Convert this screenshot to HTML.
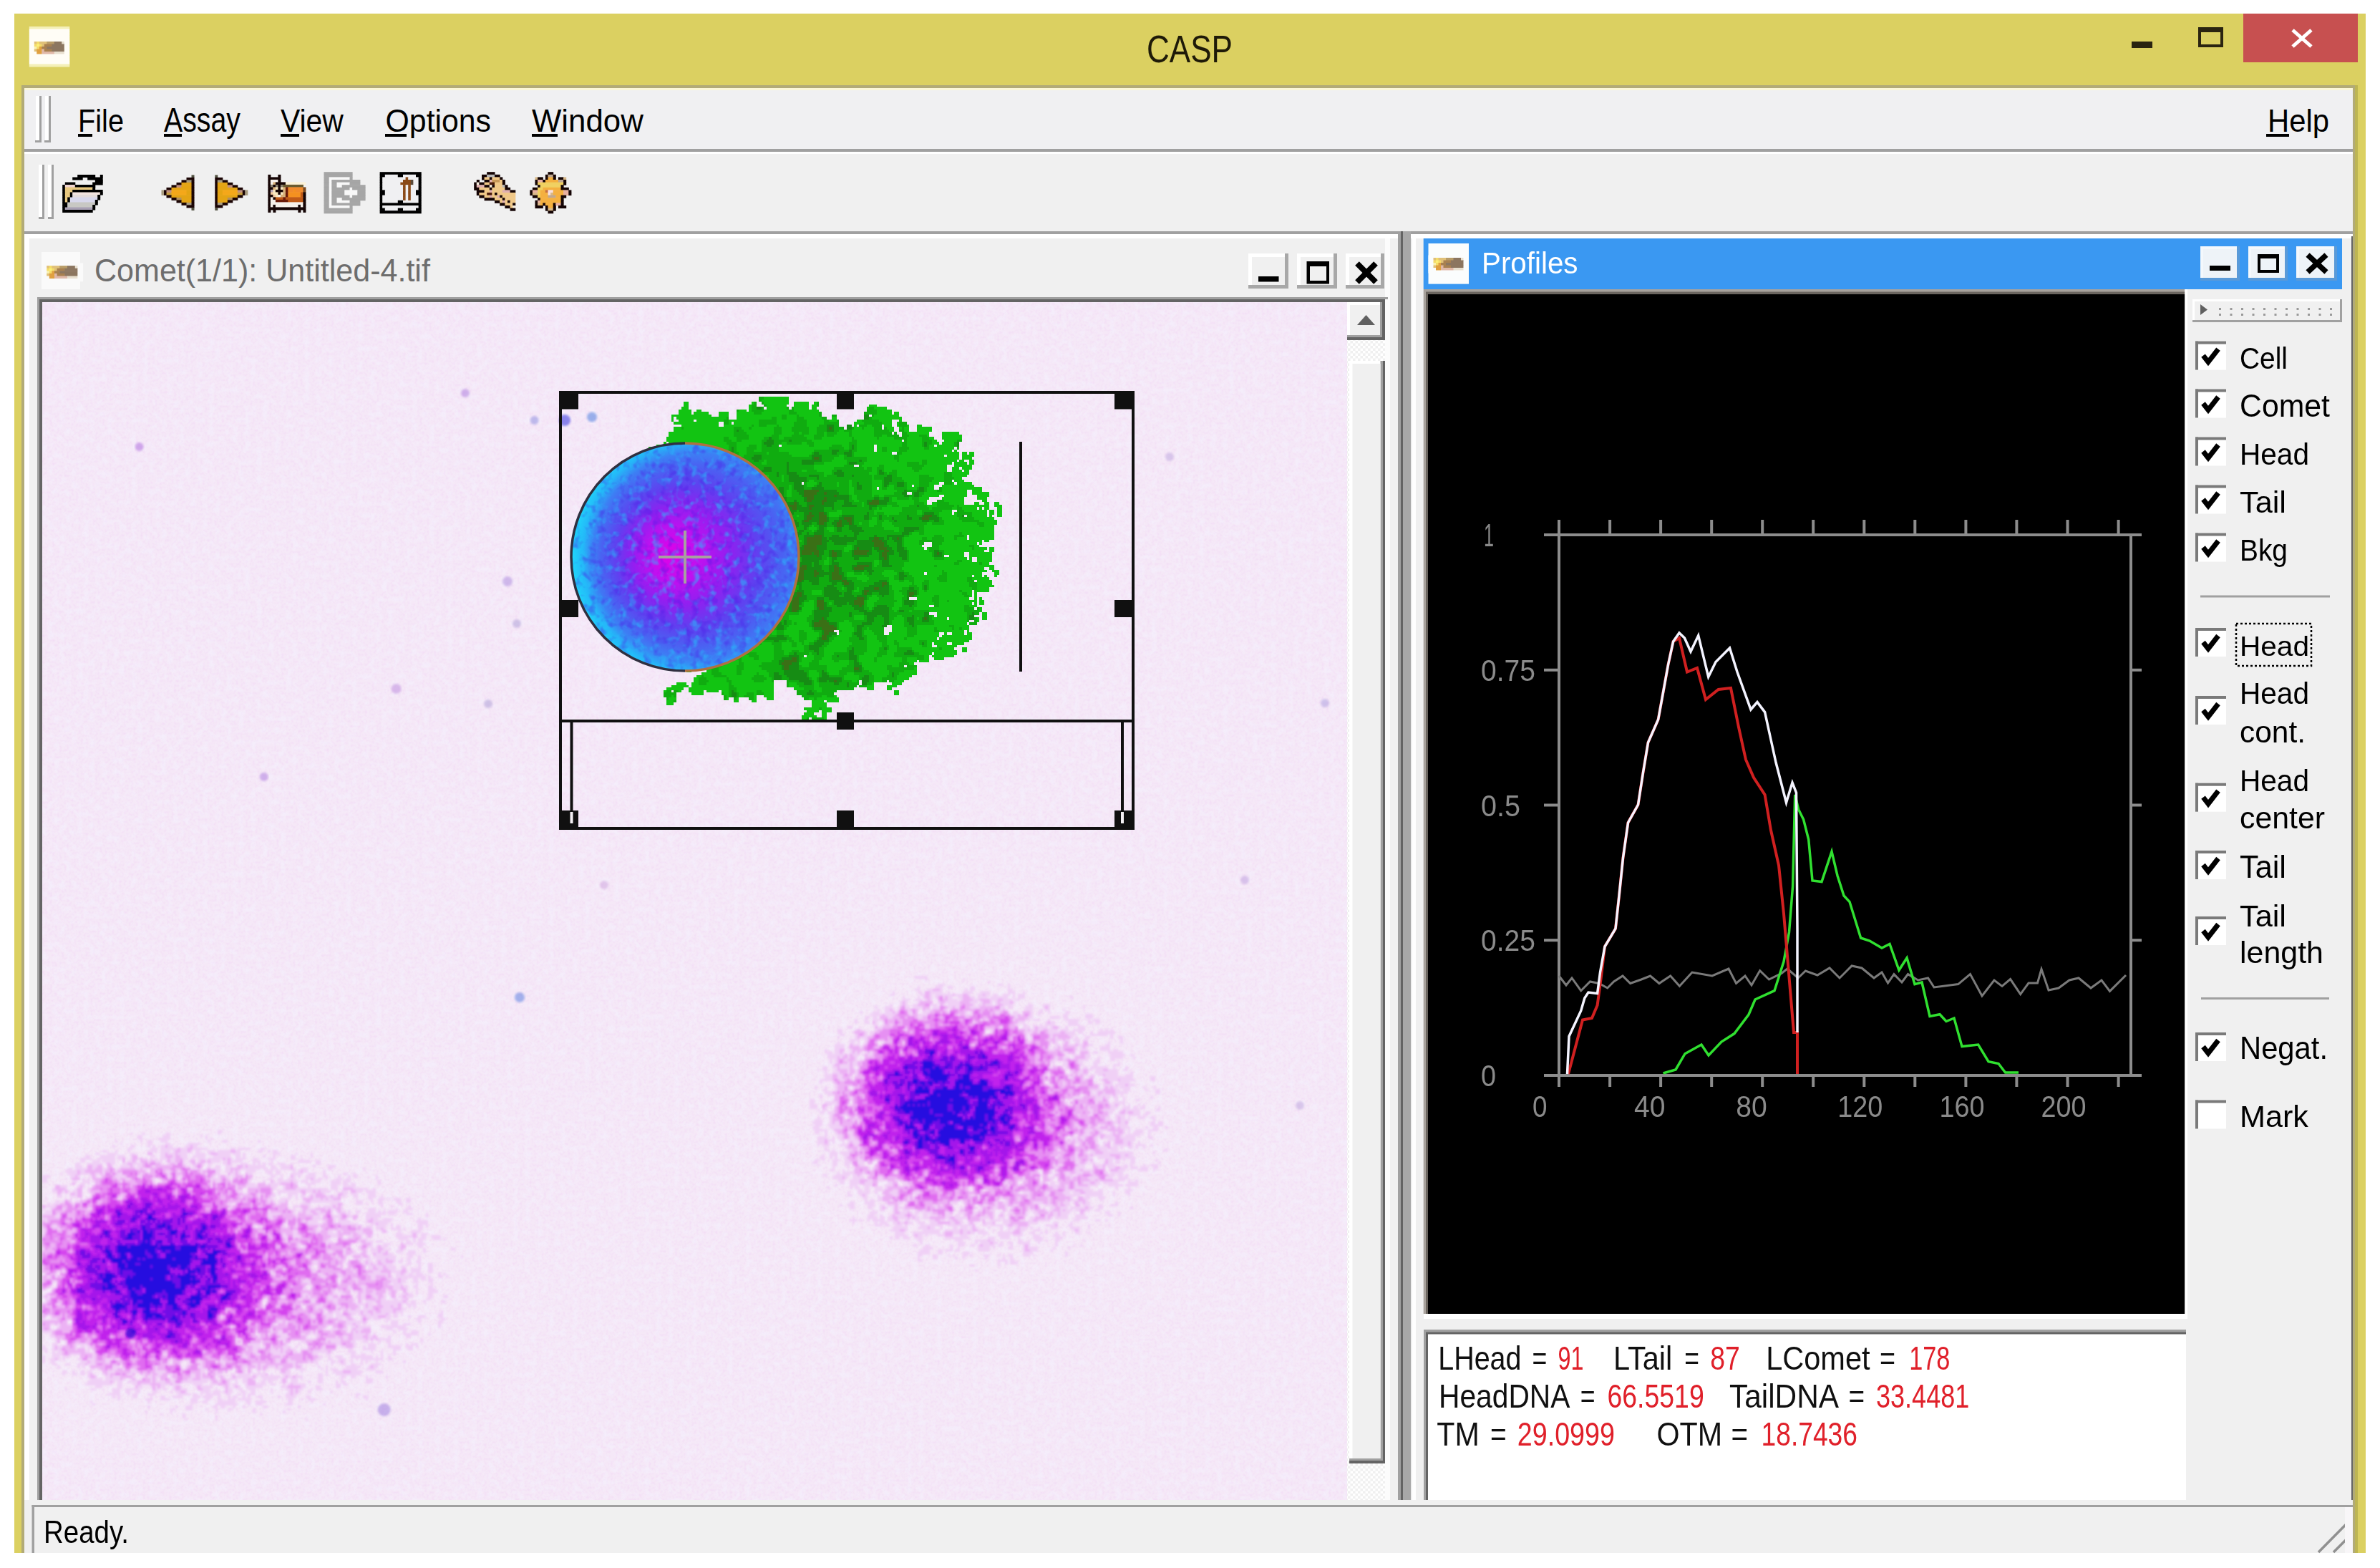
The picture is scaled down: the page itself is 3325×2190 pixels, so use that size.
<!DOCTYPE html>
<html><head><meta charset="utf-8"><title>CASP</title>
<style>
html,body{margin:0;padding:0;background:#fff;}
body{width:3325px;height:2190px;overflow:hidden;}
svg text{font-family:"Liberation Sans",sans-serif;}
</style></head>
<body>
<svg width="3325" height="2190" viewBox="0 0 3325 2190" style="display:block">
<rect x="0.0" y="0.0" width="3325.0" height="2190.0" fill="#ffffff" />
<rect x="20.0" y="19.0" width="3285.0" height="2150.0" fill="#dbd061" />
<rect x="30.0" y="119.0" width="3261.0" height="2050.0" fill="#b2ab77" />
<rect x="3290.0" y="119.0" width="4.0" height="2050.0" fill="#bdb553" />
<rect x="34.0" y="123.0" width="3253.0" height="2046.0" fill="#fbf7d6" />
<rect x="34.0" y="126.0" width="3253.0" height="2043.0" fill="#f0f0f0" />
<defs><linearGradient id="cometg" x1="0" x2="1" y1="0" y2="0"><stop offset="0" stop-color="#f7e27a"/><stop offset="0.3" stop-color="#e8b650"/><stop offset="0.6" stop-color="#a98a5c"/><stop offset="1" stop-color="#8a7a6a"/></linearGradient></defs>
<text x="1602.0" y="86.5" font-size="53.72" fill="#1e1a08" textLength="120.0" lengthAdjust="spacingAndGlyphs" >CASP</text>
<rect x="2978.0" y="58.0" width="29.0" height="9.0" fill="#2a2410" />
<rect x="3071.0" y="38.0" width="35.0" height="28.0" fill="#2a2410" />
<rect x="3075.0" y="45.0" width="27.0" height="17.0" fill="#dbd061" />
<rect x="3134.0" y="19.0" width="160.0" height="68.0" fill="#c75050" />
<line x1="3203.0" y1="42.0" x2="3229.0" y2="65.0" stroke="#ffffff" stroke-width="5" />
<line x1="3229.0" y1="42.0" x2="3203.0" y2="65.0" stroke="#ffffff" stroke-width="5" />
<rect x="34.0" y="126.0" width="3253.0" height="82.0" fill="#f0f0f2" />
<rect x="34.0" y="208.0" width="3253.0" height="4.0" fill="#a0a0a0" />
<rect x="34.0" y="212.0" width="3253.0" height="3.0" fill="#ffffff" />
<rect x="55.0" y="134.0" width="3.0" height="65.0" fill="#a0a0a0" />
<rect x="68.0" y="134.0" width="3.0" height="65.0" fill="#a0a0a0" />
<rect x="50.0" y="134.0" width="5.0" height="65.0" fill="#ffffff" />
<rect x="63.0" y="134.0" width="5.0" height="65.0" fill="#ffffff" />
<rect x="49.0" y="196.0" width="9.0" height="3.0" fill="#a0a0a0" />
<rect x="62.0" y="196.0" width="9.0" height="3.0" fill="#a0a0a0" />
<text x="109.0" y="183.6" font-size="44.97" fill="#000000" textLength="64.0" lengthAdjust="spacingAndGlyphs" >File</text>
<text x="229.0" y="183.6" font-size="47.38" fill="#000000" textLength="107.0" lengthAdjust="spacingAndGlyphs" >Assay</text>
<text x="392.0" y="183.6" font-size="44.97" fill="#000000" textLength="87.9" lengthAdjust="spacingAndGlyphs" >View</text>
<text x="538.6" y="183.6" font-size="44.97" fill="#000000" textLength="147.4" lengthAdjust="spacingAndGlyphs" >Options</text>
<text x="743.0" y="183.6" font-size="44.97" fill="#000000" textLength="155.9" lengthAdjust="spacingAndGlyphs" >Window</text>
<rect x="109.0" y="187.0" width="20.0" height="4.0" fill="#000000" />
<rect x="229.0" y="187.0" width="25.0" height="4.0" fill="#000000" />
<rect x="392.0" y="187.0" width="26.0" height="4.0" fill="#000000" />
<rect x="538.0" y="187.0" width="30.0" height="4.0" fill="#000000" />
<rect x="743.0" y="187.0" width="36.0" height="4.0" fill="#000000" />
<text x="3168.0" y="183.6" font-size="44.97" fill="#000000" textLength="86.0" lengthAdjust="spacingAndGlyphs" >Help</text>
<rect x="3166.0" y="187.0" width="32.0" height="4.0" fill="#000000" />
<rect x="34.0" y="215.0" width="3253.0" height="108.0" fill="#f0f0f0" />
<rect x="34.0" y="323.0" width="3253.0" height="4.0" fill="#a0a0a0" />
<rect x="34.0" y="327.0" width="3253.0" height="3.0" fill="#ffffff" />
<rect x="59.0" y="230.0" width="3.0" height="76.0" fill="#a0a0a0" />
<rect x="72.0" y="230.0" width="3.0" height="76.0" fill="#a0a0a0" />
<rect x="54.0" y="230.0" width="5.0" height="76.0" fill="#ffffff" />
<rect x="67.0" y="230.0" width="5.0" height="76.0" fill="#ffffff" />
<rect x="54.0" y="303.0" width="8.0" height="3.0" fill="#a0a0a0" />
<rect x="67.0" y="303.0" width="8.0" height="3.0" fill="#a0a0a0" />
<rect x="108.2" y="244.0" width="25.0" height="4.0" fill="#000000" />
<rect x="139.8" y="244.0" width="4.0" height="4.0" fill="#000000" />
<rect x="101.2" y="247.5" width="14.5" height="4.0" fill="#000000" />
<rect x="122.2" y="247.5" width="21.5" height="4.0" fill="#000000" />
<rect x="132.8" y="251.0" width="11.0" height="4.0" fill="#000000" />
<rect x="90.8" y="254.5" width="14.5" height="4.0" fill="#000000" />
<rect x="129.2" y="254.5" width="14.5" height="4.0" fill="#000000" />
<rect x="87.2" y="258.0" width="4.0" height="4.0" fill="#000000" />
<rect x="90.8" y="258.0" width="14.5" height="4.0" fill="#f0d4d0" />
<rect x="104.8" y="258.0" width="28.5" height="4.0" fill="#000000" />
<rect x="87.2" y="261.5" width="4.0" height="4.0" fill="#000000" />
<rect x="90.8" y="261.5" width="39.0" height="4.0" fill="#e8c880" />
<rect x="129.2" y="261.5" width="4.0" height="4.0" fill="#000000" />
<rect x="87.2" y="265.0" width="4.0" height="4.0" fill="#000000" />
<rect x="90.8" y="265.0" width="11.0" height="4.0" fill="#e8c880" />
<rect x="101.2" y="265.0" width="42.5" height="4.0" fill="#000000" />
<rect x="87.2" y="268.5" width="4.0" height="4.0" fill="#000000" />
<rect x="90.8" y="268.5" width="7.5" height="4.0" fill="#e8c880" />
<rect x="97.8" y="268.5" width="4.0" height="4.0" fill="#000000" />
<rect x="101.2" y="268.5" width="39.0" height="4.0" fill="#f2e4e0" />
<rect x="139.8" y="268.5" width="4.0" height="4.0" fill="#000000" />
<rect x="87.2" y="272.0" width="4.0" height="4.0" fill="#000000" />
<rect x="90.8" y="272.0" width="7.5" height="4.0" fill="#e8c880" />
<rect x="97.8" y="272.0" width="4.0" height="4.0" fill="#000000" />
<rect x="101.2" y="272.0" width="35.5" height="4.0" fill="#e4dcdc" />
<rect x="136.2" y="272.0" width="4.0" height="4.0" fill="#000000" />
<rect x="87.2" y="275.5" width="4.0" height="4.0" fill="#000000" />
<rect x="90.8" y="275.5" width="4.0" height="4.0" fill="#e8c880" />
<rect x="94.2" y="275.5" width="4.0" height="4.0" fill="#000000" />
<rect x="97.8" y="275.5" width="39.0" height="4.0" fill="#d8d8ec" />
<rect x="136.2" y="275.5" width="4.0" height="4.0" fill="#000000" />
<rect x="87.2" y="279.0" width="4.0" height="4.0" fill="#000000" />
<rect x="90.8" y="279.0" width="4.0" height="4.0" fill="#e8c880" />
<rect x="94.2" y="279.0" width="4.0" height="4.0" fill="#000000" />
<rect x="97.8" y="279.0" width="35.5" height="4.0" fill="#d8d8ec" />
<rect x="132.8" y="279.0" width="4.0" height="4.0" fill="#000000" />
<rect x="87.2" y="282.5" width="7.5" height="4.0" fill="#000000" />
<rect x="94.2" y="282.5" width="39.0" height="4.0" fill="#c8c8c4" />
<rect x="132.8" y="282.5" width="4.0" height="4.0" fill="#000000" />
<rect x="87.2" y="286.0" width="7.5" height="4.0" fill="#000000" />
<rect x="94.2" y="286.0" width="35.5" height="4.0" fill="#c8c8c4" />
<rect x="129.2" y="286.0" width="4.0" height="4.0" fill="#000000" />
<rect x="87.2" y="289.5" width="4.0" height="4.0" fill="#000000" />
<rect x="90.8" y="289.5" width="39.0" height="4.0" fill="#a8a0b4" />
<rect x="129.2" y="289.5" width="4.0" height="4.0" fill="#000000" />
<rect x="87.2" y="293.0" width="42.5" height="4.0" fill="#000000" />
<rect x="267.5" y="244.4" width="4.0" height="4.0" fill="#505040" />
<rect x="260.5" y="247.9" width="11.0" height="4.0" fill="#1a0404" />
<rect x="253.5" y="251.4" width="7.5" height="4.0" fill="#1a0404" />
<rect x="260.5" y="251.4" width="7.5" height="4.0" fill="#a89c80" />
<rect x="267.5" y="251.4" width="4.0" height="4.0" fill="#1a0404" />
<rect x="246.5" y="254.9" width="7.5" height="4.0" fill="#1a0404" />
<rect x="253.5" y="254.9" width="14.5" height="4.0" fill="#e4a414" />
<rect x="267.5" y="254.9" width="4.0" height="4.0" fill="#1a0404" />
<rect x="239.5" y="258.4" width="7.5" height="4.0" fill="#1a0404" />
<rect x="246.5" y="258.4" width="7.5" height="4.0" fill="#c09080" />
<rect x="253.5" y="258.4" width="14.5" height="4.0" fill="#e4a414" />
<rect x="267.5" y="258.4" width="4.0" height="4.0" fill="#1a0404" />
<rect x="232.5" y="261.9" width="7.5" height="4.0" fill="#1a0404" />
<rect x="239.5" y="261.9" width="28.5" height="4.0" fill="#e4a414" />
<rect x="267.5" y="261.9" width="4.0" height="4.0" fill="#1a0404" />
<rect x="225.5" y="265.4" width="4.0" height="4.0" fill="#a89c80" />
<rect x="229.0" y="265.4" width="4.0" height="4.0" fill="#1a0404" />
<rect x="232.5" y="265.4" width="7.5" height="4.0" fill="#c09080" />
<rect x="239.5" y="265.4" width="21.5" height="4.0" fill="#f4a81a" />
<rect x="260.5" y="265.4" width="7.5" height="4.0" fill="#e4a414" />
<rect x="267.5" y="265.4" width="4.0" height="4.0" fill="#1a0404" />
<rect x="225.5" y="268.9" width="4.0" height="4.0" fill="#a89c80" />
<rect x="229.0" y="268.9" width="4.0" height="4.0" fill="#1a0404" />
<rect x="232.5" y="268.9" width="7.5" height="4.0" fill="#c8a040" />
<rect x="239.5" y="268.9" width="21.5" height="4.0" fill="#f4a81a" />
<rect x="260.5" y="268.9" width="7.5" height="4.0" fill="#e4a414" />
<rect x="267.5" y="268.9" width="4.0" height="4.0" fill="#1a0404" />
<rect x="232.5" y="272.4" width="7.5" height="4.0" fill="#1a0404" />
<rect x="239.5" y="272.4" width="28.5" height="4.0" fill="#e4a414" />
<rect x="267.5" y="272.4" width="4.0" height="4.0" fill="#1a0404" />
<rect x="239.5" y="275.9" width="7.5" height="4.0" fill="#1a0404" />
<rect x="246.5" y="275.9" width="7.5" height="4.0" fill="#b09060" />
<rect x="253.5" y="275.9" width="14.5" height="4.0" fill="#e4a414" />
<rect x="267.5" y="275.9" width="4.0" height="4.0" fill="#1a0404" />
<rect x="246.5" y="279.4" width="7.5" height="4.0" fill="#1a0404" />
<rect x="253.5" y="279.4" width="14.5" height="4.0" fill="#e4a414" />
<rect x="267.5" y="279.4" width="4.0" height="4.0" fill="#1a0404" />
<rect x="253.5" y="282.9" width="7.5" height="4.0" fill="#1a0404" />
<rect x="260.5" y="282.9" width="7.5" height="4.0" fill="#a89c80" />
<rect x="267.5" y="282.9" width="4.0" height="4.0" fill="#1a0404" />
<rect x="260.5" y="286.4" width="11.0" height="4.0" fill="#1a0404" />
<rect x="267.5" y="289.9" width="4.0" height="4.0" fill="#505040" />
<rect x="300.3" y="244.4" width="4.0" height="4.0" fill="#505040" />
<rect x="300.3" y="247.9" width="11.0" height="4.0" fill="#1a0404" />
<rect x="300.3" y="251.4" width="4.0" height="4.0" fill="#1a0404" />
<rect x="303.8" y="251.4" width="7.5" height="4.0" fill="#a89c80" />
<rect x="310.8" y="251.4" width="7.5" height="4.0" fill="#1a0404" />
<rect x="300.3" y="254.9" width="4.0" height="4.0" fill="#1a0404" />
<rect x="303.8" y="254.9" width="14.5" height="4.0" fill="#e4a414" />
<rect x="317.8" y="254.9" width="7.5" height="4.0" fill="#1a0404" />
<rect x="300.3" y="258.4" width="4.0" height="4.0" fill="#1a0404" />
<rect x="303.8" y="258.4" width="14.5" height="4.0" fill="#e4a414" />
<rect x="317.8" y="258.4" width="7.5" height="4.0" fill="#c09080" />
<rect x="324.8" y="258.4" width="7.5" height="4.0" fill="#1a0404" />
<rect x="300.3" y="261.9" width="4.0" height="4.0" fill="#1a0404" />
<rect x="303.8" y="261.9" width="28.5" height="4.0" fill="#e4a414" />
<rect x="331.8" y="261.9" width="7.5" height="4.0" fill="#1a0404" />
<rect x="300.3" y="265.4" width="4.0" height="4.0" fill="#1a0404" />
<rect x="303.8" y="265.4" width="7.5" height="4.0" fill="#e4a414" />
<rect x="310.8" y="265.4" width="21.5" height="4.0" fill="#f4a81a" />
<rect x="331.8" y="265.4" width="7.5" height="4.0" fill="#c09080" />
<rect x="338.8" y="265.4" width="4.0" height="4.0" fill="#1a0404" />
<rect x="342.3" y="265.4" width="4.0" height="4.0" fill="#a89c80" />
<rect x="300.3" y="268.9" width="4.0" height="4.0" fill="#1a0404" />
<rect x="303.8" y="268.9" width="7.5" height="4.0" fill="#e4a414" />
<rect x="310.8" y="268.9" width="21.5" height="4.0" fill="#f4a81a" />
<rect x="331.8" y="268.9" width="7.5" height="4.0" fill="#c8a040" />
<rect x="338.8" y="268.9" width="4.0" height="4.0" fill="#1a0404" />
<rect x="342.3" y="268.9" width="4.0" height="4.0" fill="#a89c80" />
<rect x="300.3" y="272.4" width="4.0" height="4.0" fill="#1a0404" />
<rect x="303.8" y="272.4" width="28.5" height="4.0" fill="#e4a414" />
<rect x="331.8" y="272.4" width="7.5" height="4.0" fill="#1a0404" />
<rect x="300.3" y="275.9" width="4.0" height="4.0" fill="#1a0404" />
<rect x="303.8" y="275.9" width="14.5" height="4.0" fill="#e4a414" />
<rect x="317.8" y="275.9" width="7.5" height="4.0" fill="#b09060" />
<rect x="324.8" y="275.9" width="7.5" height="4.0" fill="#1a0404" />
<rect x="300.3" y="279.4" width="4.0" height="4.0" fill="#1a0404" />
<rect x="303.8" y="279.4" width="14.5" height="4.0" fill="#e4a414" />
<rect x="317.8" y="279.4" width="7.5" height="4.0" fill="#1a0404" />
<rect x="300.3" y="282.9" width="4.0" height="4.0" fill="#1a0404" />
<rect x="303.8" y="282.9" width="7.5" height="4.0" fill="#a89c80" />
<rect x="310.8" y="282.9" width="7.5" height="4.0" fill="#1a0404" />
<rect x="300.3" y="286.4" width="11.0" height="4.0" fill="#1a0404" />
<rect x="300.3" y="289.9" width="4.0" height="4.0" fill="#505040" />
<rect x="374.4" y="243.9" width="4.0" height="4.0" fill="#140404" />
<rect x="388.4" y="243.9" width="4.0" height="4.0" fill="#140404" />
<rect x="374.4" y="247.4" width="18.0" height="4.0" fill="#140404" />
<rect x="374.4" y="250.9" width="4.0" height="4.0" fill="#140404" />
<rect x="377.9" y="250.9" width="11.0" height="4.0" fill="#f6f0ea" />
<rect x="388.4" y="250.9" width="4.0" height="4.0" fill="#140404" />
<rect x="374.4" y="254.4" width="4.0" height="4.0" fill="#140404" />
<rect x="377.9" y="254.4" width="4.0" height="4.0" fill="#f6f0ea" />
<rect x="381.4" y="254.4" width="4.0" height="4.0" fill="#d8b078" />
<rect x="384.9" y="254.4" width="14.5" height="4.0" fill="#140404" />
<rect x="398.9" y="254.4" width="28.5" height="4.0" fill="#fcf2d8" />
<rect x="374.4" y="257.9" width="4.0" height="4.0" fill="#140404" />
<rect x="377.9" y="257.9" width="4.0" height="4.0" fill="#8a8270" />
<rect x="381.4" y="257.9" width="4.0" height="4.0" fill="#140404" />
<rect x="384.9" y="257.9" width="4.0" height="4.0" fill="#8a8270" />
<rect x="388.4" y="257.9" width="4.0" height="4.0" fill="#140404" />
<rect x="391.9" y="257.9" width="4.0" height="4.0" fill="#8a8270" />
<rect x="395.4" y="257.9" width="28.5" height="4.0" fill="#6a5a30" />
<rect x="374.4" y="261.4" width="7.5" height="4.0" fill="#140404" />
<rect x="381.4" y="261.4" width="4.0" height="4.0" fill="#d8b078" />
<rect x="384.9" y="261.4" width="4.0" height="4.0" fill="#f8e8c0" />
<rect x="388.4" y="261.4" width="4.0" height="4.0" fill="#140404" />
<rect x="391.9" y="261.4" width="4.0" height="4.0" fill="#f8e8c0" />
<rect x="395.4" y="261.4" width="4.0" height="4.0" fill="#d8b078" />
<rect x="398.9" y="261.4" width="4.0" height="4.0" fill="#6a1a08" />
<rect x="402.4" y="261.4" width="21.5" height="4.0" fill="#f08a2c" />
<rect x="423.4" y="261.4" width="4.0" height="4.0" fill="#7a4a20" />
<rect x="374.4" y="264.9" width="4.0" height="4.0" fill="#140404" />
<rect x="377.9" y="264.9" width="4.0" height="4.0" fill="#b8a8b8" />
<rect x="381.4" y="264.9" width="4.0" height="4.0" fill="#f8e8c0" />
<rect x="384.9" y="264.9" width="11.0" height="4.0" fill="#140404" />
<rect x="395.4" y="264.9" width="4.0" height="4.0" fill="#d8b078" />
<rect x="398.9" y="264.9" width="4.0" height="4.0" fill="#6a1a08" />
<rect x="402.4" y="264.9" width="7.5" height="4.0" fill="#f08a2c" />
<rect x="409.4" y="264.9" width="4.0" height="4.0" fill="#f49020" />
<rect x="412.9" y="264.9" width="11.0" height="4.0" fill="#f08a2c" />
<rect x="423.4" y="264.9" width="4.0" height="4.0" fill="#7a4a20" />
<rect x="374.4" y="268.4" width="4.0" height="4.0" fill="#140404" />
<rect x="377.9" y="268.4" width="4.0" height="4.0" fill="#f0c8a0" />
<rect x="381.4" y="268.4" width="7.5" height="4.0" fill="#f8e8c0" />
<rect x="388.4" y="268.4" width="4.0" height="4.0" fill="#140404" />
<rect x="391.9" y="268.4" width="4.0" height="4.0" fill="#f8e8c0" />
<rect x="395.4" y="268.4" width="4.0" height="4.0" fill="#d8b078" />
<rect x="398.9" y="268.4" width="4.0" height="4.0" fill="#6a1a08" />
<rect x="402.4" y="268.4" width="18.0" height="4.0" fill="#f49020" />
<rect x="419.9" y="268.4" width="4.0" height="4.0" fill="#c05a18" />
<rect x="423.4" y="268.4" width="4.0" height="4.0" fill="#140404" />
<rect x="374.4" y="271.9" width="7.5" height="4.0" fill="#140404" />
<rect x="381.4" y="271.9" width="4.0" height="4.0" fill="#f0c8a0" />
<rect x="384.9" y="271.9" width="4.0" height="4.0" fill="#f8e8c0" />
<rect x="388.4" y="271.9" width="4.0" height="4.0" fill="#f6f0ea" />
<rect x="391.9" y="271.9" width="7.5" height="4.0" fill="#d8b078" />
<rect x="398.9" y="271.9" width="4.0" height="4.0" fill="#6a1a08" />
<rect x="402.4" y="271.9" width="18.0" height="4.0" fill="#f49020" />
<rect x="419.9" y="271.9" width="4.0" height="4.0" fill="#c05a18" />
<rect x="423.4" y="271.9" width="4.0" height="4.0" fill="#140404" />
<rect x="374.4" y="275.4" width="4.0" height="4.0" fill="#140404" />
<rect x="377.9" y="275.4" width="4.0" height="4.0" fill="#f6f0ea" />
<rect x="381.4" y="275.4" width="4.0" height="4.0" fill="#140404" />
<rect x="384.9" y="275.4" width="11.0" height="4.0" fill="#c05a18" />
<rect x="395.4" y="275.4" width="4.0" height="4.0" fill="#6a1a08" />
<rect x="398.9" y="275.4" width="25.0" height="4.0" fill="#c05a18" />
<rect x="423.4" y="275.4" width="4.0" height="4.0" fill="#140404" />
<rect x="374.4" y="278.9" width="4.0" height="4.0" fill="#140404" />
<rect x="377.9" y="278.9" width="7.5" height="4.0" fill="#f6f0ea" />
<rect x="384.9" y="278.9" width="18.0" height="4.0" fill="#6a1a08" />
<rect x="402.4" y="278.9" width="21.5" height="4.0" fill="#c05a18" />
<rect x="423.4" y="278.9" width="4.0" height="4.0" fill="#140404" />
<rect x="374.4" y="282.4" width="4.0" height="4.0" fill="#140404" />
<rect x="377.9" y="282.4" width="46.0" height="4.0" fill="#f6f0ea" />
<rect x="423.4" y="282.4" width="4.0" height="4.0" fill="#140404" />
<rect x="374.4" y="285.9" width="4.0" height="4.0" fill="#140404" />
<rect x="377.9" y="285.9" width="4.0" height="4.0" fill="#f6f0ea" />
<rect x="381.4" y="285.9" width="4.0" height="4.0" fill="#140404" />
<rect x="384.9" y="285.9" width="32.0" height="4.0" fill="#f6f0ea" />
<rect x="416.4" y="285.9" width="4.0" height="4.0" fill="#140404" />
<rect x="419.9" y="285.9" width="4.0" height="4.0" fill="#f6f0ea" />
<rect x="423.4" y="285.9" width="4.0" height="4.0" fill="#140404" />
<rect x="374.4" y="289.4" width="53.0" height="4.0" fill="#140404" />
<rect x="374.4" y="292.9" width="4.0" height="4.0" fill="#140404" />
<rect x="381.4" y="292.9" width="4.0" height="4.0" fill="#140404" />
<rect x="416.4" y="292.9" width="4.0" height="4.0" fill="#140404" />
<rect x="423.4" y="292.9" width="4.0" height="4.0" fill="#140404" />
<rect x="452.5" y="240.2" width="40.1" height="4.1" fill="#a6a6a6" />
<rect x="452.5" y="243.8" width="40.1" height="4.1" fill="#a6a6a6" />
<rect x="452.5" y="247.4" width="7.7" height="4.1" fill="#a6a6a6" />
<rect x="459.7" y="247.4" width="29.3" height="4.1" fill="#f8f8f8" />
<rect x="488.5" y="247.4" width="4.1" height="4.1" fill="#a6a6a6" />
<rect x="452.5" y="251.0" width="7.7" height="4.1" fill="#a6a6a6" />
<rect x="459.7" y="251.0" width="4.1" height="4.1" fill="#f8f8f8" />
<rect x="463.3" y="251.0" width="40.1" height="4.1" fill="#a6a6a6" />
<rect x="452.5" y="254.6" width="7.7" height="4.1" fill="#a6a6a6" />
<rect x="459.7" y="254.6" width="4.1" height="4.1" fill="#f8f8f8" />
<rect x="463.3" y="254.6" width="7.7" height="4.1" fill="#a6a6a6" />
<rect x="470.5" y="254.6" width="18.5" height="4.1" fill="#f8f8f8" />
<rect x="488.5" y="254.6" width="14.9" height="4.1" fill="#a6a6a6" />
<rect x="452.5" y="258.2" width="7.7" height="4.1" fill="#a6a6a6" />
<rect x="459.7" y="258.2" width="4.1" height="4.1" fill="#f8f8f8" />
<rect x="463.3" y="258.2" width="7.7" height="4.1" fill="#a6a6a6" />
<rect x="470.5" y="258.2" width="7.7" height="4.1" fill="#f8f8f8" />
<rect x="477.7" y="258.2" width="32.9" height="4.1" fill="#a6a6a6" />
<rect x="452.5" y="261.8" width="7.7" height="4.1" fill="#a6a6a6" />
<rect x="459.7" y="261.8" width="4.1" height="4.1" fill="#f8f8f8" />
<rect x="463.3" y="261.8" width="25.7" height="4.1" fill="#a6a6a6" />
<rect x="488.5" y="261.8" width="4.1" height="4.1" fill="#f8f8f8" />
<rect x="492.1" y="261.8" width="18.5" height="4.1" fill="#a6a6a6" />
<rect x="452.5" y="265.4" width="7.7" height="4.1" fill="#a6a6a6" />
<rect x="459.7" y="265.4" width="4.1" height="4.1" fill="#f8f8f8" />
<rect x="463.3" y="265.4" width="18.5" height="4.1" fill="#a6a6a6" />
<rect x="481.3" y="265.4" width="18.5" height="4.1" fill="#f8f8f8" />
<rect x="499.3" y="265.4" width="11.3" height="4.1" fill="#a6a6a6" />
<rect x="452.5" y="269.0" width="7.7" height="4.1" fill="#a6a6a6" />
<rect x="459.7" y="269.0" width="4.1" height="4.1" fill="#f8f8f8" />
<rect x="463.3" y="269.0" width="18.5" height="4.1" fill="#a6a6a6" />
<rect x="481.3" y="269.0" width="18.5" height="4.1" fill="#f8f8f8" />
<rect x="499.3" y="269.0" width="11.3" height="4.1" fill="#a6a6a6" />
<rect x="452.5" y="272.6" width="7.7" height="4.1" fill="#a6a6a6" />
<rect x="459.7" y="272.6" width="4.1" height="4.1" fill="#f8f8f8" />
<rect x="463.3" y="272.6" width="25.7" height="4.1" fill="#a6a6a6" />
<rect x="488.5" y="272.6" width="4.1" height="4.1" fill="#f8f8f8" />
<rect x="492.1" y="272.6" width="18.5" height="4.1" fill="#a6a6a6" />
<rect x="452.5" y="276.2" width="7.7" height="4.1" fill="#a6a6a6" />
<rect x="459.7" y="276.2" width="4.1" height="4.1" fill="#f8f8f8" />
<rect x="463.3" y="276.2" width="7.7" height="4.1" fill="#a6a6a6" />
<rect x="470.5" y="276.2" width="7.7" height="4.1" fill="#f8f8f8" />
<rect x="477.7" y="276.2" width="32.9" height="4.1" fill="#a6a6a6" />
<rect x="452.5" y="279.8" width="7.7" height="4.1" fill="#a6a6a6" />
<rect x="459.7" y="279.8" width="4.1" height="4.1" fill="#f8f8f8" />
<rect x="463.3" y="279.8" width="7.7" height="4.1" fill="#a6a6a6" />
<rect x="470.5" y="279.8" width="18.5" height="4.1" fill="#f8f8f8" />
<rect x="488.5" y="279.8" width="14.9" height="4.1" fill="#a6a6a6" />
<rect x="452.5" y="283.4" width="7.7" height="4.1" fill="#a6a6a6" />
<rect x="459.7" y="283.4" width="4.1" height="4.1" fill="#f8f8f8" />
<rect x="463.3" y="283.4" width="40.1" height="4.1" fill="#a6a6a6" />
<rect x="452.5" y="287.0" width="7.7" height="4.1" fill="#a6a6a6" />
<rect x="459.7" y="287.0" width="29.3" height="4.1" fill="#f8f8f8" />
<rect x="488.5" y="287.0" width="4.1" height="4.1" fill="#a6a6a6" />
<rect x="452.5" y="290.6" width="40.1" height="4.1" fill="#a6a6a6" />
<rect x="452.5" y="294.2" width="40.1" height="4.1" fill="#a6a6a6" />
<rect x="530.6" y="240.2" width="58.1" height="4.1" fill="#000000" />
<rect x="530.6" y="243.8" width="7.7" height="4.1" fill="#000000" />
<rect x="537.8" y="243.8" width="18.5" height="4.1" fill="#f0f0f2" />
<rect x="555.8" y="243.8" width="7.7" height="4.1" fill="#000000" />
<rect x="563.0" y="243.8" width="18.5" height="4.1" fill="#f0f0f2" />
<rect x="581.0" y="243.8" width="7.7" height="4.1" fill="#000000" />
<rect x="530.6" y="247.4" width="4.1" height="4.1" fill="#000000" />
<rect x="534.2" y="247.4" width="32.9" height="4.1" fill="#f0f0f2" />
<rect x="566.6" y="247.4" width="4.1" height="4.1" fill="#8a4a18" />
<rect x="570.2" y="247.4" width="14.9" height="4.1" fill="#f0f0f2" />
<rect x="584.6" y="247.4" width="4.1" height="4.1" fill="#000000" />
<rect x="530.6" y="251.0" width="4.1" height="4.1" fill="#000000" />
<rect x="534.2" y="251.0" width="29.3" height="4.1" fill="#f0f0f2" />
<rect x="563.0" y="251.0" width="11.3" height="4.1" fill="#8a4a18" />
<rect x="573.8" y="251.0" width="4.1" height="4.1" fill="#5a4a3a" />
<rect x="577.4" y="251.0" width="7.7" height="4.1" fill="#f0f0f2" />
<rect x="584.6" y="251.0" width="4.1" height="4.1" fill="#000000" />
<rect x="530.6" y="254.6" width="4.1" height="4.1" fill="#000000" />
<rect x="534.2" y="254.6" width="25.7" height="4.1" fill="#f0f0f2" />
<rect x="559.4" y="254.6" width="14.9" height="4.1" fill="#8a4a18" />
<rect x="573.8" y="254.6" width="4.1" height="4.1" fill="#5a4a3a" />
<rect x="577.4" y="254.6" width="7.7" height="4.1" fill="#f0f0f2" />
<rect x="584.6" y="254.6" width="4.1" height="4.1" fill="#000000" />
<rect x="530.6" y="258.2" width="4.1" height="4.1" fill="#000000" />
<rect x="534.2" y="258.2" width="29.3" height="4.1" fill="#f0f0f2" />
<rect x="563.0" y="258.2" width="4.1" height="4.1" fill="#8a4a18" />
<rect x="566.6" y="258.2" width="4.1" height="4.1" fill="#f0f0f2" />
<rect x="570.2" y="258.2" width="4.1" height="4.1" fill="#8a4a18" />
<rect x="573.8" y="258.2" width="11.3" height="4.1" fill="#f0f0f2" />
<rect x="584.6" y="258.2" width="4.1" height="4.1" fill="#000000" />
<rect x="530.6" y="261.8" width="4.1" height="4.1" fill="#000000" />
<rect x="534.2" y="261.8" width="29.3" height="4.1" fill="#f0f0f2" />
<rect x="563.0" y="261.8" width="4.1" height="4.1" fill="#8a4a18" />
<rect x="566.6" y="261.8" width="4.1" height="4.1" fill="#f0f0f2" />
<rect x="570.2" y="261.8" width="4.1" height="4.1" fill="#8a4a18" />
<rect x="573.8" y="261.8" width="11.3" height="4.1" fill="#f0f0f2" />
<rect x="584.6" y="261.8" width="4.1" height="4.1" fill="#000000" />
<rect x="530.6" y="265.4" width="7.7" height="4.1" fill="#000000" />
<rect x="537.8" y="265.4" width="25.7" height="4.1" fill="#f0f0f2" />
<rect x="563.0" y="265.4" width="4.1" height="4.1" fill="#8a4a18" />
<rect x="566.6" y="265.4" width="4.1" height="4.1" fill="#f0f0f2" />
<rect x="570.2" y="265.4" width="4.1" height="4.1" fill="#8a4a18" />
<rect x="573.8" y="265.4" width="7.7" height="4.1" fill="#f0f0f2" />
<rect x="581.0" y="265.4" width="7.7" height="4.1" fill="#000000" />
<rect x="530.6" y="269.0" width="7.7" height="4.1" fill="#000000" />
<rect x="537.8" y="269.0" width="25.7" height="4.1" fill="#f0f0f2" />
<rect x="563.0" y="269.0" width="4.1" height="4.1" fill="#8a4a18" />
<rect x="566.6" y="269.0" width="4.1" height="4.1" fill="#f0f0f2" />
<rect x="570.2" y="269.0" width="4.1" height="4.1" fill="#8a4a18" />
<rect x="573.8" y="269.0" width="7.7" height="4.1" fill="#f0f0f2" />
<rect x="581.0" y="269.0" width="7.7" height="4.1" fill="#000000" />
<rect x="530.6" y="272.6" width="4.1" height="4.1" fill="#000000" />
<rect x="534.2" y="272.6" width="29.3" height="4.1" fill="#f0f0f2" />
<rect x="563.0" y="272.6" width="4.1" height="4.1" fill="#8a4a18" />
<rect x="566.6" y="272.6" width="4.1" height="4.1" fill="#f0f0f2" />
<rect x="570.2" y="272.6" width="4.1" height="4.1" fill="#8a4a18" />
<rect x="573.8" y="272.6" width="11.3" height="4.1" fill="#f0f0f2" />
<rect x="584.6" y="272.6" width="4.1" height="4.1" fill="#000000" />
<rect x="530.6" y="276.2" width="4.1" height="4.1" fill="#000000" />
<rect x="534.2" y="276.2" width="29.3" height="4.1" fill="#f0f0f2" />
<rect x="563.0" y="276.2" width="4.1" height="4.1" fill="#8a4a18" />
<rect x="566.6" y="276.2" width="4.1" height="4.1" fill="#f0f0f2" />
<rect x="570.2" y="276.2" width="4.1" height="4.1" fill="#8a4a18" />
<rect x="573.8" y="276.2" width="11.3" height="4.1" fill="#f0f0f2" />
<rect x="584.6" y="276.2" width="4.1" height="4.1" fill="#000000" />
<rect x="530.6" y="279.8" width="4.1" height="4.1" fill="#000000" />
<rect x="534.2" y="279.8" width="22.1" height="4.1" fill="#f0f0f2" />
<rect x="555.8" y="279.8" width="7.7" height="4.1" fill="#000000" />
<rect x="563.0" y="279.8" width="22.1" height="4.1" fill="#f0f0f2" />
<rect x="584.6" y="279.8" width="4.1" height="4.1" fill="#000000" />
<rect x="530.6" y="283.4" width="58.1" height="4.1" fill="#000000" />
<rect x="530.6" y="287.0" width="4.1" height="4.1" fill="#000000" />
<rect x="534.2" y="287.0" width="50.9" height="4.1" fill="#f0f0f2" />
<rect x="584.6" y="287.0" width="4.1" height="4.1" fill="#000000" />
<rect x="530.6" y="290.6" width="7.7" height="4.1" fill="#000000" />
<rect x="537.8" y="290.6" width="18.5" height="4.1" fill="#f0f0f2" />
<rect x="555.8" y="290.6" width="7.7" height="4.1" fill="#000000" />
<rect x="563.0" y="290.6" width="18.5" height="4.1" fill="#f0f0f2" />
<rect x="581.0" y="290.6" width="7.7" height="4.1" fill="#000000" />
<rect x="530.6" y="294.2" width="58.1" height="4.1" fill="#000000" />
<rect x="680.2" y="240.2" width="11.3" height="4.1" fill="#140404" />
<rect x="673.0" y="243.8" width="7.7" height="4.1" fill="#140404" />
<rect x="680.2" y="243.8" width="11.3" height="4.1" fill="#b8b8b8" />
<rect x="691.0" y="243.8" width="7.7" height="4.1" fill="#140404" />
<rect x="673.0" y="247.4" width="4.1" height="4.1" fill="#140404" />
<rect x="676.6" y="247.4" width="7.7" height="4.1" fill="#f0c888" />
<rect x="683.8" y="247.4" width="4.1" height="4.1" fill="#140404" />
<rect x="687.4" y="247.4" width="11.3" height="4.1" fill="#f0c888" />
<rect x="698.2" y="247.4" width="4.1" height="4.1" fill="#140404" />
<rect x="665.8" y="251.0" width="4.1" height="4.1" fill="#140404" />
<rect x="676.6" y="251.0" width="7.7" height="4.1" fill="#140404" />
<rect x="683.8" y="251.0" width="4.1" height="4.1" fill="#e0b0b0" />
<rect x="687.4" y="251.0" width="11.3" height="4.1" fill="#c89858" />
<rect x="698.2" y="251.0" width="4.1" height="4.1" fill="#f0c888" />
<rect x="701.8" y="251.0" width="4.1" height="4.1" fill="#140404" />
<rect x="662.2" y="254.6" width="4.1" height="4.1" fill="#140404" />
<rect x="665.8" y="254.6" width="4.1" height="4.1" fill="#f8f0e0" />
<rect x="669.4" y="254.6" width="7.7" height="4.1" fill="#140404" />
<rect x="676.6" y="254.6" width="7.7" height="4.1" fill="#f0c888" />
<rect x="683.8" y="254.6" width="7.7" height="4.1" fill="#4a1a08" />
<rect x="691.0" y="254.6" width="11.3" height="4.1" fill="#f0c888" />
<rect x="701.8" y="254.6" width="4.1" height="4.1" fill="#140404" />
<rect x="662.2" y="258.2" width="4.1" height="4.1" fill="#140404" />
<rect x="665.8" y="258.2" width="11.3" height="4.1" fill="#e0b0b0" />
<rect x="676.6" y="258.2" width="7.7" height="4.1" fill="#140404" />
<rect x="683.8" y="258.2" width="4.1" height="4.1" fill="#f8f0e0" />
<rect x="687.4" y="258.2" width="4.1" height="4.1" fill="#140404" />
<rect x="691.0" y="258.2" width="11.3" height="4.1" fill="#f0c888" />
<rect x="701.8" y="258.2" width="4.1" height="4.1" fill="#b8b8b8" />
<rect x="705.4" y="258.2" width="4.1" height="4.1" fill="#140404" />
<rect x="662.2" y="261.8" width="7.7" height="4.1" fill="#140404" />
<rect x="669.4" y="261.8" width="14.9" height="4.1" fill="#f0c888" />
<rect x="683.8" y="261.8" width="4.1" height="4.1" fill="#140404" />
<rect x="687.4" y="261.8" width="18.5" height="4.1" fill="#f0c888" />
<rect x="705.4" y="261.8" width="7.7" height="4.1" fill="#140404" />
<rect x="665.8" y="265.4" width="11.3" height="4.1" fill="#140404" />
<rect x="676.6" y="265.4" width="7.7" height="4.1" fill="#f0c888" />
<rect x="683.8" y="265.4" width="4.1" height="4.1" fill="#e0b0b0" />
<rect x="687.4" y="265.4" width="14.9" height="4.1" fill="#f0c888" />
<rect x="701.8" y="265.4" width="11.3" height="4.1" fill="#e0b0b0" />
<rect x="712.6" y="265.4" width="7.7" height="4.1" fill="#140404" />
<rect x="665.8" y="269.0" width="4.1" height="4.1" fill="#140404" />
<rect x="669.4" y="269.0" width="11.3" height="4.1" fill="#f0c888" />
<rect x="680.2" y="269.0" width="7.7" height="4.1" fill="#4a1a08" />
<rect x="687.4" y="269.0" width="4.1" height="4.1" fill="#f0c888" />
<rect x="691.0" y="269.0" width="4.1" height="4.1" fill="#140404" />
<rect x="694.6" y="269.0" width="25.7" height="4.1" fill="#f0c888" />
<rect x="669.4" y="272.6" width="7.7" height="4.1" fill="#140404" />
<rect x="676.6" y="272.6" width="7.7" height="4.1" fill="#f0c888" />
<rect x="683.8" y="272.6" width="4.1" height="4.1" fill="#e0b0b0" />
<rect x="687.4" y="272.6" width="7.7" height="4.1" fill="#f0c888" />
<rect x="694.6" y="272.6" width="4.1" height="4.1" fill="#e0b0b0" />
<rect x="698.2" y="272.6" width="4.1" height="4.1" fill="#140404" />
<rect x="701.8" y="272.6" width="18.5" height="4.1" fill="#f0c888" />
<rect x="676.6" y="276.2" width="14.9" height="4.1" fill="#140404" />
<rect x="691.0" y="276.2" width="11.3" height="4.1" fill="#f0c888" />
<rect x="701.8" y="276.2" width="4.1" height="4.1" fill="#140404" />
<rect x="705.4" y="276.2" width="14.9" height="4.1" fill="#f0c888" />
<rect x="691.0" y="279.8" width="7.7" height="4.1" fill="#140404" />
<rect x="698.2" y="279.8" width="4.1" height="4.1" fill="#f0c888" />
<rect x="701.8" y="279.8" width="4.1" height="4.1" fill="#e0b0b0" />
<rect x="705.4" y="279.8" width="4.1" height="4.1" fill="#f0c888" />
<rect x="709.0" y="279.8" width="4.1" height="4.1" fill="#140404" />
<rect x="712.6" y="279.8" width="7.7" height="4.1" fill="#f0c888" />
<rect x="698.2" y="283.4" width="7.7" height="4.1" fill="#140404" />
<rect x="705.4" y="283.4" width="11.3" height="4.1" fill="#f0c888" />
<rect x="716.2" y="283.4" width="4.1" height="4.1" fill="#140404" />
<rect x="705.4" y="287.0" width="7.7" height="4.1" fill="#140404" />
<rect x="712.6" y="287.0" width="4.1" height="4.1" fill="#f0c888" />
<rect x="716.2" y="287.0" width="4.1" height="4.1" fill="#f8f0e0" />
<rect x="712.6" y="290.6" width="7.7" height="4.1" fill="#140404" />
<rect x="765.5" y="240.2" width="7.7" height="4.1" fill="#140404" />
<rect x="761.9" y="243.8" width="4.1" height="4.1" fill="#140404" />
<rect x="765.5" y="243.8" width="7.7" height="4.1" fill="#c0a890" />
<rect x="772.7" y="243.8" width="4.1" height="4.1" fill="#140404" />
<rect x="747.5" y="247.4" width="4.1" height="4.1" fill="#d8b888" />
<rect x="751.1" y="247.4" width="7.7" height="4.1" fill="#140404" />
<rect x="761.9" y="247.4" width="4.1" height="4.1" fill="#140404" />
<rect x="765.5" y="247.4" width="7.7" height="4.1" fill="#f4b040" />
<rect x="772.7" y="247.4" width="4.1" height="4.1" fill="#140404" />
<rect x="779.9" y="247.4" width="7.7" height="4.1" fill="#140404" />
<rect x="787.1" y="247.4" width="4.1" height="4.1" fill="#d8b888" />
<rect x="747.5" y="251.0" width="4.1" height="4.1" fill="#140404" />
<rect x="751.1" y="251.0" width="7.7" height="4.1" fill="#e8b0a0" />
<rect x="758.3" y="251.0" width="4.1" height="4.1" fill="#140404" />
<rect x="761.9" y="251.0" width="18.5" height="4.1" fill="#f4b040" />
<rect x="779.9" y="251.0" width="7.7" height="4.1" fill="#c0a890" />
<rect x="787.1" y="251.0" width="4.1" height="4.1" fill="#140404" />
<rect x="747.5" y="254.6" width="4.1" height="4.1" fill="#140404" />
<rect x="751.1" y="254.6" width="36.5" height="4.1" fill="#f0d060" />
<rect x="787.1" y="254.6" width="4.1" height="4.1" fill="#140404" />
<rect x="751.1" y="258.2" width="4.1" height="4.1" fill="#140404" />
<rect x="754.7" y="258.2" width="29.3" height="4.1" fill="#f0d060" />
<rect x="783.5" y="258.2" width="4.1" height="4.1" fill="#140404" />
<rect x="743.9" y="261.8" width="7.7" height="4.1" fill="#140404" />
<rect x="751.1" y="261.8" width="7.7" height="4.1" fill="#f0d060" />
<rect x="758.3" y="261.8" width="25.7" height="4.1" fill="#f4b040" />
<rect x="783.5" y="261.8" width="11.3" height="4.1" fill="#140404" />
<rect x="740.3" y="265.4" width="4.1" height="4.1" fill="#140404" />
<rect x="743.9" y="265.4" width="7.7" height="4.1" fill="#e8b0a0" />
<rect x="751.1" y="265.4" width="4.1" height="4.1" fill="#f0d060" />
<rect x="754.7" y="265.4" width="7.7" height="4.1" fill="#f4b040" />
<rect x="761.9" y="265.4" width="4.1" height="4.1" fill="#c87040" />
<rect x="765.5" y="265.4" width="7.7" height="4.1" fill="#f8e0e0" />
<rect x="772.7" y="265.4" width="14.9" height="4.1" fill="#f4b040" />
<rect x="787.1" y="265.4" width="7.7" height="4.1" fill="#e8b0a0" />
<rect x="794.3" y="265.4" width="4.1" height="4.1" fill="#140404" />
<rect x="740.3" y="269.0" width="4.1" height="4.1" fill="#140404" />
<rect x="743.9" y="269.0" width="7.7" height="4.1" fill="#d8b888" />
<rect x="751.1" y="269.0" width="4.1" height="4.1" fill="#f0d060" />
<rect x="754.7" y="269.0" width="11.3" height="4.1" fill="#f4b040" />
<rect x="765.5" y="269.0" width="4.1" height="4.1" fill="#f8e0e0" />
<rect x="769.1" y="269.0" width="4.1" height="4.1" fill="#d8b888" />
<rect x="772.7" y="269.0" width="14.9" height="4.1" fill="#f4b040" />
<rect x="787.1" y="269.0" width="7.7" height="4.1" fill="#e8b0a0" />
<rect x="794.3" y="269.0" width="4.1" height="4.1" fill="#140404" />
<rect x="743.9" y="272.6" width="7.7" height="4.1" fill="#140404" />
<rect x="751.1" y="272.6" width="4.1" height="4.1" fill="#f0d060" />
<rect x="754.7" y="272.6" width="11.3" height="4.1" fill="#f4b040" />
<rect x="765.5" y="272.6" width="11.3" height="4.1" fill="#c0a890" />
<rect x="776.3" y="272.6" width="7.7" height="4.1" fill="#f4b040" />
<rect x="783.5" y="272.6" width="7.7" height="4.1" fill="#140404" />
<rect x="751.1" y="276.2" width="4.1" height="4.1" fill="#140404" />
<rect x="754.7" y="276.2" width="29.3" height="4.1" fill="#f4b040" />
<rect x="783.5" y="276.2" width="4.1" height="4.1" fill="#140404" />
<rect x="747.5" y="279.8" width="4.1" height="4.1" fill="#140404" />
<rect x="751.1" y="279.8" width="4.1" height="4.1" fill="#e8b0a0" />
<rect x="754.7" y="279.8" width="29.3" height="4.1" fill="#f4b040" />
<rect x="783.5" y="279.8" width="4.1" height="4.1" fill="#140404" />
<rect x="747.5" y="283.4" width="4.1" height="4.1" fill="#140404" />
<rect x="751.1" y="283.4" width="4.1" height="4.1" fill="#d8b888" />
<rect x="754.7" y="283.4" width="4.1" height="4.1" fill="#f4b040" />
<rect x="758.3" y="283.4" width="4.1" height="4.1" fill="#140404" />
<rect x="761.9" y="283.4" width="11.3" height="4.1" fill="#f4b040" />
<rect x="772.7" y="283.4" width="4.1" height="4.1" fill="#140404" />
<rect x="776.3" y="283.4" width="7.7" height="4.1" fill="#e8b0a0" />
<rect x="783.5" y="283.4" width="4.1" height="4.1" fill="#140404" />
<rect x="747.5" y="287.0" width="11.3" height="4.1" fill="#140404" />
<rect x="761.9" y="287.0" width="4.1" height="4.1" fill="#140404" />
<rect x="765.5" y="287.0" width="7.7" height="4.1" fill="#f4b040" />
<rect x="772.7" y="287.0" width="4.1" height="4.1" fill="#140404" />
<rect x="779.9" y="287.0" width="11.3" height="4.1" fill="#140404" />
<rect x="761.9" y="290.6" width="4.1" height="4.1" fill="#140404" />
<rect x="765.5" y="290.6" width="7.7" height="4.1" fill="#d8b888" />
<rect x="772.7" y="290.6" width="4.1" height="4.1" fill="#140404" />
<rect x="765.5" y="294.2" width="7.7" height="4.1" fill="#140404" />
<rect x="34.0" y="330.0" width="3253.0" height="1765.0" fill="#ababab" />
<rect x="1953.0" y="323.0" width="18.0" height="1772.0" fill="#a8a8a8" />
<rect x="34.0" y="330.0" width="1926.0" height="1765.0" fill="#646464" />
<rect x="34.0" y="330.0" width="1923.0" height="1765.0" fill="#a0a0a0" />
<rect x="1957.0" y="323.0" width="3.0" height="1772.0" fill="#646464" />
<rect x="1953.0" y="323.0" width="4.0" height="1772.0" fill="#a0a0a0" />
<rect x="34.0" y="330.0" width="1919.0" height="1765.0" fill="#f0f0f0" />
<rect x="34.0" y="330.0" width="7.0" height="1765.0" fill="#ffffff" />
<rect x="34.0" y="330.0" width="1919.0" height="3.0" fill="#ffffff" />
<rect x="1935.0" y="333.0" width="7.0" height="1762.0" fill="#fcfcfc" />
<rect x="58.0" y="352.0" width="54.0" height="52.0" fill="#fafafa" />
<text x="132.0" y="393.0" font-size="44.14" fill="#6d6d6d" textLength="468.9" lengthAdjust="spacingAndGlyphs" >Comet(1/1): Untitled-4.tif</text>
<rect x="1744.0" y="354.0" width="56.0" height="49.0" fill="#a8a8a8" />
<rect x="1744.0" y="354.0" width="51.0" height="44.0" fill="#ffffff" />
<rect x="1749.0" y="359.0" width="46.0" height="39.0" fill="#f0f0f0" />
<rect x="1812.0" y="354.0" width="56.0" height="49.0" fill="#a8a8a8" />
<rect x="1812.0" y="354.0" width="51.0" height="44.0" fill="#ffffff" />
<rect x="1817.0" y="359.0" width="46.0" height="39.0" fill="#f0f0f0" />
<rect x="1880.0" y="354.0" width="54.0" height="49.0" fill="#a8a8a8" />
<rect x="1880.0" y="354.0" width="49.0" height="44.0" fill="#ffffff" />
<rect x="1885.0" y="359.0" width="44.0" height="39.0" fill="#f0f0f0" />
<rect x="1758.0" y="386.0" width="28.5" height="7.5" fill="#000000" />
<rect x="1825.5" y="365.0" width="31.5" height="31.5" fill="#000000" />
<rect x="1830.0" y="372.0" width="23.0" height="20.0" fill="#f0f0f0" />
<line x1="1896.0" y1="368.0" x2="1922.0" y2="394.0" stroke="#000000" stroke-width="8" />
<line x1="1922.0" y1="368.0" x2="1896.0" y2="394.0" stroke="#000000" stroke-width="8" />
<rect x="52.0" y="415.0" width="1830.0" height="1680.0" fill="#a0a0a0" />
<rect x="55.0" y="418.0" width="1827.0" height="1677.0" fill="#646464" />
<rect x="1882.0" y="415.0" width="57.0" height="3.0" fill="#a0a0a0" />
<rect x="1882.0" y="418.0" width="53.0" height="4.0" fill="#646464" />
<svg x="59" y="422" width="1823" height="1673" viewBox="59 422 1823 1673" overflow="hidden">
<defs><filter id="noise" x="0" y="0" width="100%" height="100%"><feTurbulence type="fractalNoise" baseFrequency="0.3" numOctaves="1" seed="7"/><feColorMatrix type="matrix" values="0 0 0 0 0.86  0 0 0 0 0.6  0 0 0 0 0.9  0 0 0 -2.5 1.45"/></filter><filter id="soft" x="-10%" y="-10%" width="120%" height="120%"><feGaussianBlur stdDeviation="1.6"/></filter><radialGradient id="halo"><stop offset="0" stop-color="#b040e0" stop-opacity="0.75"/><stop offset="0.5" stop-color="#d070ec" stop-opacity="0.4"/><stop offset="1" stop-color="#e8a0f0" stop-opacity="0"/></radialGradient><radialGradient id="core"><stop offset="0" stop-color="#8a10e8" stop-opacity="1"/><stop offset="0.6" stop-color="#a020e0" stop-opacity="0.9"/><stop offset="1" stop-color="#c040e0" stop-opacity="0"/></radialGradient><radialGradient id="deep"><stop offset="0" stop-color="#1a00e8" stop-opacity="1"/><stop offset="0.6" stop-color="#3008e0" stop-opacity="0.8"/><stop offset="1" stop-color="#5010e0" stop-opacity="0"/></radialGradient><radialGradient id="head" cx="0.58" cy="0.5" r="0.57" fx="0.42" fy="0.49"><stop offset="0" stop-color="#e000e8"/><stop offset="0.2" stop-color="#c010f0"/><stop offset="0.38" stop-color="#9020f0"/><stop offset="0.55" stop-color="#6040f0"/><stop offset="0.7" stop-color="#4a62f2"/><stop offset="0.8" stop-color="#3c80f4"/><stop offset="0.9" stop-color="#24b8f8"/><stop offset="1" stop-color="#20d2fa"/></radialGradient><radialGradient id="tailshade" cx="0.3" cy="0.5" r="0.6"><stop offset="0" stop-color="#3a5a10" stop-opacity="0.85"/><stop offset="0.5" stop-color="#1a7a10" stop-opacity="0.5"/><stop offset="1" stop-color="#10a010" stop-opacity="0"/></radialGradient></defs>
<rect x="59.0" y="422.0" width="1823.0" height="1673.0" fill="#f5e8f7" />
<rect x="59" y="422" width="1823" height="1673" filter="url(#noise)" opacity="0.3"/>
<defs><filter id="noise2" x="0" y="0" width="100%" height="100%" color-interpolation-filters="sRGB"><feTurbulence type="fractalNoise" baseFrequency="0.12" numOctaves="1" seed="23"/><feColorMatrix type="matrix" values="0 0 0 0 0.96  0 0 0 0 0.96  0 0 0 0 1  0 0 0 -3 1.7"/></filter></defs>
<rect x="59" y="422" width="1823" height="1673" filter="url(#noise2)" opacity="0.45"/>
<g filter="url(#soft)">
<g transform="translate(1040.00,1300.00) scale(3.5)" fill="none" stroke-width="1" shape-rendering="crispEdges">
<path stroke="#f0d0f6" d="M68 18.5h5M72 19.5h1m14 0h1M97 20.5h1M77 21.5h3m21 0h2m2 0h1M69 22.5h1m6 0h3m2 0h2m7 0h2m13 0h1M68 23.5h2m3 0h2m3 0h1m9 0h1m1 0h2m13 0h2M59 24.5h1m9 0h2m3 0h5m2 0h1m5 0h4m3 0h4m7 0h3m3 0h1M58 25.5h2m10 0h2m2 0h1m1 0h7m1 0h3m2 0h1m3 0h2m1 0h2m1 0h2m2 0h3m1 0h1m1 0h3M63 26.5h1m5 0h1m1 0h1m2 0h1m1 0h1m2 0h1m1 0h2m2 0h2m3 0h2m1 0h4m1 0h7m2 0h1m1 0h3m18 0h1M63 27.5h3m2 0h3m1 0h1m1 0h1m6 0h4m1 0h1m4 0h3m4 0h3m2 0h4m1 0h2M62 28.5h1m1 0h1m4 0h1m7 0h1m2 0h6m4 0h3m1 0h1m3 0h1m1 0h1m1 0h4m1 0h1M58 29.5h1m3 0h1m1 0h1m2 0h2m5 0h3m2 0h1m1 0h5m5 0h1m1 0h2m1 0h3m1 0h1m2 0h4m6 0h2m4 0h3M52 30.5h1m3 0h3m5 0h2m1 0h4m4 0h3m3 0h2m1 0h2m4 0h4m8 0h2m1 0h2m5 0h3m4 0h1m1 0h1m13 0h1M53 31.5h1m2 0h2m1 0h1m1 0h1m3 0h1m3 0h1m2 0h3m5 0h1m21 0h1m1 0h1m7 0h3m3 0h1m1 0h2m5 0h1M46 32.5h1m4 0h3m2 0h3m1 0h1m4 0h2m4 0h3m7 0h1m6 0h1m1 0h1m9 0h2m3 0h1m1 0h2m5 0h1m2 0h2m2 0h1m6 0h2M50 33.5h5m1 0h4m6 0h1m2 0h4m12 0h1m2 0h3m15 0h3m1 0h1m3 0h1m2 0h1m9 0h2m7 0h3M48 34.5h2m1 0h2m4 0h2m10 0h2m37 0h1m4 0h2m7 0h4m1 0h2m7 0h3M44 35.5h1m3 0h1m2 0h4m39 0h1m1 0h1m10 0h1m4 0h2m1 0h3m3 0h1m6 0h6m3 0h1m1 0h3M44 36.5h1m3 0h2m2 0h1m2 0h1m35 0h1m17 0h3m8 0h1m1 0h2m5 0h4m4 0h2m1 0h2M51 37.5h2m2 0h1m2 0h1m49 0h1m2 0h2m2 0h1m2 0h1m1 0h4m5 0h5M41 38.5h2m10 0h2m47 0h1m8 0h3m1 0h1m1 0h4m1 0h1m2 0h1m2 0h1m4 0h3M37 39.5h2m5 0h1m1 0h1m5 0h1m11 0h1m31 0h1m1 0h1m13 0h1m1 0h2m1 0h2m2 0h4m1 0h3m2 0h5m6 0h1m1 0h1m1 0h1M37 40.5h2m4 0h1m4 0h1m1 0h2m46 0h1m13 0h3m2 0h1m3 0h5m2 0h4m1 0h2m3 0h1m2 0h7M38 41.5h2m4 0h1m3 0h1m1 0h1m61 0h1m9 0h1m6 0h3m3 0h1m2 0h7m1 0h1M37 42.5h1m6 0h1m1 0h3m63 0h1m1 0h1m7 0h1m1 0h1m5 0h1m1 0h1m3 0h2m8 0h1m2 0h2M42 43.5h4m2 0h1m65 0h1m6 0h1m2 0h3m1 0h2m1 0h3m1 0h2m13 0h1M37 44.5h1m4 0h2m1 0h1m2 0h1m6 0h1m7 0h1m49 0h1m8 0h1m1 0h1m2 0h1m1 0h1m2 0h2m11 0h1m4 0h1M36 45.5h4m3 0h3m1 0h1m5 0h2m36 0h1m32 0h2m3 0h3m1 0h2m2 0h2m5 0h2M36 46.5h4m1 0h1m4 0h1m74 0h1m1 0h2m1 0h1m5 0h1m1 0h1m1 0h1m5 0h4M32 47.5h1m3 0h2m4 0h1m78 0h3m2 0h1m5 0h1m1 0h3m5 0h4m1 0h2M32 48.5h3m1 0h2m1 0h1m2 0h1m1 0h1m1 0h1m1 0h1m1 0h1m76 0h2m8 0h1m1 0h2m4 0h6M33 49.5h7m1 0h1m1 0h3m1 0h1m1 0h2m80 0h3m2 0h2m8 0h6m2 0h1M33 50.5h4m1 0h1m2 0h1m2 0h1m79 0h1m2 0h3m1 0h1m4 0h2m3 0h1m4 0h5m4 0h1M34 51.5h1m1 0h1m3 0h1m3 0h1m1 0h2m75 0h2m2 0h1m5 0h4m3 0h2m4 0h2M34 52.5h1m1 0h1m4 0h1m1 0h2m77 0h2m3 0h2m4 0h2m4 0h3m7 0h1M35 53.5h1m2 0h4m1 0h2m78 0h1m3 0h2m5 0h1m4 0h2m6 0h3M31 54.5h2m2 0h2m1 0h4m1 0h1m1 0h1m76 0h1m5 0h1m6 0h2m1 0h7m2 0h1m4 0h1M29 55.5h1m1 0h2m3 0h1m4 0h1m2 0h1m89 0h1m2 0h2m1 0h3m2 0h4m2 0h2M32 56.5h1m2 0h3m3 0h1m2 0h1m76 0h1m8 0h1m2 0h2m5 0h9m5 0h1M32 57.5h3m2 0h2m5 0h1m75 0h1m8 0h1m1 0h1m1 0h1m1 0h2m1 0h2m1 0h2m1 0h5m3 0h3M32 58.5h3m2 0h2m3 0h1m78 0h1m7 0h2m4 0h1m1 0h1m1 0h1m3 0h12m7 0h2M30 59.5h5m3 0h2m3 0h1m91 0h1m6 0h1m2 0h4m1 0h6m6 0h2M30 60.5h1m4 0h1m85 0h1m5 0h1m11 0h1m3 0h1m2 0h1m2 0h5M36 61.5h1m84 0h2m4 0h1m4 0h2m7 0h1m1 0h4m1 0h4m1 0h3M28 62.5h1m3 0h1m3 0h1m4 0h1m1 0h1m97 0h1m1 0h1m1 0h1m1 0h2m1 0h4m5 0h1m3 0h1M31 63.5h2m3 0h1m5 0h1m95 0h5m5 0h2m1 0h3m6 0h1m3 0h2M32 64.5h3m103 0h1m1 0h1m2 0h1m4 0h5m11 0h2M30 65.5h1m2 0h3m99 0h1m2 0h3m1 0h5m1 0h1m1 0h1M30 66.5h1m11 0h1m88 0h4m5 0h3m1 0h2m1 0h2m2 0h1m10 0h1M26 67.5h2m7 0h1m6 0h1m86 0h1m10 0h3m5 0h1m2 0h1m4 0h2M26 68.5h2m4 0h5m91 0h1m11 0h1m4 0h1m1 0h5M26 69.5h3m4 0h2m1 0h1m4 0h2m86 0h2m4 0h1m10 0h2m1 0h1m1 0h1m1 0h1m3 0h1m1 0h1M26 70.5h3m3 0h1m104 0h1m8 0h3m2 0h3m1 0h2m1 0h2m5 0h1M29 71.5h1m1 0h2m2 0h1m101 0h2m4 0h5m2 0h1m1 0h6m6 0h2M30 72.5h2m1 0h3m102 0h1m6 0h2m2 0h1m2 0h1m2 0h3m2 0h2M34 73.5h1m4 0h2m92 0h1m3 0h2m6 0h1m2 0h4m1 0h5m1 0h2M29 74.5h1m4 0h1m6 0h1m2 0h1m99 0h2m2 0h1m1 0h2m1 0h1m3 0h3m2 0h2M28 75.5h3m3 0h1m8 0h1m1 0h1m98 0h3m1 0h1m1 0h4m9 0h1M27 76.5h4m3 0h1m1 0h2m7 0h1m101 0h2m1 0h2m10 0h2m1 0h2M28 77.5h3m2 0h5m94 0h1m4 0h1m4 0h2m3 0h1m1 0h4m9 0h5M27 78.5h3m4 0h5m94 0h1m3 0h1m2 0h2m3 0h1m2 0h1m1 0h4m6 0h1m2 0h2m3 0h1M28 79.5h5m2 0h1m100 0h3m2 0h4m6 0h1m1 0h1m2 0h3m2 0h4M28 80.5h2m2 0h1m3 0h1m4 0h2m93 0h2m4 0h1m3 0h1m1 0h1m2 0h1m1 0h1m1 0h4m2 0h1M32 81.5h1m4 0h2m3 0h1m88 0h1m3 0h3m3 0h1m2 0h3m3 0h1m1 0h6m3 0h1M29 82.5h4m2 0h1m1 0h2m3 0h2m84 0h1m1 0h3m1 0h2m4 0h1m2 0h5m2 0h6m5 0h2M29 83.5h3m1 0h3m2 0h2m1 0h4m83 0h1m1 0h1m1 0h1m2 0h1m4 0h1m4 0h3m3 0h5M29 84.5h3m1 0h1m1 0h1m3 0h1m1 0h1m1 0h3m83 0h1m2 0h2m6 0h1m2 0h2m2 0h1m3 0h2m1 0h1m2 0h1M29 85.5h1m1 0h3m4 0h3m3 0h1m88 0h1m7 0h1m1 0h1m3 0h6m1 0h1m1 0h4m2 0h1M32 86.5h1m7 0h1m4 0h1m95 0h4m1 0h3m1 0h1m2 0h2m1 0h1m2 0h1M32 87.5h2m1 0h1m5 0h2m2 0h1m91 0h2m3 0h3m1 0h3m18 0h2M34 88.5h3m1 0h4m90 0h1m3 0h1m1 0h2m3 0h12m8 0h1M31 89.5h1m2 0h3m2 0h3m83 0h1m6 0h1m4 0h1m1 0h7m4 0h2m1 0h2M30 90.5h2m2 0h1m1 0h1m3 0h1m4 0h1m78 0h1m7 0h1m4 0h2m2 0h7m2 0h6M28 91.5h2m1 0h1m3 0h3m2 0h2m3 0h2m5 0h1m79 0h2m3 0h1m7 0h2m1 0h2m1 0h1m2 0h2m8 0h1M27 92.5h2m6 0h2m3 0h3m2 0h3m84 0h2m2 0h1m1 0h2m3 0h1m1 0h2m1 0h2m4 0h2m9 0h1M29 93.5h1m5 0h2m3 0h2m4 0h2m75 0h1m1 0h2m6 0h3m4 0h3m1 0h4m3 0h2m1 0h1m4 0h1m2 0h3M35 94.5h1m5 0h1m7 0h1m1 0h1m72 0h1m7 0h4m5 0h2m2 0h3m2 0h3m1 0h3m1 0h3m2 0h2M34 95.5h2m3 0h1m3 0h1m6 0h1m67 0h1m3 0h1m9 0h2m1 0h4m10 0h3m5 0h4m2 0h1M37 96.5h1m1 0h5m3 0h1m12 0h1m56 0h1m4 0h1m1 0h1m3 0h2m2 0h3m3 0h1m5 0h1m1 0h5M31 97.5h2m3 0h6m1 0h2m1 0h1m2 0h1m68 0h1m4 0h1m4 0h3m1 0h1m6 0h1m5 0h3m1 0h2m1 0h1M35 98.5h4m1 0h1m2 0h5m5 0h2m56 0h1m9 0h3m6 0h1m6 0h4m3 0h3m2 0h4M37 99.5h3m2 0h4m3 0h2m2 0h4m3 0h2m31 0h1m15 0h3m10 0h1m15 0h2m1 0h1m5 0h5m1 0h1m2 0h1M38 100.5h2m2 0h4m2 0h3m6 0h2m4 0h2m39 0h1m13 0h1m1 0h1m1 0h2m1 0h1m6 0h1m2 0h3m2 0h2m1 0h6m4 0h4M36 101.5h1m5 0h3m2 0h4m5 0h3m2 0h1m1 0h3m39 0h1m3 0h1m11 0h5m2 0h1m3 0h1m4 0h4m4 0h6m1 0h5M33 102.5h1m8 0h1m1 0h2m2 0h2m2 0h3m1 0h1m32 0h1m33 0h2m3 0h1m3 0h6m10 0h1m4 0h1M45 103.5h2m1 0h2m2 0h4m3 0h2m28 0h1m6 0h1m31 0h4m3 0h4m2 0h2m9 0h3M41 104.5h1m3 0h5m2 0h1m5 0h3m6 0h3m39 0h1m1 0h3m6 0h2m5 0h3m1 0h3m2 0h7m4 0h1m4 0h2M41 105.5h2m3 0h1m1 0h1m4 0h1m1 0h1m3 0h2m7 0h1m21 0h2m1 0h1m19 0h1m6 0h1m7 0h6m2 0h7m4 0h1m5 0h1M47 106.5h2m4 0h2m10 0h1m1 0h1m25 0h1m8 0h1m6 0h1m3 0h1m7 0h1m8 0h1m4 0h3m3 0h3M48 107.5h1m1 0h2m1 0h2m3 0h1m6 0h1m20 0h1m14 0h1m2 0h1m4 0h1m11 0h1m6 0h1m1 0h3m3 0h1m5 0h1M42 108.5h2m4 0h4m4 0h1m4 0h2m1 0h1m17 0h3m2 0h1m12 0h1m2 0h2m10 0h4m2 0h1m3 0h1m1 0h3m1 0h1m1 0h2m1 0h2m10 0h1M38 109.5h1m2 0h3m5 0h3m2 0h2m1 0h3m1 0h1m13 0h2m1 0h1m14 0h1m1 0h2m3 0h1m3 0h1m2 0h2m8 0h1m2 0h3m2 0h1m2 0h2m5 0h3m3 0h2m3 0h3M42 110.5h2m5 0h2m3 0h1m1 0h1m2 0h1m1 0h3m12 0h1m6 0h1m2 0h2m4 0h1m1 0h1m4 0h2m3 0h1m1 0h1m6 0h1m5 0h1m2 0h2m2 0h3m1 0h6m1 0h2m2 0h2m11 0h1M51 111.5h1m2 0h2m3 0h1m1 0h1m1 0h3m2 0h1m2 0h1m19 0h1m1 0h2m3 0h2m4 0h1m9 0h2m4 0h1m1 0h1m3 0h1m1 0h3m1 0h2m2 0h2m2 0h2M50 112.5h3m6 0h1m2 0h3m1 0h1m1 0h2m1 0h4m5 0h2m3 0h3m3 0h2m6 0h1m2 0h2m1 0h2m5 0h1m2 0h2m4 0h1m1 0h2m1 0h4m5 0h1m8 0h2m3 0h1M49 113.5h3m2 0h1m3 0h1m1 0h4m3 0h2m2 0h2m1 0h3m3 0h3m1 0h2m1 0h1m3 0h1m4 0h1m2 0h1m1 0h1m1 0h1m1 0h1m1 0h1m4 0h1m3 0h2m2 0h1m2 0h2m1 0h3m3 0h4m9 0h2m2 0h1M43 114.5h1m5 0h4m1 0h2m1 0h2m2 0h4m1 0h1m1 0h2m1 0h3m6 0h2m2 0h5m5 0h4m1 0h1m1 0h3m1 0h1m8 0h2m4 0h1m1 0h1m1 0h5m3 0h5M42 115.5h3m1 0h1m2 0h1m1 0h5m1 0h3m1 0h1m2 0h2m2 0h2m4 0h2m2 0h2m1 0h2m2 0h2m7 0h1m3 0h4m1 0h3m4 0h2m1 0h2m2 0h5m9 0h3m6 0h2m2 0h1M43 116.5h1m8 0h1m1 0h3m2 0h2m1 0h2m1 0h2m2 0h3m2 0h3m5 0h2m2 0h1m2 0h1m1 0h1m4 0h3m4 0h3m7 0h4m6 0h2m5 0h1M52 117.5h3m1 0h2m2 0h3m1 0h1m5 0h9m2 0h10m4 0h2m1 0h5m1 0h1m2 0h2m4 0h1m6 0h4m5 0h2m6 0h1m7 0h1M59 118.5h6m4 0h4m1 0h2m2 0h1m4 0h2m1 0h3m1 0h1m1 0h1m4 0h1m4 0h1m2 0h2m1 0h1m1 0h3m1 0h1m2 0h1m4 0h3m5 0h4m3 0h1M58 119.5h4m2 0h1m6 0h7m2 0h6m1 0h4m2 0h3m3 0h1m2 0h1m2 0h1m1 0h1m2 0h2m3 0h3m2 0h1m10 0h1m1 0h1M60 120.5h4m3 0h11m1 0h1m3 0h3m1 0h2m1 0h2m1 0h4m4 0h6m3 0h1m3 0h2m2 0h1m1 0h1m3 0h1m2 0h1m4 0h2m3 0h1M60 121.5h5m2 0h1m1 0h2m1 0h1m4 0h3m6 0h3m6 0h1m5 0h5m1 0h4m4 0h3m5 0h3m1 0h1M58 122.5h1m1 0h2m1 0h3m2 0h3m9 0h10m7 0h3m2 0h4m3 0h1m5 0h4m5 0h3M69 123.5h2m13 0h3m5 0h5m1 0h2m9 0h2m2 0h1m2 0h3m1 0h1m3 0h2m9 0h1M70 124.5h1m14 0h3m4 0h1m1 0h4m1 0h2m1 0h1m2 0h2m2 0h5m3 0h1m6 0h1M67 125.5h2m3 0h2m8 0h1m2 0h3m2 0h2m1 0h1m1 0h5m1 0h2m3 0h1m4 0h1m1 0h1m10 0h1m6 0h1m2 0h1M71 126.5h4m7 0h1m2 0h1m7 0h5m1 0h1m5 0h2m4 0h1m1 0h4m6 0h1m5 0h1M70 127.5h4m3 0h2m1 0h3m1 0h2m7 0h5m13 0h1m2 0h3m5 0h1M69 128.5h5m3 0h2m8 0h3m21 0h4m13 0h1M69 129.5h2m4 0h2m4 0h1m1 0h1m3 0h2m1 0h1m4 0h3m3 0h1m1 0h1m1 0h2m4 0h3m1 0h1m12 0h1M69 130.5h1m5 0h2m7 0h1m2 0h1m8 0h1m6 0h1m2 0h1M69 131.5h2m30 0h4m1 0h2M101 132.5h1m2 0h1m1 0h3M90 133.5h2m9 0h1M92 135.5h1"/>
<path stroke="#ecb2f4" d="M75 23.5h3M72 24.5h2M72 25.5h2m9 0h1m3 0h2m6 0h1M72 26.5h2m3 0h1m2 0h1m6 0h3M73 27.5h1m3 0h1m1 0h2m6 0h4m3 0h4m3 0h2M63 28.5h1m6 0h5m3 0h2m6 0h4m5 0h3m3 0h1m4 0h1M63 29.5h1m5 0h3m6 0h1m7 0h1m1 0h3m4 0h1m5 0h2M62 30.5h1m8 0h3m6 0h1m2 0h1m4 0h2m4 0h6m20 0h1M58 31.5h1m5 0h1m1 0h1m1 0h1m2 0h1m3 0h3m1 0h1m2 0h1m2 0h1m1 0h5m2 0h2m1 0h1m1 0h3m1 0h1M59 32.5h1m1 0h1m6 0h1m5 0h2m2 0h1m1 0h1m4 0h3m6 0h1m3 0h2m2 0h1m8 0h3M55 33.5h1m4 0h1m4 0h1m1 0h2m15 0h1m1 0h2m10 0h1m1 0h2m7 0h1m1 0h1m1 0h1M54 34.5h3m2 0h3m2 0h1m3 0h1m2 0h2m5 0h1m9 0h2m5 0h2m10 0h1m1 0h4M55 35.5h1m1 0h3m1 0h2m6 0h4m13 0h1m4 0h1m3 0h1m1 0h1m10 0h4M51 36.5h1m5 0h3m2 0h1m29 0h1m14 0h2m12 0h1M56 37.5h2m1 0h1m1 0h2m9 0h2m4 0h1m11 0h1m15 0h2M52 38.5h1m2 0h4m5 0h1m7 0h2m22 0h4m1 0h1m4 0h2m8 0h1m6 0h2M45 39.5h1m7 0h2m8 0h1m35 0h1m9 0h3m1 0h1m2 0h1m2 0h2M44 40.5h4m4 0h2m12 0h1m44 0h1m3 0h2m3 0h1m5 0h2M45 41.5h1m1 0h1m3 0h1m43 0h2m10 0h1m6 0h1m6 0h1m1 0h6M45 42.5h1m3 0h2m6 0h1m48 0h1m14 0h1m1 0h1m1 0h5M49 43.5h1m3 0h3m1 0h2m47 0h1m5 0h1m7 0h1m1 0h2m3 0h1M52 44.5h1m3 0h3m53 0h1m1 0h1m1 0h2m3 0h1m1 0h1m4 0h1m6 0h2M42 45.5h1m5 0h1m14 0h1m26 0h1m26 0h1m3 0h1m5 0h2m3 0h1m2 0h2M42 46.5h4m1 0h1m4 0h2m49 0h1m15 0h1m5 0h1m1 0h5m3 0h1M38 47.5h2m3 0h5m72 0h1m3 0h2m1 0h1m3 0h1M38 48.5h1m4 0h1m1 0h1m3 0h1m1 0h1m10 0h1m58 0h4m1 0h1m2 0h3m2 0h3M40 49.5h1m1 0h1m5 0h1m2 0h1m64 0h2m5 0h2m2 0h1m6 0h2M37 50.5h1m1 0h2m1 0h2m4 0h4m64 0h2m5 0h1m1 0h2m5 0h4M37 51.5h1m1 0h1m1 0h3m72 0h1m2 0h1m2 0h1m2 0h2m1 0h1m1 0h3M37 52.5h1m1 0h2m1 0h1m2 0h2m69 0h2m2 0h1m11 0h1M36 53.5h2m4 0h1m2 0h2m86 0h1M37 54.5h1m4 0h1m78 0h1m1 0h2m1 0h1m2 0h1m3 0h1M37 55.5h4m1 0h2m1 0h1m81 0h1m2 0h2m1 0h1m1 0h2m6 0h2M38 56.5h3m1 0h2m1 0h1m74 0h1m10 0h2m2 0h2M35 57.5h2m2 0h1m1 0h2m2 0h2m72 0h1m2 0h1m5 0h1m1 0h1m1 0h1m1 0h1m8 0h1M35 58.5h2m2 0h3m2 0h4m71 0h1m4 0h1m6 0h1m2 0h1m3 0h1M35 59.5h1m1 0h1m2 0h1m1 0h1m76 0h3m2 0h1m1 0h2m2 0h2m2 0h1m1 0h1m6 0h2m4 0h1M36 60.5h1m1 0h2m79 0h1m5 0h2m1 0h1m1 0h1m3 0h3m7 0h2M37 61.5h6m2 0h1m74 0h1m4 0h2m1 0h1m1 0h2m2 0h3m2 0h2m11 0h1M37 62.5h3m4 0h2m76 0h1m3 0h2m4 0h1m4 0h4m3 0h1m1 0h1M37 63.5h3m1 0h1m1 0h1m77 0h1m1 0h3m3 0h2m6 0h1m5 0h5M35 64.5h2m1 0h1m1 0h2m79 0h2m6 0h2m3 0h1m6 0h2m1 0h4M36 65.5h3m2 0h1m4 0h2m80 0h1m1 0h1m1 0h2m2 0h1m4 0h1m5 0h1M36 66.5h2m3 0h1m1 0h1m3 0h1m80 0h3m4 0h5m3 0h1M36 67.5h2m5 0h1m82 0h2m3 0h1m1 0h4m2 0h1m4 0h1M37 68.5h1m3 0h1m1 0h1m83 0h1m2 0h2m1 0h4m4 0h4M31 69.5h2m4 0h1m5 0h2m83 0h1m3 0h2m2 0h5m2 0h1m1 0h1m2 0h1M31 70.5h1m4 0h1m6 0h1m80 0h1m7 0h2m1 0h2m1 0h3m2 0h3M36 71.5h1m6 0h1m80 0h1m7 0h5m2 0h2m1 0h1m8 0h1M36 72.5h1m3 0h1m3 0h1m78 0h1m1 0h1m5 0h4m1 0h2m1 0h2m2 0h2m5 0h2m1 0h2M35 73.5h1m2 0h1m2 0h1m2 0h1m79 0h2m6 0h1m1 0h3m4 0h4M35 74.5h2m2 0h1m2 0h2m1 0h1m87 0h5m4 0h2m5 0h1M35 75.5h3m1 0h2m1 0h1m1 0h1m1 0h1m74 0h1m14 0h2m2 0h1m2 0h1m5 0h1M35 76.5h1m3 0h5m87 0h2m3 0h2m2 0h5m1 0h1m2 0h1m2 0h1M38 77.5h5m88 0h1m1 0h1m4 0h1m1 0h1m3 0h3M39 78.5h1m1 0h1m79 0h1m6 0h1m2 0h2m1 0h1m1 0h1m1 0h2m2 0h3m1 0h2m1 0h1M36 79.5h3m2 0h3m78 0h1m5 0h2m3 0h1m1 0h1m3 0h2m4 0h6M37 80.5h2m4 0h1m88 0h2m1 0h1m2 0h2m1 0h1m5 0h1m1 0h2M39 81.5h1m1 0h1m1 0h1m81 0h1m3 0h1m3 0h2m3 0h1m1 0h1m1 0h2m3 0h3M39 82.5h1m1 0h1m2 0h1m88 0h1m2 0h1m2 0h1m2 0h1m5 0h2M32 83.5h1m12 0h1m63 0h1m19 0h1m1 0h1m1 0h2m4 0h1m8 0h3M32 84.5h1m9 0h1m8 0h1m76 0h1m1 0h2m2 0h1m1 0h1m8 0h1m2 0h3m2 0h1M41 85.5h1m1 0h1m1 0h1m82 0h1m2 0h1m2 0h1m1 0h2m2 0h1m3 0h2m7 0h1M41 86.5h4m1 0h1m77 0h2m2 0h1m3 0h4m1 0h1m2 0h1m4 0h1M43 87.5h2m1 0h2m11 0h1m64 0h1m1 0h1m5 0h2m1 0h2m2 0h3M42 88.5h2m1 0h1m1 0h1m75 0h5m5 0h1m1 0h1m4 0h3M45 89.5h3m74 0h3m1 0h1m4 0h1m3 0h2m1 0h1m7 0h4m2 0h1M41 90.5h2m1 0h1m1 0h2m77 0h2m3 0h2m1 0h4m11 0h2M42 91.5h3m2 0h1m1 0h1m1 0h1m1 0h1m71 0h3m2 0h2m2 0h1m1 0h1m1 0h1m5 0h1M49 92.5h2m72 0h1m1 0h2m7 0h2m8 0h1M43 93.5h1m1 0h1m6 0h1m71 0h1m7 0h1m6 0h1m3 0h1M44 94.5h5m3 0h1m70 0h1m1 0h1m13 0h2m2 0h1m4 0h2M44 95.5h2m1 0h3m1 0h1m8 0h1m39 0h1m15 0h1m7 0h1m6 0h1m2 0h1m4 0h1m3 0h1m2 0h3M44 96.5h3m1 0h1m1 0h2m7 0h1m12 0h1m41 0h3m4 0h1m3 0h1m1 0h1m2 0h2m3 0h3m1 0h1m3 0h1M45 97.5h1m4 0h2m1 0h2m17 0h1m34 0h2m5 0h1m4 0h2m3 0h2m7 0h2m3 0h1m1 0h1m3 0h1M39 98.5h1m9 0h2m4 0h1m1 0h4m47 0h3m5 0h2m1 0h2m4 0h1m2 0h2m1 0h2m1 0h3m4 0h1M46 99.5h3m2 0h2m4 0h3m2 0h1m6 0h2m23 0h1m9 0h2m2 0h1m3 0h1m4 0h1m1 0h3m3 0h2m1 0h5m1 0h4m2 0h1m1 0h5M46 100.5h2m3 0h2m6 0h2m4 0h2m26 0h2m8 0h1m1 0h2m1 0h1m2 0h2m4 0h1m1 0h1m6 0h4m1 0h1m2 0h1m3 0h2M52 101.5h1m6 0h1m6 0h1m36 0h2m3 0h1m1 0h2m5 0h2m7 0h2m1 0h1m1 0h1m1 0h4M57 102.5h7m1 0h1m7 0h2m1 0h1m9 0h1m1 0h1m2 0h1m4 0h3m3 0h1m1 0h2m1 0h2m3 0h1m3 0h2m3 0h2m2 0h3m1 0h1m1 0h1M56 103.5h3m2 0h1m1 0h2m3 0h2m6 0h2m6 0h2m2 0h1m2 0h1m2 0h1m2 0h3m7 0h1m2 0h4m2 0h1m1 0h1m1 0h5m2 0h1m4 0h3M55 104.5h3m3 0h1m8 0h1m6 0h2m5 0h2m3 0h3m2 0h2m2 0h2m7 0h2m5 0h1m4 0h1m4 0h3m7 0h2M47 105.5h1m8 0h3m2 0h1m3 0h2m10 0h1m3 0h1m2 0h2m3 0h1m2 0h1m15 0h5m1 0h1m4 0h1m1 0h1m2 0h4M55 106.5h4m1 0h1m3 0h1m1 0h1m10 0h1m6 0h1m4 0h2m5 0h1m3 0h2m1 0h3m2 0h1m1 0h1m1 0h1m1 0h1m1 0h5m1 0h1m2 0h5m3 0h2M55 107.5h3m1 0h1m1 0h1m1 0h2m1 0h3m10 0h2m2 0h3m1 0h2m1 0h1m2 0h1m2 0h1m3 0h1m4 0h1m2 0h1m1 0h1m3 0h7m1 0h1m1 0h4m1 0h1m3 0h3M57 108.5h4m7 0h1m3 0h3m2 0h4m7 0h1m1 0h1m4 0h2m2 0h1m1 0h2m2 0h1m1 0h3m4 0h1m4 0h2m1 0h1m1 0h1m1 0h1m5 0h1m2 0h1M60 109.5h1m3 0h1m7 0h3m2 0h1m1 0h1m2 0h1m5 0h1m2 0h1m2 0h1m2 0h3m1 0h3m1 0h2m2 0h1m2 0h4m7 0h2m1 0h2m4 0h2M55 110.5h1m4 0h1m3 0h4m4 0h1m1 0h2m1 0h3m11 0h1m3 0h2m1 0h1m2 0h3m3 0h1m1 0h2m1 0h1m1 0h2m1 0h1m6 0h2m10 0h1M60 111.5h1m8 0h2m1 0h1m1 0h1m5 0h1m2 0h1m2 0h2m8 0h2m5 0h1m2 0h1m3 0h1m1 0h1m3 0h4m3 0h3m1 0h1m6 0h2M60 112.5h2m3 0h1m9 0h2m5 0h1m5 0h1m4 0h2m1 0h3m8 0h1m2 0h1m6 0h4m1 0h1m2 0h1m8 0h1M59 113.5h1m4 0h1m1 0h1m10 0h2m9 0h1m1 0h1m1 0h1m1 0h2m1 0h2m3 0h1m3 0h1m1 0h4m9 0h2m2 0h1M59 114.5h2m4 0h1m1 0h1m6 0h6m2 0h2m6 0h4m4 0h1m9 0h1m2 0h1m4 0h4m1 0h1M60 115.5h1m15 0h2m5 0h2m4 0h5m1 0h1m10 0h1m2 0h1m5 0h2M61 116.5h1m2 0h1m12 0h5m2 0h2m4 0h1m4 0h1m3 0h1m6 0h7M91 117.5h1m13 0h2m2 0h4m11 0h1M73 118.5h1m17 0h1m17 0h1M62 119.5h2m22 0h1m4 0h2m15 0h2m22 0h1M80 120.5h3m3 0h1m2 0h1m17 0h3M68 121.5h1m11 0h3M97 123.5h1M98 124.5h1M94 125.5h1m17 0h1M112 126.5h1M112 127.5h2"/>
<path stroke="#e690f2" d="M78 26.5h1M78 27.5h1M72 29.5h2m13 0h1M63 30.5h1m14 0h2m6 0h1m13 0h2M62 31.5h2m3 0h1m10 0h1m4 0h2m1 0h1m5 0h2m2 0h1m1 0h1M64 32.5h1m2 0h1m8 0h2m1 0h1m4 0h1m6 0h1m1 0h1m1 0h3m5 0h2M61 33.5h4m8 0h3m2 0h1m12 0h2m1 0h4m1 0h1m4 0h2m6 0h1M62 34.5h2m1 0h3m6 0h2m1 0h1m1 0h1m5 0h3m2 0h3m1 0h1m2 0h2m7 0h1M56 35.5h1m3 0h1m2 0h4m6 0h2m3 0h2m2 0h1m2 0h1m1 0h1m4 0h2m5 0h2m5 0h1M56 36.5h1m4 0h1m1 0h3m5 0h5m1 0h2m7 0h2m2 0h1m2 0h2m2 0h1m2 0h2m4 0h1M60 37.5h1m2 0h3m2 0h1m5 0h2m1 0h1m1 0h3m5 0h1m1 0h1m1 0h1m6 0h5m2 0h1M59 38.5h2m4 0h1m8 0h2m12 0h1m11 0h1m4 0h1m2 0h1M55 39.5h3m7 0h3m19 0h2m12 0h1m4 0h2M54 40.5h4m6 0h2m1 0h1m3 0h1m17 0h1m5 0h1m3 0h1m6 0h1m2 0h2m7 0h2M46 41.5h1m7 0h4m39 0h1m8 0h1m1 0h1m2 0h1m3 0h6M51 42.5h1m2 0h3m1 0h1m33 0h1m12 0h1m12 0h3M52 43.5h1m3 0h1m5 0h2m10 0h1m30 0h1m9 0h5M49 44.5h1m12 0h1m28 0h2m11 0h1m10 0h1m2 0h3M52 45.5h1m5 0h1m2 0h2m50 0h1m2 0h1m1 0h3M48 46.5h1m2 0h1m50 0h1m1 0h1m8 0h1m4 0h1m1 0h1M48 47.5h1m1 0h2m10 0h1m49 0h1m6 0h1m8 0h3M52 48.5h1m14 0h1m44 0h1m3 0h2m2 0h1m4 0h1M52 49.5h3m7 0h2m4 0h1m44 0h1m5 0h4m2 0h2M52 50.5h3m58 0h3m3 0h2m1 0h1M38 51.5h1m9 0h1m5 0h1m59 0h2m1 0h1m2 0h2m7 0h1M38 52.5h1m8 0h2m65 0h2m2 0h2m1 0h1m7 0h1M47 53.5h2m67 0h2m2 0h2m7 0h1m2 0h1M46 54.5h3m64 0h1m3 0h1m7 0h1m6 0h1M46 55.5h1m74 0h4m1 0h1m5 0h1M122 56.5h1m4 0h1M40 57.5h1m9 0h1m72 0h1m1 0h3M54 58.5h1m63 0h1m1 0h1m1 0h1m2 0h1m1 0h2m3 0h2M36 59.5h1m4 0h1m2 0h1m1 0h2m74 0h1m2 0h1m2 0h2m7 0h2M37 60.5h1m2 0h5m1 0h2m65 0h1m8 0h1m1 0h1m4 0h1m1 0h3m3 0h2M43 61.5h2m1 0h1m65 0h2m4 0h2m3 0h1m5 0h1m7 0h2M40 62.5h1m5 0h1m74 0h1m1 0h1m1 0h1m2 0h4m1 0h4M40 63.5h1m81 0h1m3 0h1m4 0h1m2 0h3M37 64.5h1m1 0h1m2 0h1m2 0h2m76 0h1m1 0h2m1 0h1m2 0h3m1 0h3M39 65.5h2m1 0h1m1 0h2m71 0h1m9 0h1m1 0h1m1 0h1m5 0h1M40 66.5h1m3 0h1m1 0h1m79 0h2M41 67.5h1m2 0h1m73 0h1m13 0h1m4 0h1m5 0h1M44 68.5h1m2 0h2m69 0h1m7 0h1m10 0h3M40 69.5h1m77 0h1m5 0h1m1 0h2m3 0h1m2 0h1m6 0h2m1 0h1M37 70.5h1m1 0h1m1 0h2m1 0h1m80 0h3m1 0h3m2 0h1m6 0h2M37 71.5h1m2 0h2m81 0h1m1 0h1m1 0h1m3 0h1m9 0h1M37 72.5h1m1 0h1m1 0h1m1 0h1m78 0h1m1 0h1m1 0h2m7 0h1m5 0h2M36 73.5h2m4 0h2m1 0h1m2 0h3m80 0h1m7 0h1M37 74.5h2m7 0h1m76 0h2m7 0h1m5 0h4M38 75.5h1m2 0h1m78 0h1m3 0h1m5 0h2m3 0h1m2 0h2m1 0h2M38 76.5h1m5 0h1m1 0h1m73 0h5m5 0h1m7 0h2m5 0h1M44 77.5h2m1 0h1m72 0h2m2 0h1m5 0h1m5 0h1m2 0h1M40 78.5h1m1 0h1m4 0h1m7 0h1m60 0h1m3 0h1m1 0h1m6 0h2m4 0h1M39 79.5h1m77 0h1m2 0h2m1 0h1m2 0h1m3 0h3m1 0h1M39 80.5h2m11 0h1m68 0h2m2 0h4m2 0h1m2 0h1m5 0h1M40 81.5h1m3 0h1m81 0h1m1 0h1m1 0h1m8 0h1M40 82.5h1m4 0h1m62 0h2m16 0h2m9 0h2M50 83.5h1m57 0h1m18 0h1m8 0h3M46 84.5h1m3 0h1m1 0h1m70 0h2m10 0h1m1 0h3M42 85.5h1m7 0h2m4 0h1m66 0h3m1 0h1m1 0h2m4 0h1m2 0h2M47 86.5h2m7 0h2m55 0h1m9 0h1m2 0h2m3 0h1m4 0h1m1 0h2M48 87.5h1m9 0h1m1 0h1m51 0h2m3 0h2m1 0h1m2 0h1m3 0h2m5 0h1M44 88.5h1m1 0h1m6 0h1m5 0h2m52 0h6m1 0h3m5 0h1m2 0h1m2 0h1M42 89.5h1m1 0h1m3 0h1m67 0h6m5 0h1m2 0h1m2 0h2M43 90.5h1m7 0h3m58 0h1m4 0h2m2 0h3m3 0h3M48 91.5h1m1 0h1m3 0h1m51 0h2m5 0h1m8 0h3m3 0h1m6 0h1M43 92.5h2m8 0h1m52 0h1m6 0h2m7 0h1m1 0h1m2 0h1m3 0h1M44 93.5h1m8 0h1m52 0h1m15 0h1m4 0h1M53 94.5h1m3 0h1m42 0h1m9 0h2m5 0h1m4 0h1m3 0h1m2 0h1m1 0h1M46 95.5h1m5 0h2m5 0h1m1 0h1m10 0h1m28 0h1m3 0h1m7 0h1m7 0h1m3 0h6m9 0h3M49 96.5h1m3 0h1m7 0h1m9 0h1m28 0h1m5 0h1m5 0h2m5 0h2m5 0h1m13 0h2M55 97.5h1m2 0h4m6 0h1m2 0h1m26 0h1m1 0h1m10 0h3m1 0h3m8 0h2m7 0h3m3 0h3M51 98.5h2m3 0h1m4 0h2m7 0h2m21 0h2m6 0h1m5 0h1m4 0h4m10 0h2m5 0h1m8 0h2M63 99.5h1m7 0h1m14 0h3m3 0h1m8 0h1m4 0h2m5 0h2m1 0h1m10 0h1m5 0h1M86 100.5h1m1 0h1m3 0h1m14 0h1m5 0h2m15 0h1m2 0h1M51 101.5h1m8 0h1m6 0h1m5 0h1m12 0h1m1 0h1m1 0h1m4 0h1m10 0h2m4 0h3m1 0h1m3 0h1m9 0h1M64 102.5h1m1 0h2m7 0h1m1 0h2m6 0h1m1 0h1m7 0h1m3 0h3m1 0h1m5 0h3m1 0h3m2 0h1m1 0h1m9 0h1M62 103.5h1m4 0h1m2 0h1m1 0h4m2 0h1m7 0h2m12 0h1m1 0h5m1 0h2m4 0h2m1 0h1m1 0h1m5 0h2M62 104.5h3m1 0h1m7 0h3m4 0h2m3 0h1m1 0h1m3 0h1m3 0h2m5 0h1m2 0h1m8 0h4m3 0h2M64 105.5h1m4 0h2m7 0h1m1 0h1m1 0h1m3 0h3m5 0h1m2 0h3m1 0h2m4 0h1m7 0h2m1 0h1m3 0h2M59 106.5h1m1 0h1m1 0h1m4 0h1m1 0h1m7 0h4m1 0h1m3 0h2m2 0h2m1 0h1m2 0h1m8 0h2m3 0h1m3 0h1m7 0h2M60 107.5h1m1 0h1m6 0h6m2 0h2m2 0h2m6 0h1m2 0h1m2 0h1m10 0h2m3 0h1m1 0h1m9 0h1M65 108.5h1m3 0h1m1 0h1m3 0h2m4 0h1m7 0h1m1 0h2m4 0h2m7 0h1m3 0h4m9 0h1M68 109.5h2m10 0h2m8 0h1m19 0h2m4 0h1M68 110.5h4m1 0h1m6 0h1m7 0h1m8 0h1m10 0h1m2 0h1m4 0h1M73 111.5h1m1 0h5m1 0h1m6 0h3m4 0h1m11 0h1m3 0h1M77 112.5h3m9 0h2m4 0h1m12 0h2m1 0h1M65 113.5h1m13 0h1m9 0h1m3 0h1m24 0h2M89 114.5h1m16 0h2m1 0h2M107 115.5h2"/>
<path stroke="#e06cf0" d="M87 30.5h1M62 32.5h2m18 0h2m8 0h1M77 33.5h1m1 0h3m1 0h1m9 0h1m8 0h2M73 34.5h1m2 0h1m5 0h3m8 0h1m5 0h5m1 0h1M67 35.5h2m6 0h1m1 0h1m3 0h1m1 0h2m5 0h1m7 0h1m2 0h1M60 36.5h1m5 0h5m5 0h1m2 0h1m1 0h1m7 0h1m5 0h2m1 0h2m5 0h1M67 37.5h1m3 0h1m4 0h1m5 0h2m1 0h2m1 0h1m4 0h1m2 0h2m5 0h2M61 38.5h3m2 0h2m2 0h2m4 0h4m5 0h3m1 0h2m2 0h1m1 0h1m7 0h2M58 39.5h5m9 0h2m12 0h1m2 0h1m3 0h1m1 0h1m6 0h1m2 0h1m2 0h1M58 40.5h3m1 0h2m6 0h1m1 0h2m14 0h1m5 0h1m6 0h2m2 0h1m1 0h2M52 41.5h2m6 0h1m4 0h3m3 0h2m14 0h3m4 0h1m3 0h2m1 0h1m3 0h1m3 0h2M52 42.5h2m5 0h1m2 0h3m9 0h1m13 0h1m2 0h1m2 0h2m11 0h2m1 0h2m3 0h3M50 43.5h2m12 0h1m10 0h2m15 0h1m14 0h2M50 44.5h2m9 0h1m2 0h1m10 0h1m14 0h1m12 0h1m1 0h2m1 0h1M49 45.5h3m3 0h1m1 0h1m1 0h1m4 0h1m5 0h1m21 0h1m4 0h2m2 0h4m6 0h2m1 0h1M49 46.5h2m3 0h1m3 0h2m2 0h2m17 0h2m7 0h2m3 0h1m5 0h1m4 0h1m5 0h1m4 0h1M49 47.5h1m2 0h1m12 0h3m33 0h1m1 0h4m4 0h1m4 0h3M56 48.5h1m6 0h1m1 0h2m1 0h1m30 0h2m3 0h1m8 0h1m4 0h2M55 49.5h2m10 0h1m44 0h1m1 0h2m2 0h1M55 50.5h1m62 0h1m2 0h1M49 51.5h1m3 0h1m56 0h1m2 0h1m4 0h1M54 52.5h1m57 0h2m16 0h2M49 53.5h1m62 0h4m2 0h2m11 0h1M112 54.5h1m1 0h1m3 0h1m11 0h2M47 55.5h1m64 0h1m12 0h1M46 56.5h1m64 0h2m4 0h1m5 0h4M47 57.5h1m3 0h1m2 0h1m56 0h2m5 0h1m5 0h1M50 58.5h1m2 0h1m56 0h1m3 0h1m8 0h1m2 0h1M45 59.5h1m4 0h2m1 0h2m63 0h1m4 0h1m8 0h2M45 60.5h1m2 0h1m2 0h1m60 0h1m1 0h1m3 0h1m4 0h1M47 61.5h1m63 0h1m12 0h1M47 62.5h1m63 0h1m4 0h2m2 0h1m3 0h1M44 63.5h5m67 0h2m2 0h1m6 0h2m3 0h2M43 64.5h1m3 0h2m67 0h2m2 0h1m3 0h1m2 0h1M43 65.5h1m4 0h1m65 0h1m3 0h5m2 0h2M38 66.5h2m5 0h1m2 0h1m68 0h4M38 67.5h3m4 0h4m68 0h1m20 0h1M38 68.5h1m1 0h1m4 0h2m70 0h1m2 0h1m2 0h2m7 0h1M38 69.5h2m5 0h7m67 0h1m1 0h1m1 0h1m1 0h1M38 70.5h1m1 0h1m7 0h1m2 0h4m64 0h2m2 0h1m4 0h1M38 71.5h2m2 0h1m1 0h1m3 0h1m2 0h1m1 0h1m66 0h3m3 0h1m1 0h1M38 72.5h1m3 0h1m5 0h4m61 0h1m4 0h4m6 0h1M46 73.5h2m3 0h1m68 0h1m2 0h1m2 0h3m11 0h1M49 74.5h1m1 0h1m68 0h3m2 0h1m4 0h2M51 75.5h1m59 0h1m7 0h1m2 0h2m1 0h1m3 0h1m2 0h3M47 76.5h1m7 0h1m54 0h2m5 0h1m7 0h1m3 0h1m3 0h1m1 0h1M43 77.5h1m2 0h1m8 0h1m54 0h1m1 0h1m9 0h2m1 0h1m2 0h2m4 0h2M43 78.5h2m9 0h1m62 0h1m5 0h1m3 0h1M40 79.5h1m3 0h1m2 0h1m3 0h2m2 0h1m60 0h1m1 0h1m8 0h1M44 80.5h1m8 0h1m66 0h1m2 0h2m4 0h1M108 81.5h2m13 0h2m2 0h1M50 82.5h1m72 0h1m1 0h1M46 83.5h1m76 0h4M114 84.5h1m2 0h2m3 0h1m2 0h1m1 0h1M46 85.5h1m5 0h1m2 0h1m1 0h2m2 0h1m51 0h2m2 0h2m3 0h1m3 0h1M49 86.5h1m5 0h1m3 0h1m2 0h1m32 0h1m16 0h1m1 0h1m2 0h2m1 0h3m6 0h2M49 87.5h1m7 0h1m56 0h2m6 0h1m6 0h1m1 0h1M48 88.5h1m5 0h1m3 0h1m53 0h1m6 0h1m9 0h2M43 89.5h1m5 0h1m2 0h3m3 0h2m68 0h2M48 90.5h3m3 0h1m17 0h1m20 0h1m13 0h1m3 0h1m1 0h1m5 0h2M55 91.5h2m48 0h1m6 0h1m3 0h5m8 0h1M56 92.5h2m12 0h1m34 0h1m1 0h1m7 0h2m11 0h3M57 93.5h1m3 0h1m4 0h1m33 0h2m3 0h1m7 0h2m1 0h2m10 0h4M54 94.5h3m32 0h1m11 0h1m3 0h1m6 0h2m4 0h1m2 0h1m5 0h2m1 0h1M54 95.5h3m14 0h1m1 0h1m25 0h1m6 0h1m3 0h1m1 0h1m1 0h2m3 0h2M52 96.5h1m1 0h3m1 0h1m8 0h1m5 0h1m25 0h1m1 0h1m3 0h1m1 0h1m3 0h1m30 0h1M52 97.5h1m4 0h1m4 0h2m3 0h1m24 0h2m5 0h1m5 0h2m2 0h2M63 98.5h1m2 0h1m1 0h2m6 0h2m1 0h1m12 0h1m5 0h3m4 0h2M64 99.5h1m1 0h3m15 0h2m14 0h1m14 0h1M67 100.5h5m13 0h1m1 0h1m28 0h1M71 101.5h2m1 0h1m12 0h1m1 0h1m1 0h2m1 0h1m1 0h1m1 0h1m3 0h1m12 0h1m3 0h1M68 102.5h1m3 0h1m19 0h1m13 0h1m12 0h1M65 103.5h2m4 0h1m7 0h1m3 0h1m8 0h1m8 0h1M65 104.5h1m5 0h1m7 0h2m2 0h1m3 0h1m5 0h1m6 0h3m1 0h1M62 105.5h2m10 0h3m2 0h1m3 0h1m11 0h2m3 0h1m2 0h4m10 0h1M62 106.5h1m6 0h1m1 0h6m5 0h1m2 0h2m8 0h1m2 0h2M75 107.5h2m14 0h1m2 0h1m2 0h3m12 0h1M66 108.5h2m2 0h1m22 0h2M65 109.5h3m2 0h2m17 0h1M81 110.5h2m6 0h2M82 111.5h1m25 0h2"/>
<path stroke="#d444ee" d="M76 33.5h1m5 0h1M80 34.5h2m22 0h1M76 35.5h1m3 0h1m7 0h2m12 0h4M80 36.5h1m1 0h4m2 0h1m13 0h3M66 37.5h1m2 0h2m13 0h1m7 0h1m1 0h2M68 38.5h2m10 0h3m8 0h2m1 0h1M68 39.5h4m2 0h1m3 0h3m4 0h1m6 0h1m1 0h1m5 0h1m2 0h2M61 40.5h1m6 0h2m4 0h1m6 0h2m2 0h1m1 0h1m5 0h1m6 0h1m2 0h1M58 41.5h2m1 0h1m1 0h2m3 0h3m2 0h2m10 0h2m3 0h1m1 0h2m6 0h1m1 0h1M60 42.5h1m7 0h2m2 0h2m1 0h3m9 0h1m2 0h1m2 0h1m2 0h2m1 0h3M59 43.5h1m12 0h2m3 0h1m4 0h2m6 0h2m1 0h2m5 0h1m9 0h2M59 44.5h1m10 0h1m3 0h1m8 0h1m3 0h1m6 0h1m2 0h2m3 0h1m4 0h1m1 0h1m1 0h1M56 45.5h1m3 0h1m13 0h1m3 0h1m2 0h4m11 0h1m2 0h1m5 0h1m2 0h3m4 0h1M61 46.5h1m3 0h2m3 0h1m13 0h1m9 0h1m1 0h1m8 0h1m2 0h4m2 0h1m1 0h1M53 47.5h4m2 0h1m1 0h1m6 0h1m12 0h2m12 0h2m2 0h2m1 0h1m4 0h1m2 0h1m2 0h1m1 0h1M53 48.5h1m1 0h1m1 0h1m1 0h1m1 0h1m2 0h1m12 0h1m3 0h2m18 0h3m1 0h1m3 0h3m2 0h2M57 49.5h2m1 0h2m2 0h2m11 0h1m3 0h1m3 0h1m22 0h2m1 0h1M56 50.5h1m3 0h1m3 0h1m20 0h3m22 0h1m1 0h1M50 51.5h3m55 0h2m1 0h2M49 52.5h1m1 0h1m1 0h1m4 0h2m50 0h2M50 53.5h2m9 0h1m68 0h1M49 54.5h1m6 0h1m54 0h1m4 0h1m2 0h2M48 55.5h1m62 0h1m1 0h1m3 0h2m1 0h1M50 56.5h2m2 0h1m46 0h1m11 0h1m2 0h1m1 0h2M48 57.5h2m49 0h2m9 0h1m2 0h5M48 58.5h2m1 0h2m2 0h1m53 0h1m1 0h1m3 0h2M48 59.5h2m2 0h1m60 0h4M50 60.5h1m1 0h1M48 61.5h1m2 0h1m62 0h1m1 0h2M48 62.5h2m62 0h1m5 0h2M49 63.5h1m64 0h1m3 0h2M44 64.5h1m8 0h1m1 0h1m57 0h3m2 0h1M49 65.5h1m63 0h1m1 0h2m6 0h1M49 66.5h2m57 0h1m2 0h1m4 0h1m8 0h1M49 67.5h2m68 0h2m4 0h1M39 68.5h1m9 0h3m67 0h1m1 0h2m2 0h1M52 69.5h1m1 0h2m61 0h1m2 0h1m1 0h1M46 70.5h2m1 0h2m62 0h1m4 0h1m2 0h2M45 71.5h1m3 0h2m1 0h1m1 0h1m58 0h1m4 0h2m9 0h2M45 72.5h3m4 0h1m3 0h2m56 0h1m15 0h1M107 73.5h4m2 0h1m4 0h2m1 0h2m7 0h1M47 74.5h2m1 0h1m5 0h2m51 0h2m2 0h1m4 0h2m8 0h2M50 75.5h1m1 0h2m2 0h2m52 0h1m2 0h1m4 0h1M53 76.5h2m54 0h1m2 0h1m2 0h2m1 0h2m8 0h1m5 0h1M48 77.5h1m5 0h1m54 0h1m1 0h1m1 0h1m2 0h3m7 0h2M45 78.5h2m1 0h1m61 0h1m7 0h2m4 0h1m1 0h1M54 79.5h1m1 0h1m2 0h2m58 0h1m4 0h2M51 80.5h1m2 0h1m52 0h4m8 0h1m10 0h1M45 81.5h1m7 0h1m53 0h1m2 0h1m3 0h2m4 0h3M46 82.5h1m2 0h1m9 0h1m47 0h1m2 0h1m3 0h1m7 0h1m1 0h1M49 83.5h1m1 0h2m6 0h1m50 0h1m6 0h1m4 0h1M49 84.5h1m6 0h2m50 0h1m4 0h1m7 0h1M47 85.5h3m9 0h2m1 0h1m32 0h1m16 0h1m8 0h1M50 86.5h2m6 0h1m1 0h2m5 0h1m28 0h1m22 0h1M54 87.5h3m10 0h1m39 0h1m8 0h1m2 0h1m1 0h1m8 0h1M49 88.5h1m2 0h1m4 0h1m3 0h1m45 0h1m2 0h2M51 89.5h1m8 0h2m44 0h2m3 0h5M57 90.5h1m2 0h1m5 0h2m3 0h1m1 0h1m18 0h1m15 0h3m3 0h3M57 91.5h1m7 0h6m21 0h2m10 0h1m3 0h1m5 0h2m5 0h1M54 92.5h2m2 0h4m3 0h2m18 0h2m25 0h1m4 0h5M54 93.5h1m1 0h1m3 0h1m6 0h1m2 0h1m4 0h1m1 0h1m20 0h2m2 0h1m4 0h1m2 0h1m1 0h1m2 0h1m2 0h2m1 0h1M60 94.5h3m3 0h1m6 0h1m3 0h1m2 0h1m18 0h1m6 0h1m9 0h1m2 0h2M57 95.5h2m3 0h1m7 0h1m3 0h1m14 0h1m8 0h1m12 0h1M57 96.5h1m4 0h1m3 0h1m1 0h3m18 0h1m6 0h3m9 0h3M56 97.5h1m9 0h1m2 0h2m2 0h3m3 0h4m8 0h1m2 0h1m2 0h1m3 0h1M64 98.5h2m1 0h1m4 0h1m1 0h2m2 0h1m1 0h1m2 0h1m1 0h4m8 0h1m4 0h1m1 0h1M65 99.5h1m10 0h6m1 0h1m5 0h1m8 0h1m4 0h1M72 100.5h3m2 0h1m11 0h3m6 0h1m3 0h1m12 0h1M68 101.5h1m1 0h1m4 0h4m6 0h1m7 0h1m3 0h1m1 0h1M69 102.5h1m1 0h1m7 0h1m4 0h1m8 0h2M80 103.5h3m10 0h1M72 104.5h2m31 0h1M71 105.5h3"/>
<path stroke="#c020ec" d="M83 38.5h2M75 39.5h3m3 0h2m1 0h1m5 0h2M77 40.5h4m2 0h2m1 0h1m3 0h1m1 0h1m11 0h1M62 41.5h1m14 0h1m3 0h2m1 0h1m6 0h1m11 0h2M61 42.5h1m3 0h1m1 0h1m2 0h2m6 0h1m2 0h3m2 0h1m2 0h1m8 0h1m3 0h1m1 0h1m4 0h1M60 43.5h2m5 0h3m1 0h1m9 0h1m2 0h6m5 0h1m1 0h3m1 0h4m4 0h1M60 44.5h1m6 0h1m1 0h1m2 0h2m2 0h1m5 0h1m1 0h2m2 0h2m3 0h1m1 0h2m2 0h1m1 0h1m8 0h1M68 45.5h2m1 0h3m1 0h1m1 0h1m1 0h2m6 0h1m1 0h1m3 0h3m4 0h1m5 0h2M55 46.5h3m2 0h1m3 0h1m2 0h2m2 0h1m1 0h2m2 0h4m2 0h1m1 0h1m6 0h2m3 0h4m6 0h1m7 0h1M57 47.5h2m1 0h1m2 0h2m6 0h1m5 0h3m3 0h3m4 0h2m5 0h2m9 0h2m4 0h1M54 48.5h1m3 0h1m1 0h1m17 0h1m4 0h1m1 0h1m10 0h3m7 0h3M59 49.5h1m6 0h1m2 0h1m1 0h1m4 0h1m7 0h1m1 0h2m9 0h9m1 0h1m2 0h1M57 50.5h3m1 0h3m3 0h5m4 0h2m19 0h8m2 0h3m1 0h1M55 51.5h7m1 0h1m3 0h1m1 0h2m15 0h2m3 0h2m4 0h1m4 0h3m2 0h1M50 52.5h1m1 0h1m2 0h3m2 0h3m28 0h1m11 0h2m1 0h4M52 53.5h9m1 0h1m43 0h2m2 0h2M50 54.5h2m2 0h2m1 0h6m43 0h2m2 0h1m4 0h1M49 55.5h2m2 0h6m3 0h1m34 0h3m1 0h4m1 0h2m6 0h3m2 0h1M47 56.5h3m2 0h2m1 0h1m43 0h2m1 0h2m6 0h1m3 0h2M52 57.5h2m1 0h1m10 0h1m2 0h2m20 0h2m2 0h4m2 0h2m6 0h1M70 58.5h2m23 0h8m5 0h1m3 0h2m3 0h1M92 59.5h1m5 0h4m4 0h1m3 0h1m1 0h1m4 0h1M49 60.5h1m3 0h2m44 0h3m2 0h6m1 0h1m3 0h3M49 61.5h2m1 0h3m3 0h1m40 0h3m6 0h2m5 0h1M50 62.5h6m1 0h3m3 0h1m3 0h1m42 0h1m2 0h3M50 63.5h1m1 0h4m1 0h3m3 0h1m46 0h2m1 0h1m1 0h1M49 64.5h1m4 0h1m1 0h3m4 0h1m55 0h1M53 65.5h1m1 0h1m52 0h2m1 0h2m11 0h1M51 66.5h3m1 0h1m3 0h1m4 0h1m42 0h1m4 0h4m5 0h2M51 67.5h5m3 0h1m47 0h2m2 0h1m4 0h1m4 0h4M52 68.5h4m2 0h2m48 0h1m2 0h1m3 0h2M53 69.5h1m2 0h4m46 0h1m1 0h1m4 0h2M45 70.5h1m9 0h3m56 0h1M46 71.5h2m7 0h4m55 0h1m2 0h1M53 72.5h1m4 0h2m47 0h4m1 0h1m4 0h1m11 0h1M52 73.5h1m2 0h3m31 0h1m21 0h2m1 0h2m1 0h1m11 0h1M52 74.5h1m2 0h1m2 0h1m5 0h1m42 0h2m2 0h2m1 0h2m1 0h1m8 0h2M47 75.5h3m4 0h2m2 0h1m48 0h1m1 0h1m2 0h1m1 0h4m8 0h1m1 0h1M48 76.5h5m3 0h4m46 0h3m4 0h2m11 0h2M52 77.5h2m2 0h1m1 0h2m8 0h2m31 0h2m11 0h2m3 0h1M50 78.5h4m2 0h1m1 0h3m1 0h1m6 0h1m32 0h1m6 0h1m1 0h2m2 0h1m9 0h1M45 79.5h2m1 0h3m2 0h1m3 0h2m2 0h2m44 0h1m1 0h5m1 0h1M45 80.5h4m1 0h1m4 0h2m1 0h5m48 0h2m3 0h3M46 81.5h2m1 0h1m2 0h1m1 0h1m2 0h4m1 0h3m46 0h3m2 0h4M51 82.5h5m1 0h2m3 0h1m41 0h2m5 0h1m1 0h1m1 0h7M47 83.5h2m4 0h6m2 0h2m4 0h1m30 0h1m8 0h1m5 0h2m1 0h1m1 0h4M47 84.5h2m4 0h3m2 0h5m27 0h1m8 0h1m9 0h1m2 0h1m2 0h2m2 0h2m5 0h1M53 85.5h2m10 0h2m18 0h2m9 0h1m4 0h1m9 0h1m3 0h1m3 0h2M52 86.5h3m8 0h4m11 0h2m14 0h1m4 0h1m2 0h1m4 0h1m1 0h3m3 0h2M50 87.5h4m7 0h2m7 0h2m6 0h2m4 0h1m8 0h1m1 0h1m1 0h2m7 0h1m1 0h1m2 0h1M50 88.5h2m3 0h2m5 0h1m4 0h1m2 0h3m5 0h2m13 0h1m3 0h1m1 0h1m1 0h1m3 0h2m1 0h2M50 89.5h1m4 0h3m4 0h2m3 0h1m1 0h6m10 0h1m7 0h2m4 0h1m1 0h2m2 0h1m2 0h3M55 90.5h2m1 0h2m1 0h1m1 0h1m4 0h3m3 0h2m9 0h3m1 0h1m1 0h1m2 0h2m2 0h4m2 0h3M58 91.5h7m6 0h4m10 0h3m3 0h1m2 0h2m4 0h2m7 0h1m1 0h1M62 92.5h2m3 0h3m1 0h5m1 0h1m9 0h1m2 0h4m1 0h1m4 0h3m1 0h1M55 93.5h1m2 0h2m2 0h4m2 0h2m1 0h4m1 0h1m1 0h3m4 0h1m2 0h2m7 0h1m5 0h2m6 0h1m8 0h1M58 94.5h2m3 0h1m3 0h1m2 0h3m1 0h3m2 0h1m8 0h1m1 0h2m4 0h3m3 0h1m1 0h1m4 0h1m4 0h2M63 95.5h1m2 0h2m1 0h1m5 0h3m4 0h1m1 0h2m2 0h1m1 0h2m4 0h2m4 0h1m1 0h1m4 0h1M63 96.5h2m9 0h3m1 0h5m1 0h2m4 0h3m1 0h2m6 0h1m1 0h1M64 97.5h2m10 0h3m4 0h4m2 0h2m4 0h2m5 0h1m1 0h1M73 98.5h1m7 0h2m1 0h1m4 0h3m3 0h2M72 99.5h4m6 0h1m7 0h2m3 0h1m1 0h1m1 0h1m2 0h1M75 100.5h2m1 0h1m1 0h5m10 0h3m1 0h3M69 101.5h1m9 0h3m1 0h2m15 0h2M70 102.5h1m9 0h4"/>
<path stroke="#a416ea" d="M83 39.5h1M75 40.5h2m14 0h1M75 41.5h2m1 0h3m2 0h1M66 42.5h1m12 0h2m3 0h2m17 0h1M65 43.5h2m3 0h1m7 0h3m15 0h1M65 44.5h2m1 0h1m2 0h1m5 0h5m4 0h1m13 0h1M65 45.5h3m8 0h1m8 0h2m1 0h1M69 46.5h1m2 0h1m2 0h2m9 0h1m2 0h1M69 47.5h2m5 0h1m3 0h1m5 0h4m2 0h3M69 48.5h3m4 0h1m2 0h2m3 0h1m1 0h6m1 0h1m1 0h1M70 49.5h1m1 0h2m1 0h1m2 0h3m1 0h2m4 0h1m1 0h3m3 0h1m9 0h1M65 50.5h2m5 0h1m2 0h1m2 0h1m2 0h1m2 0h1m3 0h1m3 0h1m12 0h2M62 51.5h1m1 0h3m1 0h1m6 0h3m3 0h1m2 0h2m2 0h1m1 0h1m2 0h4m1 0h2m1 0h1m3 0h2M63 52.5h4m2 0h1m6 0h4m3 0h3m1 0h1m2 0h1m1 0h4m1 0h1m4 0h1m2 0h1M63 53.5h1m4 0h3m7 0h2m3 0h2m6 0h3m1 0h1m6 0h4m2 0h2M52 54.5h2m15 0h1m13 0h1m3 0h1m9 0h4m1 0h4m2 0h2M51 55.5h2m6 0h3m1 0h1m1 0h2m1 0h2m10 0h4m2 0h2m12 0h1m4 0h1m2 0h3M56 56.5h4m2 0h2m2 0h1m1 0h3m9 0h1m1 0h2m1 0h3m3 0h8m5 0h1m1 0h2m1 0h1M56 57.5h1m6 0h3m18 0h1m5 0h1m2 0h2m8 0h1m3 0h2M56 58.5h1m1 0h6m1 0h2m2 0h1m12 0h3m5 0h5m8 0h1m1 0h3M55 59.5h1m1 0h5m2 0h3m3 0h3m8 0h3m7 0h1m1 0h1m3 0h1m4 0h2m1 0h1m1 0h3m1 0h1M55 60.5h1m1 0h2m2 0h1m2 0h1m17 0h2m7 0h2m4 0h2m3 0h2m6 0h1M55 61.5h3m1 0h1m3 0h2m2 0h1m7 0h3m2 0h4m13 0h2m3 0h2m3 0h1m2 0h1M56 62.5h1m5 0h1m1 0h1m1 0h1m7 0h2m5 0h2m16 0h4m4 0h3M51 63.5h1m4 0h1m3 0h3m1 0h1m1 0h2m6 0h1m32 0h3m2 0h1M50 64.5h3m6 0h4m1 0h2m8 0h1m26 0h1m6 0h5M50 65.5h3m1 0h1m1 0h1m1 0h3m3 0h2m4 0h3m14 0h2m12 0h3m6 0h1M54 66.5h1m3 0h1m1 0h2m3 0h1m2 0h4m29 0h2m2 0h2m2 0h2m12 0h2M58 67.5h1m1 0h2m2 0h1m25 0h3m5 0h2m2 0h5m2 0h2m1 0h4M56 68.5h1m3 0h2m28 0h1m7 0h1m4 0h5m1 0h2m1 0h3M61 69.5h1m35 0h1m6 0h2m1 0h1m1 0h1m2 0h1m2 0h2M58 70.5h2m31 0h1m8 0h1m1 0h3m2 0h4m1 0h1m2 0h3M59 71.5h1m30 0h2m8 0h4m3 0h6m2 0h2M54 72.5h2m4 0h1m29 0h1m10 0h2m2 0h1m5 0h1m3 0h2M53 73.5h2m3 0h8m19 0h2m3 0h1m9 0h2m4 0h1m9 0h1M53 74.5h2m7 0h2m1 0h1m21 0h1m1 0h1m10 0h1m15 0h1M59 75.5h1m3 0h3m40 0h1m1 0h1m18 0h1M60 76.5h1m4 0h1m16 0h1m18 0h1M49 77.5h3m5 0h1m2 0h1m2 0h1m6 0h1m4 0h1m21 0h1m10 0h1M49 78.5h1m7 0h1m3 0h1m1 0h1m6 0h1m3 0h2m9 0h2m10 0h1m3 0h1m1 0h2m3 0h1m4 0h2M63 79.5h1m2 0h1m9 0h1m12 0h2m10 0h5m2 0h1m5 0h1M49 80.5h1m7 0h1m5 0h2m1 0h1m3 0h2m4 0h1m20 0h1m7 0h2m6 0h3M48 81.5h1m1 0h2m3 0h2m4 0h1m3 0h2m7 0h1m1 0h1m24 0h6M47 82.5h2m7 0h1m3 0h2m1 0h4m8 0h1m20 0h8m2 0h1m5 0h1M60 83.5h1m2 0h1m2 0h1m1 0h1m13 0h1m1 0h1m5 0h1m5 0h2m1 0h1m2 0h1m1 0h3m4 0h2m2 0h1M66 84.5h2m5 0h1m8 0h4m2 0h2m1 0h1m3 0h2m1 0h1m1 0h2m1 0h1m2 0h2m2 0h2M63 85.5h2m2 0h1m6 0h2m1 0h2m3 0h3m2 0h2m1 0h5m2 0h1m1 0h2m1 0h2m2 0h5m5 0h1M74 86.5h2m4 0h1m2 0h6m3 0h2m3 0h2m1 0h2m1 0h4m1 0h1M63 87.5h1m1 0h2m1 0h2m2 0h1m4 0h1m2 0h4m1 0h1m2 0h2m2 0h1m1 0h1m1 0h1m2 0h7m3 0h2M63 88.5h1m2 0h1m1 0h2m3 0h1m3 0h1m2 0h6m2 0h1m3 0h1m1 0h3m1 0h1m1 0h1m1 0h3M64 89.5h3m1 0h1m6 0h1m3 0h2m1 0h1m1 0h1m1 0h1m1 0h5m2 0h4m1 0h1m2 0h2M62 90.5h1m1 0h2m18 0h1m3 0h1m1 0h1m5 0h2m4 0h2M75 91.5h5m4 0h1m3 0h3m5 0h4m2 0h2m6 0h1M64 92.5h1m11 0h1m1 0h2m4 0h1m3 0h2m4 0h1m1 0h1m1 0h2m3 0h1m4 0h4M81 93.5h1m2 0h1m1 0h2m2 0h7m11 0h2M64 94.5h2m2 0h2m8 0h1m2 0h2m1 0h2m6 0h1m2 0h1m7 0h1m3 0h2M64 95.5h2m2 0h1m9 0h4m1 0h1m2 0h2m4 0h1m1 0h2m7 0h1m3 0h2M65 96.5h1m11 0h1m5 0h1m2 0h3m4 0h1m9 0h1M87 97.5h2m14 0h1M103 98.5h1M96 99.5h1M79 100.5h1M82 101.5h1"/>
<path stroke="#700ee6" d="M87 46.5h2M72 47.5h4M72 48.5h2m18 0h1m1 0h1M89 49.5h1m3 0h2M73 50.5h2m4 0h2m1 0h2m5 0h3m1 0h2m1 0h1M71 51.5h4m3 0h3m1 0h2m5 0h1m10 0h1M67 52.5h2m1 0h1m4 0h1m4 0h3m3 0h1m1 0h2m6 0h1m1 0h1m2 0h1M64 53.5h4m8 0h2m2 0h1m1 0h1m2 0h1m1 0h1m2 0h1m3 0h1m1 0h2m1 0h3M63 54.5h1m1 0h4m1 0h1m4 0h1m2 0h2m1 0h2m1 0h1m1 0h1m1 0h1m2 0h3m1 0h2m4 0h1M64 55.5h1m2 0h1m2 0h1m1 0h2m5 0h1m4 0h2m2 0h1m2 0h2m1 0h3M61 56.5h1m2 0h2m1 0h1m5 0h1m5 0h1m1 0h1m2 0h1m3 0h1m1 0h1m14 0h1m2 0h1M57 57.5h3m2 0h1m4 0h2m2 0h1m10 0h2m2 0h1m17 0h3M57 58.5h1m6 0h1m2 0h2m3 0h2m7 0h1m3 0h2M56 59.5h1m5 0h2m5 0h1m3 0h2m9 0h1m5 0h1m5 0h1m7 0h1M56 60.5h1m2 0h2m1 0h2m2 0h1m2 0h1m2 0h1m2 0h1m1 0h2m1 0h2m11 0h1M60 61.5h2m4 0h1m1 0h3m1 0h2m4 0h2m6 0h1m17 0h3M60 62.5h2m6 0h1m2 0h1m1 0h1m2 0h3m4 0h1m2 0h1m1 0h2m5 0h4m4 0h1m2 0h1M65 63.5h1m9 0h1m19 0h2m7 0h1m1 0h1M66 64.5h2m19 0h1m12 0h1m6 0h1M57 65.5h1m3 0h3m2 0h4m3 0h1m3 0h1m8 0h1m13 0h1m4 0h1m1 0h1M56 66.5h2m4 0h2m2 0h2m20 0h3m1 0h1m5 0h1m4 0h2M62 67.5h2m1 0h1m1 0h2m13 0h1m6 0h1m5 0h1m1 0h1m2 0h2M57 68.5h1m4 0h2m9 0h1m15 0h1m1 0h2m4 0h1m1 0h2m1 0h1M60 69.5h1m1 0h1m2 0h1m1 0h1m1 0h1m1 0h1m1 0h1m7 0h2m7 0h3m5 0h1m1 0h2m1 0h1m6 0h2M61 70.5h1m19 0h2m4 0h1m2 0h1m6 0h2m2 0h1m3 0h2m4 0h1M60 71.5h1m1 0h1m11 0h1m6 0h2m4 0h1m17 0h2M61 72.5h3m2 0h1m7 0h1m8 0h1m2 0h1m1 0h2m1 0h1m8 0h1m2 0h2m1 0h1M66 73.5h1m9 0h3m8 0h2m2 0h1m4 0h1m5 0h1m2 0h1M59 74.5h3m26 0h1m2 0h1m4 0h1m2 0h1m1 0h1m2 0h1m1 0h1M60 75.5h1m1 0h1m3 0h1m1 0h1m2 0h1m5 0h1m9 0h1m8 0h1m3 0h2m2 0h1M61 76.5h1m1 0h2m2 0h3m1 0h1m3 0h3m3 0h1m15 0h2m1 0h1m1 0h1m2 0h1M61 77.5h2m2 0h1m1 0h1m6 0h1m1 0h4m4 0h2m8 0h1m3 0h3m2 0h4M68 78.5h1m7 0h3m5 0h1m4 0h2m5 0h1m3 0h1m4 0h1m1 0h1M64 79.5h2m1 0h1m1 0h2m2 0h2m2 0h1m15 0h2m2 0h1m2 0h1m5 0h1M65 80.5h1m3 0h1m2 0h2m15 0h5m4 0h1m1 0h5M70 81.5h2m1 0h1m1 0h1m1 0h1m12 0h1m5 0h5M67 82.5h1m1 0h1m1 0h1m2 0h1m1 0h1m17 0h1M64 83.5h2m5 0h1m11 0h1m1 0h1m2 0h2m5 0h1m4 0h2m1 0h1M63 84.5h1m1 0h1m2 0h1m2 0h2m1 0h1m1 0h2m14 0h3m2 0h1m4 0h1m1 0h2M68 85.5h1m2 0h3m2 0h1m2 0h1m9 0h1m8 0h1m5 0h2M68 86.5h1m2 0h3m2 0h2m3 0h2m6 0h1M64 87.5h1m8 0h4m10 0h1m3 0h1M64 88.5h2m8 0h3m10 0h1m1 0h3M76 89.5h3m2 0h1m1 0h1m3 0h1M76 90.5h1m3 0h2M80 91.5h1M80 92.5h3m14 0h1M82 93.5h2M83 94.5h1m2 0h2m5 0h2M93 95.5h1"/>
<path stroke="#2810e0" d="M74 48.5h2M74 49.5h1m20 0h1M95 50.5h1M71 52.5h4m24 0h2M71 53.5h5m5 0h1m4 0h1m1 0h2m8 0h1M64 54.5h1m6 0h4m1 0h2m2 0h1m4 0h1m3 0h2m3 0h1M71 55.5h1m2 0h5m10 0h2m2 0h1M60 56.5h1m10 0h2m1 0h5m10 0h1M60 57.5h2m10 0h10m3 0h1m1 0h3M74 58.5h7m6 0h3m14 0h1M67 59.5h2m6 0h6m4 0h5m4 0h2M65 60.5h1m1 0h2m1 0h2m1 0h2m1 0h1m2 0h1m4 0h7m3 0h3M62 61.5h1m2 0h1m5 0h1m2 0h1m9 0h2m1 0h10M65 62.5h1m3 0h2m1 0h1m6 0h2m3 0h2m1 0h1m2 0h5m9 0h2M68 63.5h6m2 0h19m2 0h7m1 0h1M68 64.5h6m1 0h12m1 0h12m2 0h5M74 65.5h3m1 0h8m3 0h11m4 0h1m1 0h1M72 66.5h16m3 0h1m1 0h5m1 0h2M56 67.5h2m8 0h1m2 0h13m1 0h6m4 0h2m1 0h1M64 68.5h9m1 0h15m4 0h4m4 0h1M63 69.5h2m1 0h1m1 0h1m1 0h1m1 0h1m1 0h7m2 0h7m3 0h4m2 0h1m2 0h1M60 70.5h1m1 0h19m2 0h4m1 0h2m2 0h5m2 0h1M61 71.5h1m1 0h11m1 0h6m2 0h4m1 0h2m2 0h8m4 0h1M64 72.5h2m1 0h7m1 0h8m1 0h2m1 0h1m4 0h8M67 73.5h9m3 0h6m7 0h4m1 0h3m3 0h2M66 74.5h21m3 0h1m1 0h4m1 0h2m3 0h2m1 0h1M61 75.5h1m5 0h1m1 0h2m1 0h5m1 0h9m1 0h8m1 0h3m2 0h2m1 0h1M62 76.5h1m3 0h1m3 0h1m1 0h3m3 0h3m2 0h14m2 0h1m3 0h2M64 77.5h1m1 0h1m4 0h3m6 0h4m2 0h8m1 0h2m10 0h1M64 78.5h4m3 0h3m5 0h5m3 0h2m2 0h5m2 0h2m6 0h1M68 79.5h1m2 0h2m2 0h1m2 0h11m2 0h2m2 0h2m1 0h2M67 80.5h2m5 0h2m1 0h12m5 0h3m2 0h1M67 81.5h3m2 0h1m5 0h12m1 0h5M68 82.5h1m1 0h1m1 0h2m3 0h17m1 0h1M69 83.5h2m1 0h10m4 0h2m3 0h4M64 84.5h1m4 0h2m4 0h1m2 0h4m4 0h2M69 85.5h2m9 0h2M69 86.5h2m19 0h2M86 87.5h1m3 0h1M86 88.5h1M77 90.5h3m2 0h2M81 91.5h3M83 92.5h1"/>
</g>
<g transform="translate(59.00,1480.00) scale(3.5)" fill="none" stroke-width="1" shape-rendering="crispEdges">
<path stroke="#f0d0f6" d="M70 28.5h2M35 29.5h1m4 0h1m8 0h2m19 0h1M38 30.5h2m8 0h3m12 0h1m1 0h1M38 31.5h2m6 0h5m14 0h1m1 0h1M29 32.5h1m9 0h1m2 0h2m3 0h3m16 0h1m5 0h2m12 0h1M31 33.5h1m10 0h2m5 0h2m7 0h5M28 34.5h1m6 0h2m5 0h1m1 0h1m2 0h2m1 0h2m5 0h2m1 0h2M34 35.5h2m7 0h3m1 0h7m1 0h3m2 0h6m9 0h2m1 0h5m4 0h2M24 36.5h2m3 0h1m4 0h1m7 0h4m1 0h4m1 0h1m2 0h3m1 0h1m1 0h2m3 0h3m1 0h5m2 0h2m7 0h2m2 0h1m1 0h2M21 37.5h2m3 0h4m5 0h2m10 0h2m1 0h3m1 0h4m3 0h4m1 0h1m3 0h5m1 0h3m1 0h1m11 0h3m6 0h1m5 0h1M17 38.5h2m4 0h6m1 0h3m2 0h1m7 0h2m2 0h2m3 0h1m2 0h3m2 0h5m3 0h7m2 0h2m1 0h1m7 0h1m3 0h1m6 0h2m6 0h1M15 39.5h5m2 0h7m1 0h2m3 0h1m2 0h1m1 0h2m1 0h1m1 0h1m1 0h3m1 0h2m3 0h2m1 0h2m1 0h3m1 0h6m1 0h1m1 0h1m1 0h4m3 0h2m4 0h3m6 0h2m2 0h1M15 40.5h2m3 0h3m1 0h5m5 0h2m1 0h1m4 0h1m2 0h3m1 0h1m1 0h2m3 0h1m1 0h1m3 0h1m2 0h1m1 0h4m1 0h2m1 0h5m4 0h3m4 0h1m10 0h5m2 0h2M13 41.5h2m3 0h6m1 0h1m1 0h2m3 0h2m2 0h4m7 0h1m2 0h1m2 0h1m2 0h1m2 0h1m1 0h1m2 0h1m1 0h2m4 0h2m1 0h1m3 0h3m2 0h1m1 0h1m1 0h1m1 0h2m2 0h3m2 0h1m9 0h2M13 42.5h3m4 0h2m9 0h4m1 0h1m1 0h2m4 0h1m12 0h2m1 0h1m5 0h1m2 0h2m2 0h3m1 0h1m2 0h1m1 0h7m2 0h2m2 0h4m9 0h1m5 0h3M10 43.5h2m1 0h5m2 0h1m3 0h2m4 0h1m6 0h2m1 0h3m16 0h3m1 0h1m1 0h1m1 0h4m2 0h2m4 0h8m1 0h2m1 0h3m1 0h4m1 0h1m2 0h3m8 0h2m12 0h1M9 44.5h5m1 0h2m7 0h1m4 0h1m11 0h1m7 0h2m3 0h1m8 0h1m5 0h2m2 0h2m1 0h1m1 0h1m2 0h4m4 0h3m1 0h2m5 0h1m1 0h1m1 0h2m6 0h1M7 45.5h1m2 0h4m1 0h4m2 0h2m1 0h1m5 0h2m7 0h1m10 0h1m14 0h1m3 0h2m4 0h2m1 0h1m3 0h2m6 0h2m1 0h2m4 0h5m2 0h3m3 0h1m7 0h2m2 0h1M0 46.5h3m8 0h2m1 0h1m4 0h1m1 0h1m1 0h1m5 0h4m5 0h2m10 0h1m3 0h2m12 0h1m1 0h1m2 0h2m1 0h1m3 0h1m10 0h2m2 0h1m4 0h1m1 0h1m2 0h4m3 0h2m4 0h1m3 0h1m1 0h2m7 0h1M0 47.5h2m7 0h1m1 0h1m4 0h1m1 0h1m11 0h1m2 0h2m9 0h1m1 0h1m20 0h4m3 0h1m8 0h1m6 0h2m2 0h2m2 0h3m4 0h2m1 0h1m1 0h2m1 0h1m3 0h3m1 0h2m10 0h1M0 48.5h2m10 0h2m2 0h3m1 0h1m10 0h1m12 0h1m2 0h1m19 0h1m1 0h2m4 0h1m6 0h1m5 0h1m3 0h1m1 0h5m1 0h2m1 0h3m1 0h4m4 0h4m1 0h3m11 0h1M11 49.5h1m3 0h2m1 0h1m26 0h1m21 0h1m14 0h3m5 0h5m6 0h1m3 0h4m6 0h4m1 0h2m1 0h2m9 0h1M7 50.5h3m4 0h1m1 0h1m50 0h1m9 0h1m3 0h5m5 0h3m2 0h1m9 0h1m8 0h3m2 0h5M4 51.5h1m4 0h1m3 0h1m4 0h1m58 0h1m14 0h1m3 0h1m4 0h13m1 0h3m6 0h6m2 0h1M4 52.5h2m2 0h1m1 0h1m1 0h2m4 0h1m59 0h2m14 0h9m2 0h3m1 0h1m1 0h4m2 0h1m1 0h3m3 0h3m1 0h4M7 53.5h1m1 0h1m3 0h1m5 0h1m60 0h2m4 0h1m5 0h1m1 0h1m3 0h4m1 0h1m3 0h2m3 0h1m7 0h2m1 0h3m4 0h3M6 54.5h2m3 0h3m5 0h1m11 0h1m47 0h1m6 0h1m4 0h2m5 0h2m1 0h1m1 0h2m1 0h1m1 0h1m4 0h2m1 0h2m1 0h2m3 0h2m4 0h3m2 0h1M1 55.5h1m7 0h1m1 0h1m3 0h1m1 0h1m12 0h2m58 0h2m3 0h4m2 0h1m6 0h3m1 0h1m1 0h2m9 0h1m4 0h2m2 0h3m1 0h1m1 0h3m2 0h2M5 56.5h2m1 0h1m2 0h1m1 0h2m75 0h1m1 0h1m1 0h3m7 0h1m2 0h12m6 0h3m3 0h1m2 0h2m5 0h2m2 0h2M2 57.5h1m1 0h3m5 0h1m61 0h2m18 0h1m8 0h4m8 0h3m7 0h3m1 0h1m4 0h2m6 0h2M1 58.5h4m70 0h1m24 0h3m3 0h1m3 0h1m1 0h4m1 0h1m1 0h1m15 0h1m3 0h1m6 0h1M0 59.5h1m2 0h1m4 0h1m9 0h2m54 0h1m23 0h1m1 0h1m2 0h1m2 0h3m4 0h1m1 0h2m2 0h1m10 0h3m8 0h1m3 0h3M1 60.5h3m86 0h1m9 0h1m1 0h2m1 0h2m2 0h2m4 0h1m1 0h1m1 0h2m1 0h1m2 0h2m3 0h3m1 0h1m1 0h1m1 0h4m2 0h2M0 61.5h4m2 0h1m83 0h5m5 0h1m4 0h3m2 0h3m2 0h1m2 0h1m2 0h2m2 0h1m3 0h8m1 0h3m4 0h3m5 0h1M5 62.5h2m83 0h2m9 0h1m6 0h3m5 0h3m3 0h2m5 0h6m18 0h1M0 63.5h2m89 0h1m16 0h4m4 0h1m1 0h1m2 0h1m3 0h1m3 0h2m1 0h2m2 0h4m10 0h1M1 64.5h1m95 0h1m6 0h1m1 0h4m2 0h1m3 0h1m1 0h5m6 0h1m2 0h7m10 0h5M96 65.5h1m4 0h1m4 0h6m7 0h7m5 0h2m1 0h4m1 0h1m10 0h4M4 66.5h2m78 0h1m1 0h2m8 0h1m4 0h1m8 0h1m14 0h1m1 0h1m1 0h3m1 0h4m2 0h1m1 0h2m7 0h2m1 0h1M0 67.5h1m5 0h1m102 0h1m1 0h1m6 0h1m8 0h1m3 0h1m1 0h2m1 0h1m2 0h4m1 0h1m5 0h2M0 68.5h1m99 0h2m7 0h2m3 0h2m1 0h1m1 0h1m5 0h3m7 0h1m1 0h1m4 0h1m4 0h4M0 69.5h1m95 0h1m3 0h2m12 0h4m5 0h1m2 0h3m12 0h3m3 0h1m1 0h1m1 0h3M96 70.5h2m2 0h3m12 0h3m4 0h2m3 0h1m1 0h1m1 0h1m9 0h7m1 0h1m1 0h2m2 0h4M97 71.5h1m16 0h1m5 0h2m5 0h3m12 0h4m2 0h1m1 0h3m3 0h3m1 0h1M97 72.5h1m15 0h3m1 0h1m8 0h1m2 0h3m1 0h3m7 0h1m1 0h2m1 0h1m1 0h2M102 73.5h1m10 0h1m9 0h1m3 0h1m3 0h1m4 0h3m5 0h4m1 0h4M102 74.5h1m1 0h1m21 0h1m3 0h2m1 0h1m1 0h3m4 0h1m7 0h2M0 75.5h1m119 0h1m2 0h1m2 0h1m2 0h1m1 0h3m2 0h1m1 0h1m3 0h1m1 0h1m7 0h1m10 0h2M114 76.5h2m4 0h1m3 0h1m2 0h1m1 0h1m1 0h3m1 0h2m4 0h3m2 0h3m3 0h1M120 77.5h1m2 0h4m2 0h1m3 0h3m2 0h2m5 0h4M105 78.5h2m10 0h1m3 0h1m5 0h1m2 0h1m1 0h9m5 0h2m2 0h1m16 0h1M118 79.5h1m5 0h1m1 0h2m1 0h2m2 0h4m1 0h3m2 0h1m1 0h2m3 0h1M108 80.5h2m10 0h1m7 0h1m1 0h2m1 0h1m1 0h2m3 0h1m1 0h2m2 0h1m2 0h2M108 81.5h2m11 0h1m6 0h1m1 0h1m1 0h2m2 0h4m5 0h2m3 0h1m3 0h2M107 82.5h1m10 0h1m11 0h2m1 0h3m1 0h4m2 0h2m5 0h1m3 0h2M96 83.5h1m10 0h2m11 0h1m2 0h1m6 0h2m2 0h2m2 0h3m2 0h1m3 0h4m3 0h2M6 84.5h1m1 0h1m82 0h1m16 0h1m15 0h1m7 0h3m4 0h4m2 0h1m1 0h4m3 0h2M5 85.5h1m85 0h2m17 0h2m6 0h1m11 0h8m3 0h2m1 0h1m1 0h2m1 0h3m6 0h1m1 0h1M2 86.5h1m2 0h1m105 0h2m5 0h2m11 0h2m4 0h1m1 0h1m1 0h12m1 0h1m3 0h2m1 0h1M105 87.5h1m13 0h1m4 0h2m5 0h2m5 0h4m1 0h3m2 0h2m1 0h2m1 0h2M4 88.5h2m98 0h3m18 0h1m13 0h3m1 0h2m3 0h2m4 0h2M106 89.5h1m11 0h1m19 0h1m1 0h4m5 0h1m5 0h1M3 90.5h1m1 0h1m101 0h1m14 0h1m4 0h2m11 0h3m1 0h2m2 0h2m4 0h2M1 91.5h1m102 0h2m11 0h1m4 0h2m4 0h1m8 0h1m2 0h3m2 0h1m3 0h1m4 0h3M3 92.5h1m112 0h1m1 0h2m4 0h2m2 0h1m3 0h1m5 0h1m2 0h1m3 0h1m3 0h1m4 0h4M1 93.5h1m102 0h2m10 0h2m1 0h2m6 0h2m2 0h2m3 0h1m1 0h1m4 0h2m1 0h2m1 0h1m4 0h2M0 94.5h1m1 0h1m92 0h2m7 0h1m1 0h1m7 0h2m2 0h1m6 0h1m1 0h2m3 0h2m2 0h1m5 0h2m1 0h3m6 0h2m4 0h2M1 95.5h2m85 0h1m13 0h2m3 0h2m5 0h4m6 0h1m2 0h2m4 0h1m1 0h2m3 0h2m1 0h2m8 0h2M1 96.5h1m87 0h1m17 0h2m7 0h2m6 0h1m2 0h1m1 0h4m2 0h9m1 0h1m1 0h2m3 0h1m6 0h2M6 97.5h1m96 0h1m7 0h1m5 0h1m7 0h4m1 0h2m1 0h1m1 0h7m1 0h1m1 0h4M88 98.5h1m14 0h1m5 0h3m5 0h2m7 0h1m1 0h1m1 0h2m4 0h3m1 0h2m1 0h1m2 0h1m1 0h1M104 99.5h1m4 0h1m2 0h1m4 0h1m1 0h2m1 0h1m2 0h2m1 0h4m3 0h5m3 0h2M112 100.5h1m3 0h3m3 0h5m1 0h2m2 0h1m2 0h5m1 0h3m15 0h1M107 101.5h1m4 0h4m1 0h3m3 0h2m1 0h1m1 0h3m1 0h5m1 0h1m1 0h2m1 0h1m14 0h2M1 102.5h1m1 0h1m67 0h1m35 0h2m4 0h3m1 0h4m2 0h1m3 0h1m1 0h5m3 0h2m1 0h2m4 0h1m3 0h3m5 0h2M0 103.5h1m2 0h3m107 0h1m4 0h2m1 0h1m2 0h1m2 0h1m2 0h1m1 0h3m2 0h2m10 0h2m8 0h2M94 104.5h2m1 0h1m19 0h1m3 0h7m1 0h1m7 0h1m1 0h3m8 0h1m7 0h2M3 105.5h2m1 0h1m3 0h2m80 0h1m4 0h1m23 0h3m1 0h2m1 0h1m10 0h3m2 0h3m11 0h1M6 106.5h1m68 0h1m37 0h1m7 0h1m1 0h2m1 0h5m4 0h10m13 0h1M3 107.5h1m1 0h1m85 0h1m20 0h1m2 0h3m2 0h2m1 0h1m1 0h3m9 0h3m2 0h4M0 108.5h4m81 0h1m5 0h1m2 0h2m11 0h1m1 0h1m5 0h1m5 0h1m2 0h1m1 0h1m13 0h1m3 0h1m2 0h3M3 109.5h1m82 0h1m3 0h1m3 0h4m5 0h2m1 0h1m1 0h2m14 0h5m1 0h1m1 0h1m11 0h6m4 0h1M3 110.5h2m81 0h1m8 0h3m7 0h1m3 0h1m7 0h1m2 0h2m2 0h4m2 0h2m1 0h1m4 0h1m6 0h2M5 111.5h1m1 0h1m69 0h2m15 0h3m8 0h4m4 0h6m1 0h2m2 0h5m1 0h1m1 0h1m1 0h5m12 0h1M5 112.5h1m3 0h1m67 0h1m1 0h1m7 0h1m8 0h1m6 0h2m8 0h1m1 0h4m4 0h2m3 0h2m1 0h1m2 0h1m2 0h2m12 0h1M4 113.5h2m3 0h1m3 0h5m60 0h2m2 0h5m10 0h1m4 0h1m2 0h1m11 0h2m5 0h1m5 0h3m5 0h1m6 0h1m1 0h3M0 114.5h1m3 0h1m1 0h2m5 0h1m1 0h2m1 0h1m65 0h3m1 0h1m2 0h1m4 0h3m2 0h1m10 0h1m4 0h1m1 0h2m3 0h1m3 0h1m1 0h3m5 0h5m2 0h3m1 0h1M0 115.5h2m2 0h1m1 0h1m6 0h1m4 0h1m62 0h1m2 0h2m5 0h2m1 0h1m1 0h2m1 0h2m2 0h3m5 0h2m9 0h2m4 0h5m7 0h3m3 0h2M1 116.5h1m2 0h1m1 0h2m9 0h2m1 0h1m63 0h2m5 0h4m1 0h1m3 0h2m6 0h6m1 0h1m6 0h3m6 0h1m3 0h1m4 0h1M4 117.5h4m3 0h4m5 0h1m27 0h2m30 0h1m4 0h2m5 0h5m11 0h2m3 0h2m8 0h2m2 0h2m6 0h1m4 0h1M0 118.5h1m3 0h3m1 0h3m9 0h1m59 0h2m13 0h1m14 0h2m2 0h1m2 0h3m3 0h9m1 0h1m1 0h1m2 0h1M0 119.5h1m2 0h2m1 0h1m1 0h1m5 0h2m2 0h3m4 0h3m1 0h2m20 0h1m19 0h1m21 0h2m3 0h1m10 0h2m3 0h2m2 0h3m2 0h1m1 0h1m1 0h9m2 0h2M0 120.5h1m2 0h2m10 0h3m1 0h2m4 0h2m23 0h1m4 0h1m2 0h1m3 0h2m5 0h1m1 0h2m20 0h2m3 0h3m5 0h1m1 0h2m5 0h2m1 0h1m1 0h1m2 0h1m3 0h1m1 0h1m3 0h1m10 0h1M4 121.5h2m3 0h2m3 0h3m1 0h3m10 0h1m18 0h2m6 0h1m4 0h1m8 0h1m11 0h2m1 0h2m11 0h1m1 0h2m5 0h1m5 0h1m3 0h2m2 0h2m2 0h1m3 0h4M6 122.5h1m7 0h1m1 0h1m11 0h3m14 0h1m9 0h1m1 0h1m4 0h2m16 0h2m3 0h1m1 0h1m2 0h3m1 0h2m4 0h1m2 0h1m6 0h1m2 0h1m7 0h6m3 0h1m1 0h2M19 123.5h2m1 0h1m5 0h2m2 0h1m2 0h2m8 0h1m10 0h1m6 0h3m14 0h1m2 0h1m1 0h1m1 0h1m1 0h1m3 0h2m3 0h1m2 0h4m6 0h1m1 0h1m1 0h3m2 0h6m3 0h4M8 124.5h2m2 0h1m2 0h2m1 0h2m6 0h3m6 0h3m7 0h4m14 0h2m4 0h1m2 0h1m7 0h1m2 0h1m2 0h1m1 0h1m8 0h2m4 0h1m9 0h1m2 0h4m3 0h5m5 0h3M8 125.5h1m3 0h2m1 0h2m1 0h1m1 0h1m3 0h1m1 0h1m7 0h2m4 0h1m2 0h1m2 0h2m2 0h2m7 0h2m2 0h1m1 0h1m3 0h3m3 0h2m1 0h5m1 0h5m2 0h1m4 0h3m2 0h1m8 0h2m1 0h1m3 0h10M18 126.5h1m2 0h1m3 0h2m1 0h3m5 0h1m3 0h1m1 0h2m1 0h2m4 0h1m7 0h2m2 0h1m6 0h1m1 0h1m2 0h1m1 0h7m1 0h1m1 0h8m1 0h1m1 0h2m1 0h3m6 0h2m7 0h2m2 0h2m4 0h1m7 0h1M19 127.5h5m1 0h6m1 0h1m2 0h1m1 0h1m1 0h1m3 0h1m1 0h1m6 0h1m5 0h2m3 0h4m2 0h1m3 0h5m2 0h2m2 0h1m3 0h6m1 0h1m1 0h1m1 0h3m1 0h1m6 0h2m7 0h1m9 0h3M18 128.5h9m1 0h1m1 0h2m2 0h4m5 0h1m1 0h4m2 0h2m3 0h10m1 0h1m2 0h1m3 0h1m2 0h1m2 0h2m5 0h2m1 0h2m3 0h1m1 0h1m1 0h3m4 0h1m3 0h2m5 0h1m1 0h2m8 0h3M17 129.5h11m2 0h2m4 0h2m1 0h4m4 0h4m1 0h3m5 0h4m3 0h3m4 0h1m1 0h2m3 0h1m3 0h4m2 0h2m3 0h1m1 0h1m1 0h5m12 0h2m1 0h2M21 130.5h3m6 0h2m6 0h2m3 0h1m1 0h1m1 0h2m3 0h1m2 0h1m5 0h1m1 0h5m4 0h1m1 0h1m1 0h1m1 0h1m2 0h7m7 0h3m5 0h2m4 0h2m6 0h2M9 131.5h1m9 0h2m7 0h3m2 0h6m6 0h2m1 0h2m2 0h1m2 0h3m6 0h3m2 0h1m4 0h2m2 0h2m2 0h3m6 0h1m5 0h2m1 0h1m1 0h2m3 0h1m1 0h3M28 132.5h3m2 0h2m2 0h2m5 0h2m5 0h1m1 0h2m2 0h1m5 0h4m1 0h3m1 0h1m1 0h2m3 0h2m2 0h2m6 0h1m6 0h1m1 0h1m1 0h1m3 0h1m8 0h1M26 133.5h5m3 0h1m1 0h2m4 0h3m9 0h5m1 0h2m1 0h1m1 0h6m2 0h2m3 0h1m1 0h1m1 0h3m12 0h2m1 0h2m23 0h2M28 134.5h1m1 0h1m5 0h2m5 0h1m3 0h2m3 0h4m4 0h3m1 0h4m2 0h1m3 0h1m1 0h2m2 0h1m1 0h1m3 0h2m6 0h1m2 0h4m4 0h2m18 0h1m2 0h2M30 135.5h1m10 0h3m3 0h4m8 0h3m3 0h2m3 0h2m2 0h3m1 0h5m4 0h1m10 0h2m3 0h1m2 0h3m20 0h1M19 136.5h1m22 0h1m16 0h3m2 0h2m4 0h7m4 0h2m2 0h4m9 0h2m7 0h1M20 137.5h1m38 0h1m9 0h9m4 0h1m2 0h3m9 0h3m12 0h1M42 138.5h1m10 0h1m3 0h3m8 0h2m1 0h2m3 0h1m3 0h1m7 0h2m12 0h1M51 139.5h2m4 0h3m5 0h1m3 0h1m4 0h2m8 0h1m13 0h1M41 140.5h1m9 0h1m17 0h1m14 0h1m11 0h1M47 141.5h1m8 0h1m30 0h1M56 142.5h1m12 0h1M57 143.5h1m11 0h1m35 0h1"/>
<path stroke="#ecb2f4" d="M49 34.5h1m9 0h1M54 35.5h1m3 0h2M53 36.5h2m3 0h1m16 0h2M42 37.5h2m5 0h1m3 0h1m13 0h3M36 38.5h2m11 0h3m1 0h2M32 39.5h1m3 0h2m1 0h1m10 0h1m2 0h3m16 0h1m1 0h1M32 40.5h1m3 0h1m2 0h3m1 0h2m5 0h1m2 0h2m4 0h2m2 0h2m1 0h1m7 0h1M26 41.5h1m7 0h2m4 0h1m1 0h1m2 0h2m4 0h2m7 0h1m1 0h2m10 0h1M18 42.5h2m2 0h2m2 0h2m7 0h1m4 0h1m2 0h1m1 0h7m4 0h1m4 0h1m1 0h1m14 0h2m1 0h1m17 0h1M18 43.5h2m1 0h3m2 0h1m1 0h1m2 0h6m2 0h1m3 0h3m2 0h3m2 0h2m7 0h1m3 0h1m8 0h4m20 0h1M14 44.5h1m2 0h7m1 0h2m1 0h1m1 0h2m6 0h3m2 0h2m3 0h1m2 0h1m1 0h1m1 0h1m2 0h1m3 0h1m1 0h2m9 0h1m1 0h1m25 0h1M14 45.5h1m4 0h2m2 0h1m3 0h1m1 0h1m8 0h1m1 0h1m1 0h3m4 0h1m3 0h3m7 0h2m3 0h1m5 0h1m2 0h1m3 0h1M13 46.5h1m6 0h1m3 0h1m3 0h1m4 0h1m10 0h1m6 0h1m1 0h1m11 0h1m1 0h1m3 0h2m4 0h3m2 0h2m15 0h1M12 47.5h3m5 0h4m4 0h2m1 0h2m2 0h1m3 0h1m3 0h1m3 0h1m2 0h1m2 0h1m1 0h1m9 0h2m4 0h1m1 0h1m2 0h1m1 0h1m3 0h1m24 0h1M21 48.5h2m7 0h1m2 0h4m11 0h2m4 0h2m1 0h1m10 0h1m2 0h1m1 0h2m16 0h1m7 0h1M12 49.5h1m8 0h2m12 0h3m6 0h1m21 0h1m2 0h1m3 0h1m1 0h3m3 0h1m4 0h3m6 0h4m1 0h1M5 50.5h2m8 0h1m4 0h1m10 0h1m3 0h1m33 0h1m3 0h1m4 0h3m5 0h5m6 0h2m1 0h2M5 51.5h4m5 0h2m3 0h1m38 0h2m18 0h2m2 0h5m4 0h1m5 0h4m19 0h4M6 52.5h2m1 0h1m4 0h2m3 0h4m30 0h1m15 0h1m4 0h1m2 0h1m4 0h3m1 0h1m4 0h1m11 0h2m3 0h1m1 0h1m12 0h2M6 53.5h1m4 0h2m1 0h2m4 0h1m10 0h2m20 0h1m17 0h1m2 0h1m3 0h2m2 0h1m2 0h1m1 0h2m2 0h1m12 0h1m4 0h3m6 0h2M14 54.5h2m14 0h1m1 0h1m38 0h2m5 0h1m1 0h4m1 0h1m2 0h1m1 0h1m16 0h1m1 0h4m2 0h1m2 0h1M18 55.5h1m52 0h2m2 0h1m2 0h2m1 0h1m4 0h1m1 0h2m14 0h4m3 0h1m1 0h1m2 0h3M10 56.5h1m4 0h2m5 0h2m50 0h5m1 0h2m4 0h1m2 0h1m1 0h1m5 0h1m7 0h2M7 57.5h2m2 0h1m3 0h1m3 0h1m2 0h1m50 0h1m3 0h1m5 0h1m3 0h1m1 0h2m1 0h1m2 0h3m20 0h2M0 58.5h1m4 0h1m2 0h2m2 0h1m2 0h1m2 0h2m54 0h1m1 0h1m6 0h1m2 0h2m4 0h6m5 0h3m10 0h1m1 0h1M4 59.5h1m4 0h1m4 0h4m47 0h2m8 0h1m18 0h3m7 0h2m3 0h4m1 0h1m2 0h2M5 60.5h4m3 0h1m4 0h2m72 0h5m1 0h1m1 0h1m4 0h1m2 0h2m2 0h3m4 0h1M5 61.5h1m4 0h3m4 0h1m77 0h5m2 0h3m3 0h2m9 0h2M0 62.5h5m5 0h3m68 0h1m10 0h2m2 0h5m1 0h6m4 0h1m2 0h1m3 0h1m1 0h1m2 0h2M2 63.5h5m5 0h1m68 0h1m8 0h1m1 0h1m4 0h3m1 0h1m1 0h2m2 0h1m4 0h2m5 0h2m3 0h1m6 0h1M0 64.5h1m1 0h1m6 0h2m90 0h1m1 0h1m1 0h1m7 0h1m16 0h2M4 65.5h2m78 0h2m19 0h1m6 0h2m2 0h3m14 0h1M0 66.5h1m2 0h1m2 0h1m88 0h1m2 0h1m1 0h1m5 0h4m1 0h3m3 0h1m1 0h3m1 0h2m1 0h1M1 67.5h1m2 0h2m1 0h2m3 0h1m65 0h1m6 0h3m7 0h4m1 0h2m6 0h1m3 0h1m1 0h4m1 0h3m3 0h2m1 0h3m4 0h1M1 68.5h1m4 0h2m2 0h3m64 0h1m8 0h3m6 0h5m6 0h3m2 0h3m4 0h1m1 0h5m3 0h4m4 0h1M10 69.5h2m73 0h1m4 0h1m4 0h1m1 0h3m2 0h1m6 0h1m1 0h3m4 0h5m1 0h2m3 0h3m16 0h1M0 70.5h1m84 0h1m4 0h2m11 0h1m8 0h3m3 0h2m4 0h3m3 0h1m17 0h1M5 71.5h1m4 0h1m80 0h1m4 0h1m3 0h1m1 0h5m5 0h2m5 0h1m2 0h3m1 0h1M11 72.5h2m83 0h1m2 0h4m3 0h1m5 0h1m12 0h1m1 0h2M3 73.5h2m93 0h1m2 0h1m1 0h1m10 0h3m11 0h3m12 0h1M0 74.5h1m2 0h2m88 0h2m6 0h1m11 0h1m1 0h5m1 0h2m4 0h1m1 0h1m4 0h1m8 0h2M2 75.5h2m98 0h3m8 0h7m1 0h1m5 0h2m5 0h2m7 0h1M0 76.5h5m6 0h1m86 0h1m14 0h1m2 0h1m4 0h3m4 0h1m5 0h1m2 0h1M1 77.5h1m87 0h1m5 0h2m1 0h2m6 0h2m3 0h1m2 0h2m1 0h1m3 0h2m4 0h2m3 0h1m3 0h2M89 78.5h1m21 0h1m3 0h2m1 0h1m1 0h1m3 0h3m1 0h2M106 79.5h1m3 0h2m4 0h2m1 0h2m4 0h1m11 0h1M99 80.5h2m6 0h1m2 0h4m1 0h2m1 0h2m2 0h1m3 0h1m2 0h1m4 0h1m2 0h3M99 81.5h2m6 0h1m2 0h1m4 0h2m1 0h2m2 0h1m4 0h1m1 0h1m1 0h1m2 0h2M0 82.5h1m93 0h2m10 0h1m3 0h1m2 0h1m3 0h1m1 0h1m2 0h2m4 0h1m3 0h1m3 0h1M0 83.5h1m7 0h1m84 0h1m9 0h1m6 0h6m3 0h1m1 0h2m1 0h2m2 0h1m3 0h2m2 0h2m6 0h1M0 84.5h3m2 0h1m1 0h1m84 0h1m14 0h1m1 0h1m1 0h8m2 0h3m1 0h1m3 0h3m3 0h4m4 0h2M1 85.5h1m1 0h2m107 0h1m1 0h2m1 0h1m1 0h1m1 0h5m2 0h2m8 0h1m4 0h1M0 86.5h2m1 0h1m2 0h2m84 0h1m2 0h1m14 0h1m2 0h1m6 0h2m1 0h3m3 0h2m2 0h4m1 0h1M0 87.5h4m89 0h4m4 0h1m1 0h2m1 0h1m5 0h1m4 0h1m2 0h1m2 0h1m2 0h1m2 0h2m2 0h2m2 0h1m4 0h1M0 88.5h1m102 0h1m10 0h1m2 0h1m1 0h1m2 0h3m1 0h7m3 0h3m3 0h1M91 89.5h2m10 0h3m1 0h1m3 0h2m6 0h5m1 0h4m7 0h2M2 90.5h1m96 0h1m4 0h1m13 0h4m1 0h1m2 0h1m2 0h1m6 0h4m3 0h1M0 91.5h1m3 0h1m102 0h1m4 0h2m1 0h2m1 0h2m1 0h1m5 0h1m1 0h4m2 0h2m1 0h2m3 0h2M103 92.5h5m3 0h1m3 0h1m4 0h3m3 0h2m1 0h3m1 0h4m2 0h2m3 0h1M2 93.5h1m100 0h1m2 0h2m6 0h2m5 0h2m3 0h1m2 0h2m2 0h3m3 0h2m4 0h1M1 94.5h1m1 0h2m84 0h1m13 0h1m1 0h1m1 0h3m3 0h1m2 0h2m5 0h1m2 0h1m4 0h1m2 0h2m3 0h2m3 0h1M95 95.5h2m7 0h3m2 0h1m3 0h1m4 0h3m1 0h2m2 0h1m2 0h4m1 0h1m10 0h1M2 96.5h1m3 0h2m79 0h1m6 0h4m3 0h3m9 0h3m2 0h6m2 0h1m6 0h2m9 0h1M0 97.5h2m3 0h1m1 0h1m79 0h1m1 0h1m4 0h1m5 0h3m1 0h7m1 0h2m2 0h1m1 0h1m3 0h3m4 0h1m4 0h1m7 0h1M1 98.5h3m2 0h3m2 0h1m75 0h1m5 0h2m5 0h1m4 0h1m2 0h1m3 0h1m6 0h2m1 0h4m3 0h1m2 0h4m3 0h1m2 0h1M3 99.5h1m69 0h2m10 0h1m16 0h2m1 0h1m2 0h1m1 0h2m1 0h1m4 0h1m2 0h1m1 0h2m7 0h1m1 0h1m5 0h3M3 100.5h1m69 0h1m26 0h6m2 0h3m3 0h2m4 0h2m5 0h1m2 0h2m1 0h2m5 0h1M0 101.5h1m1 0h2m3 0h1m1 0h1m80 0h1m9 0h2m3 0h2m1 0h1m13 0h1m4 0h1m3 0h1m5 0h1M0 102.5h1m3 0h4m1 0h1m62 0h1m33 0h1m5 0h1m8 0h2m5 0h1m5 0h3M6 103.5h1m2 0h3m59 0h1m21 0h4m10 0h2m3 0h1m1 0h4m4 0h2m5 0h1M0 104.5h7m1 0h2m72 0h1m10 0h1m2 0h1m1 0h3m6 0h1m1 0h1m2 0h2m2 0h1m1 0h3m7 0h1M1 105.5h2m2 0h1m1 0h3m72 0h1m2 0h1m8 0h3m3 0h2m5 0h3m2 0h6m2 0h1m3 0h1M0 106.5h3m4 0h5m64 0h1m8 0h1m5 0h7m3 0h1m1 0h1m6 0h3m3 0h2m2 0h1m4 0h1M0 107.5h1m1 0h1m3 0h6m73 0h1m4 0h1m2 0h3m5 0h1m1 0h1m5 0h3m6 0h2m4 0h1m3 0h3M4 108.5h1m3 0h3m79 0h1m1 0h2m4 0h1m4 0h4m1 0h1m3 0h3m1 0h1m2 0h2m2 0h1m1 0h1m1 0h4M4 109.5h1m12 0h1m65 0h2m2 0h2m2 0h1m1 0h1m11 0h1m4 0h1m3 0h3m3 0h4m5 0h1M5 110.5h4m8 0h1m2 0h1m6 0h1m49 0h1m6 0h2m1 0h2m1 0h1m3 0h1m3 0h1m4 0h2m5 0h1m1 0h5m1 0h2m2 0h2m4 0h2m2 0h1M6 111.5h1m1 0h1m9 0h1m60 0h1m5 0h3m9 0h1m1 0h6m4 0h1m9 0h1m2 0h2m5 0h1m1 0h1m1 0h1M6 112.5h1m6 0h2m2 0h2m16 0h2m41 0h1m4 0h4m1 0h3m3 0h1m2 0h2m6 0h3m3 0h2m1 0h1m4 0h4M12 113.5h1m5 0h1m4 0h1m53 0h1m10 0h1m2 0h1m2 0h1m1 0h1m15 0h5m2 0h1m1 0h3M5 114.5h1m2 0h3m1 0h1m6 0h2m59 0h4m8 0h4m10 0h2m1 0h1m1 0h1m9 0h3M5 115.5h1m1 0h1m1 0h4m1 0h3m3 0h1m61 0h2m2 0h3m1 0h1m2 0h1m1 0h1m2 0h1m7 0h1m1 0h3m2 0h4M8 116.5h1m1 0h7m31 0h2m14 0h1m15 0h4m5 0h2m4 0h1m1 0h2m4 0h1m2 0h2m6 0h1M8 117.5h1m1 0h1m4 0h5m1 0h1m3 0h1m52 0h2m1 0h2m1 0h1m4 0h1m1 0h1m5 0h1m2 0h4m3 0h1M15 118.5h2m1 0h2m1 0h1m2 0h2m1 0h2m19 0h2m15 0h2m4 0h2m6 0h1m2 0h1m2 0h2m4 0h4m1 0h1m1 0h6m1 0h1m2 0h2M5 119.5h1m15 0h1m2 0h1m3 0h1m6 0h3m5 0h2m5 0h1m1 0h1m3 0h3m3 0h1m3 0h3m3 0h2m7 0h4m1 0h1m2 0h1m2 0h1m2 0h1m1 0h1m1 0h5m1 0h2m1 0h1M18 120.5h1m2 0h4m5 0h2m4 0h1m10 0h1m4 0h3m6 0h1m2 0h1m5 0h1m2 0h3m7 0h8m1 0h1m4 0h1m3 0h5m1 0h1m11 0h1M17 121.5h1m3 0h1m2 0h3m1 0h2m17 0h3m2 0h1m1 0h1m4 0h1m2 0h1m1 0h1m6 0h1m6 0h4m1 0h1m2 0h1m2 0h11m1 0h1M19 122.5h6m7 0h1m3 0h2m6 0h1m1 0h3m9 0h1m5 0h1m6 0h2m3 0h1m2 0h1m2 0h3m1 0h1m1 0h2m3 0h1m2 0h4m1 0h2m28 0h1M23 123.5h2m1 0h2m2 0h2m5 0h1m6 0h1m1 0h3m6 0h1m1 0h1m4 0h1m4 0h1m6 0h2m1 0h1m1 0h1m2 0h1m3 0h1m1 0h1m6 0h3M24 124.5h2m3 0h6m3 0h1m1 0h2m1 0h2m4 0h1m5 0h1m3 0h4m3 0h1m1 0h1m1 0h2m1 0h1m3 0h1m4 0h1m12 0h2m23 0h3M19 125.5h1m5 0h1m1 0h2m2 0h1m1 0h1m2 0h1m2 0h1m1 0h2m1 0h2m2 0h2m2 0h2m2 0h1m4 0h2m1 0h1m2 0h2m20 0h1M19 126.5h2m6 0h1m3 0h5m5 0h1m2 0h1m2 0h3m2 0h2m2 0h3m2 0h2m1 0h3m1 0h1m2 0h1m4 0h1m7 0h1m12 0h1m2 0h1M31 127.5h1m4 0h1m4 0h2m1 0h1m2 0h2m1 0h1m2 0h1m2 0h2m2 0h3m4 0h2m2 0h2m9 0h2m12 0h1M27 128.5h1m10 0h5m1 0h1m4 0h2m4 0h1m12 0h2m1 0h1m1 0h1m8 0h3m11 0h1M38 129.5h1m4 0h4m4 0h1m18 0h4m8 0h3m14 0h1M37 130.5h1m6 0h1m1 0h1m6 0h2m7 0h1m10 0h1m3 0h1m20 0h5M44 131.5h1m8 0h2m7 0h2m9 0h1m25 0h1m1 0h1M55 132.5h2m16 0h1m25 0h1m1 0h1M99 133.5h1"/>
<path stroke="#e690f2" d="M55 40.5h1M41 41.5h1m1 0h2m9 0h2M41 42.5h2m9 0h4m6 0h1M27 43.5h1m18 0h2m3 0h2m2 0h1m1 0h2M27 44.5h1m4 0h6m8 0h1m5 0h1m3 0h1m2 0h3m4 0h3M25 45.5h2m1 0h1m3 0h3m1 0h1m4 0h1m3 0h1m2 0h1m2 0h1m4 0h1m1 0h1m1 0h3m3 0h2M25 46.5h3m6 0h4m2 0h4m1 0h2m2 0h1m6 0h1m2 0h2m3 0h1m1 0h1m14 0h1M24 47.5h1m2 0h1m8 0h1m1 0h1m2 0h2m5 0h1m2 0h1m5 0h1m1 0h2m11 0h1m4 0h1m1 0h3M23 48.5h1m4 0h2m2 0h1m4 0h3m2 0h2m9 0h1m2 0h1m8 0h2m5 0h1m3 0h3m1 0h2M23 49.5h1m6 0h2m2 0h1m3 0h2m2 0h1m3 0h3m6 0h1m12 0h1m1 0h1m3 0h1m3 0h3m18 0h1M21 50.5h6m3 0h1m2 0h2m1 0h1m27 0h3m1 0h1m1 0h2m2 0h3m22 0h1M20 51.5h3m1 0h2m5 0h1m3 0h2m16 0h1m11 0h1m3 0h2m1 0h2m2 0h1m10 0h4M23 52.5h3m5 0h1m3 0h2m15 0h1m5 0h2m10 0h3m2 0h1m9 0h1m1 0h4M23 53.5h1m9 0h1m18 0h1m6 0h1m5 0h1m3 0h1m2 0h2m1 0h1m7 0h2m4 0h2M25 54.5h1m11 0h1m15 0h1m10 0h2m4 0h1m2 0h2m2 0h1m6 0h1m2 0h1m1 0h1M19 55.5h1m3 0h3m3 0h1m2 0h1m37 0h1m2 0h2m1 0h2m2 0h1m1 0h2m1 0h1m1 0h1M9 56.5h1m7 0h1m1 0h1m4 0h2m5 0h1m37 0h2m1 0h2m5 0h1m2 0h1m2 0h1m1 0h2M9 57.5h2m2 0h2m3 0h1m2 0h1m1 0h1m40 0h4m1 0h2m1 0h1m7 0h3m2 0h2m1 0h1m2 0h1M6 58.5h2m2 0h2m2 0h1m50 0h3m2 0h4m3 0h1m1 0h4m5 0h1m2 0h1M5 59.5h3m2 0h4m56 0h1m5 0h1m13 0h3m4 0h1M4 60.5h1m4 0h3m1 0h1m1 0h2m2 0h1m45 0h2m7 0h1m8 0h2m1 0h2m8 0h1m1 0h1m15 0h1M4 61.5h1m2 0h1m5 0h1m1 0h2m1 0h1m55 0h1m7 0h3m2 0h1m1 0h1m23 0h2M7 62.5h1m5 0h3m1 0h2m6 0h1m56 0h1m6 0h1m4 0h2m17 0h1m6 0h1M9 63.5h2m3 0h1m10 0h1m49 0h3m4 0h1m10 0h1m2 0h1m3 0h1m1 0h1m2 0h2m7 0h2M3 64.5h4m4 0h2m65 0h1m2 0h4m6 0h2m3 0h1m1 0h3m1 0h1m11 0h2M0 65.5h4m2 0h1m3 0h1m69 0h1m5 0h1m1 0h1m9 0h3m1 0h1m11 0h2M1 66.5h1m5 0h3m68 0h3m7 0h1m10 0h1m2 0h1m11 0h1m1 0h1m1 0h1m3 0h1M9 67.5h2m2 0h1m63 0h1m6 0h1m8 0h2m4 0h1m6 0h2m5 0h1m8 0h3M9 68.5h1m3 0h1m70 0h2m4 0h2m2 0h1m7 0h1M1 69.5h1m2 0h2m3 0h1m74 0h1m3 0h2m1 0h1m11 0h2m2 0h2m1 0h1M1 70.5h2m1 0h3m2 0h3m72 0h1m10 0h1m2 0h2m4 0h1m1 0h2m1 0h3M1 71.5h2m1 0h1m1 0h1m2 0h1m1 0h1m73 0h1m4 0h1m10 0h1m5 0h1m2 0h2m6 0h1m6 0h1M0 72.5h7m1 0h3m74 0h2m3 0h1m7 0h1m4 0h3m2 0h1m1 0h2m6 0h7M0 73.5h1m4 0h1m2 0h2m1 0h1m66 0h1m2 0h1m11 0h1m3 0h1m1 0h2m3 0h1m5 0h1m6 0h3m2 0h1M1 74.5h2m2 0h1m1 0h3m68 0h1m19 0h3m4 0h1m2 0h3m3 0h1m5 0h1m7 0h1M1 75.5h1m2 0h2m5 0h1m67 0h1m13 0h2m2 0h3m1 0h1m5 0h1m2 0h3m9 0h1M10 76.5h1m68 0h3m13 0h3m1 0h6m1 0h3m8 0h3M0 77.5h1m1 0h1m1 0h1m87 0h1m4 0h1m2 0h1m3 0h2m2 0h1m3 0h2m2 0h1m1 0h2M0 78.5h2m5 0h1m80 0h1m2 0h2m2 0h1m1 0h3m4 0h1m2 0h1m2 0h1m1 0h3m4 0h1M6 79.5h3m79 0h2m10 0h1m2 0h3m1 0h3m2 0h4M3 80.5h4m1 0h1m80 0h1m8 0h1m4 0h2m1 0h1m7 0h1m2 0h1m5 0h3M9 81.5h1m88 0h1m7 0h1m5 0h3m2 0h1m5 0h4M1 82.5h2m90 0h1m2 0h1m3 0h2m12 0h3m7 0h1m2 0h1M1 83.5h2m4 0h1m74 0h1m6 0h4m1 0h2m1 0h1m4 0h1m1 0h1m1 0h1m9 0h3m8 0h1M4 84.5h1m4 0h1m80 0h1m5 0h1m13 0h1m8 0h2m6 0h2M2 85.5h1m4 0h2m84 0h2m12 0h3m3 0h1m2 0h1m3 0h1m6 0h1M4 86.5h1m3 0h1m82 0h1m1 0h2m1 0h2m3 0h4m2 0h3m4 0h1m2 0h1m4 0h1m3 0h3M4 87.5h4m3 0h1m80 0h1m4 0h1m2 0h1m1 0h1m4 0h1m1 0h3m1 0h2m6 0h2m4 0h2m6 0h2M1 88.5h1m1 0h1m2 0h1m4 0h1m1 0h1m78 0h3m6 0h2m4 0h7m1 0h1m4 0h2m11 0h3M3 89.5h1m2 0h1m5 0h1m80 0h1m4 0h2m2 0h1m5 0h3m3 0h4m6 0h1m4 0h4m1 0h2M0 90.5h2m7 0h1m82 0h1m5 0h1m1 0h4m4 0h1m2 0h5m1 0h1m6 0h2m4 0h6M87 91.5h1m9 0h2m1 0h4m4 0h1m2 0h1m2 0h1m5 0h1m3 0h3m6 0h2M4 92.5h1m91 0h3m1 0h3m5 0h3m1 0h3M3 93.5h3m90 0h2m10 0h5M5 94.5h1m82 0h1m1 0h1m3 0h1m2 0h1m12 0h1m1 0h1m6 0h4m6 0h2M3 95.5h1m2 0h1m4 0h1m78 0h1m3 0h1m2 0h1m3 0h1m19 0h1M3 96.5h1m7 0h2m77 0h1m7 0h3m3 0h1m1 0h1m2 0h1M2 97.5h2m7 0h2m73 0h1m6 0h1m1 0h1m1 0h1m16 0h2m3 0h3M0 98.5h1m4 0h1m4 0h1m1 0h1m3 0h1m69 0h1m14 0h2m3 0h2m5 0h1m1 0h2m4 0h1M0 99.5h1m1 0h1m1 0h8m63 0h1m10 0h1m1 0h1m11 0h2m4 0h1m7 0h3m16 0h1M1 100.5h2m1 0h1m2 0h3m1 0h1m63 0h2m13 0h1m8 0h1m6 0h2m3 0h1M1 101.5h1m2 0h1m3 0h1m1 0h1m60 0h1m19 0h3m4 0h2m2 0h1m1 0h1m4 0h1m1 0h1m8 0h2M8 102.5h1m1 0h2m58 0h1m18 0h3m1 0h4m1 0h1m2 0h1m1 0h3m3 0h1m1 0h1M7 103.5h1m62 0h1m1 0h1m16 0h1m7 0h1m1 0h3m2 0h3m2 0h1m18 0h1M7 104.5h1m75 0h1m5 0h1m2 0h1m8 0h1m2 0h2m2 0h1m5 0h2M0 105.5h1m80 0h1m4 0h1m4 0h1m6 0h2m2 0h3m5 0h2m6 0h2M74 106.5h1m7 0h3m1 0h1m11 0h3m1 0h1m4 0h3m8 0h2M1 107.5h1m73 0h1m6 0h1m1 0h1m1 0h1m1 0h2m2 0h1m3 0h5m1 0h1m3 0h3M5 108.5h3m67 0h2m5 0h1m1 0h1m1 0h4m6 0h2m1 0h2m1 0h1m7 0h2m5 0h2M5 109.5h4m3 0h1m3 0h1m3 0h1m10 0h1m44 0h2m11 0h1m2 0h1m5 0h3m1 0h1m8 0h3m3 0h3M16 110.5h1m1 0h2m1 0h1m6 0h1m40 0h2m12 0h1m5 0h1m1 0h1m1 0h1m5 0h4m8 0h1M9 111.5h1m4 0h4m1 0h1m40 0h2m26 0h3m2 0h1m4 0h1m11 0h3M12 112.5h1m2 0h2m2 0h1m20 0h2m18 0h1m30 0h1m1 0h1m1 0h1m12 0h3M10 113.5h2m8 0h1m1 0h1m1 0h1m10 0h2m1 0h1m41 0h2m7 0h2m1 0h2m1 0h1m10 0h3m1 0h2m8 0h1M11 114.5h1m24 0h1m1 0h2m2 0h1m36 0h1m9 0h2m17 0h1m1 0h1m2 0h4M8 115.5h1m12 0h1m14 0h2m1 0h1m40 0h1m8 0h1m17 0h1M9 116.5h1m17 0h2m8 0h1m1 0h2m24 0h1m2 0h1m4 0h1m5 0h1m6 0h1m1 0h1m10 0h1m4 0h2M9 117.5h1m14 0h1m1 0h3m10 0h1m3 0h2m19 0h4m4 0h2m3 0h1m5 0h1m3 0h2m1 0h1m7 0h2m4 0h3M17 118.5h1m4 0h2m2 0h1m2 0h2m4 0h1m1 0h1m5 0h2m2 0h1m3 0h1m12 0h1m2 0h1m5 0h3m7 0h2m2 0h4m6 0h1m6 0h1m1 0h2M16 119.5h2m4 0h2m7 0h1m6 0h1m3 0h1m4 0h2m4 0h1m7 0h1m1 0h3m3 0h2m3 0h2m2 0h3m4 0h1m1 0h2m1 0h2m4 0h1m7 0h1m2 0h1M27 120.5h1m1 0h1m2 0h1m2 0h1m1 0h1m5 0h4m1 0h2m15 0h4m7 0h1m1 0h2m2 0h1m8 0h1m3 0h2M22 121.5h2m3 0h1m2 0h1m1 0h1m3 0h2m6 0h1m1 0h1m6 0h1m6 0h2m3 0h2m2 0h2m2 0h5m4 0h1M25 122.5h3m7 0h1m2 0h1m11 0h3m6 0h3m3 0h2m6 0h1m1 0h1m1 0h2M25 123.5h1m7 0h2m7 0h1m6 0h1m1 0h2m5 0h4m4 0h1m1 0h6m4 0h1M39 124.5h1m2 0h1m7 0h2m4 0h1m10 0h1m10 0h2M29 125.5h2m1 0h1m22 0h1m1 0h2m7 0h1M54 126.5h2m11 0h1M40 127.5h1m8 0h1m4 0h2M53 128.5h2m17 0h1"/>
<path stroke="#e06cf0" d="M56 43.5h1M45 44.5h1m1 0h1m9 0h1M35 45.5h1m1 0h1m8 0h1m5 0h1m4 0h1m1 0h1M47 46.5h1m4 0h1m4 0h2m2 0h3M26 47.5h1m10 0h1m2 0h1m8 0h1m2 0h1m3 0h1m1 0h1m2 0h2m1 0h1M24 48.5h1m1 0h2m12 0h2m8 0h1m7 0h5m1 0h1m14 0h1M24 49.5h5m3 0h2m7 0h1m1 0h1m5 0h1m4 0h1m1 0h2m2 0h1m2 0h3m5 0h2M27 50.5h1m4 0h1m4 0h1m3 0h1m2 0h2m6 0h2m1 0h2m6 0h1m8 0h1M23 51.5h1m2 0h1m1 0h3m1 0h3m2 0h1m16 0h1m9 0h1m1 0h3m2 0h1m2 0h2M26 52.5h1m1 0h3m1 0h1m1 0h1m2 0h1m16 0h1m13 0h1m4 0h1m2 0h1M21 53.5h2m1 0h2m4 0h1m4 0h3m16 0h1m5 0h1m7 0h1m1 0h1m5 0h2M20 54.5h1m2 0h2m1 0h1m6 0h1m29 0h1m2 0h4m5 0h2M26 55.5h1m1 0h1m4 0h1m30 0h3m1 0h2m14 0h1M18 56.5h1m2 0h1m4 0h1m3 0h1m27 0h2m7 0h2m2 0h1m11 0h1M20 57.5h1m3 0h2m5 0h1m26 0h1m12 0h1m6 0h2m4 0h1M13 58.5h1m2 0h2m2 0h1m43 0h1m13 0h1m5 0h2m3 0h2M20 59.5h1m43 0h1m2 0h1m3 0h1m1 0h1m5 0h1m3 0h1m2 0h2m5 0h1M14 60.5h1m5 0h1m42 0h2m10 0h1m9 0h1m2 0h2M8 61.5h2m4 0h1m60 0h1m2 0h1m2 0h1m3 0h2m1 0h1M9 62.5h1m6 0h1m9 0h1m34 0h1m11 0h5m2 0h1m2 0h6m25 0h1M7 63.5h2m2 0h1m1 0h1m1 0h1m10 0h1m32 0h1m14 0h1m3 0h1m1 0h1m2 0h4m7 0h2M7 64.5h2m6 0h1m61 0h1m1 0h2m4 0h1m2 0h1m1 0h1m2 0h1M7 65.5h1m1 0h1m1 0h1m4 0h1m1 0h1m62 0h3m3 0h1m1 0h4m2 0h1m7 0h2M2 66.5h1m7 0h2m4 0h1m1 0h1m62 0h1m1 0h1m8 0h3m8 0h1m1 0h1m9 0h1M2 67.5h2m7 0h1m62 0h1m1 0h1m2 0h1m8 0h1m2 0h2m9 0h1m2 0h1M2 68.5h4m2 0h1m65 0h1m1 0h1m1 0h2m13 0h1m9 0h3M2 69.5h2m2 0h3m3 0h1m64 0h1m5 0h1m2 0h2m17 0h2M3 70.5h1m3 0h2m3 0h1m70 0h1m2 0h1m5 0h1m12 0h1m2 0h1M0 71.5h1m2 0h1m4 0h1m3 0h2m70 0h1m1 0h1m5 0h1m2 0h1m2 0h2m8 0h2M7 72.5h1m5 0h1m63 0h1m6 0h1m6 0h1m3 0h1m11 0h1m1 0h1M1 73.5h2m3 0h2m2 0h1m1 0h1m2 0h3m59 0h1m2 0h1m4 0h2m7 0h1m1 0h1m8 0h5m1 0h2m7 0h2M6 74.5h1m4 0h1m69 0h1m15 0h1m9 0h1m3 0h2M7 75.5h3m68 0h1m2 0h1m9 0h1m3 0h2m3 0h1m4 0h2m1 0h2M12 76.5h1m73 0h2m1 0h4m1 0h1m10 0h1m4 0h3M3 77.5h1m7 0h1m74 0h3m1 0h2m2 0h1m15 0h1M4 78.5h1m1 0h1m1 0h2m80 0h1m2 0h2m1 0h1m3 0h1m2 0h1m4 0h2M0 79.5h6m3 0h2m72 0h1m7 0h2m5 0h2m1 0h2M1 80.5h2m4 0h1m1 0h3m74 0h1m1 0h1m4 0h2m2 0h1m3 0h2m2 0h1M0 81.5h1m1 0h5m3 0h2m74 0h1m2 0h1m1 0h1m2 0h2m5 0h3m1 0h1m5 0h1M4 82.5h1m2 0h2m1 0h3m76 0h3m6 0h2m2 0h2m7 0h2m12 0h2M4 83.5h3m2 0h1m71 0h1m5 0h2m11 0h2m24 0h1M3 84.5h1m89 0h3m1 0h1m1 0h8m19 0h1M9 85.5h1m2 0h1m1 0h1m80 0h1m1 0h4m1 0h5m19 0h1M76 86.5h2m22 0h1m4 0h2m8 0h2M12 87.5h1m86 0h1m8 0h1m6 0h2M2 88.5h1m4 0h1m4 0h1m1 0h2m75 0h1m3 0h1m1 0h4m15 0h1M0 89.5h3m4 0h1m1 0h1m75 0h2m14 0h1m11 0h1m19 0h1M6 90.5h2m4 0h1m66 0h1m7 0h2m2 0h1m5 0h1m12 0h1m5 0h1M5 91.5h1m4 0h1m85 0h1m2 0h1m9 0h2M10 92.5h1m60 0h1m12 0h2m6 0h1m6 0h1M9 93.5h2m74 0h1m9 0h1m2 0h1m2 0h2m10 0h1M6 94.5h2m2 0h2m72 0h2m6 0h2m7 0h2m8 0h1M4 95.5h2m1 0h4m1 0h1m74 0h1m5 0h1m4 0h2m10 0h1m1 0h1M4 96.5h2m2 0h1m1 0h1m67 0h2m6 0h1m4 0h3m11 0h1m4 0h3M4 97.5h1m3 0h1m1 0h1m74 0h1m5 0h2m3 0h1m1 0h2M4 98.5h1m4 0h1m7 0h2m65 0h2m6 0h1m6 0h1m14 0h1M1 99.5h1m10 0h1m3 0h1m1 0h2m56 0h1m4 0h1m5 0h1m3 0h5m11 0h1M0 100.5h1m4 0h2m3 0h1m61 0h1m1 0h1m10 0h1m3 0h1m1 0h1m1 0h1m4 0h1M6 101.5h1m4 0h1m60 0h2m2 0h1m8 0h1m3 0h1m4 0h1m8 0h1m6 0h1M12 102.5h1m75 0h1m3 0h1m4 0h1m1 0h2m1 0h1m7 0h1M8 103.5h1m68 0h2m9 0h1m1 0h3m5 0h1m4 0h1m6 0h2M12 104.5h1m57 0h2m12 0h3m1 0h1m1 0h2m10 0h2m2 0h1m3 0h2M63 105.5h2m10 0h1m7 0h2m20 0h2M12 106.5h1m9 0h2m2 0h1m13 0h1m24 0h1m6 0h2m13 0h4m13 0h1m1 0h1M12 107.5h1m10 0h1m47 0h1m4 0h1m6 0h1m3 0h1m16 0h2M11 108.5h2m7 0h1m10 0h2m36 0h1m4 0h1m6 0h1m1 0h1m17 0h1M9 109.5h2m4 0h1m2 0h2m1 0h1m5 0h1m2 0h1m1 0h1m36 0h2m3 0h2m3 0h1m2 0h1m18 0h1M9 110.5h4m2 0h1m14 0h3m27 0h1m15 0h1m1 0h3m1 0h1m9 0h1M10 111.5h1m2 0h1m6 0h1m14 0h2m3 0h2m34 0h1m3 0h1m3 0h1M10 112.5h2m10 0h3m7 0h3m2 0h2m20 0h1m1 0h1m14 0h1m3 0h3m9 0h1M19 113.5h1m1 0h1m12 0h1m2 0h1m1 0h2m1 0h2m15 0h1m16 0h1m32 0h1M21 114.5h3m10 0h2m1 0h1m3 0h1m1 0h1m4 0h1m1 0h2m7 0h1m2 0h2m7 0h2m5 0h1M22 115.5h1m4 0h3m5 0h1m2 0h1m3 0h1m4 0h1m1 0h2m12 0h2m2 0h2m9 0h2M21 116.5h1m4 0h1m2 0h1m8 0h1m8 0h1m2 0h1m4 0h3m8 0h2m1 0h1m2 0h1m5 0h1m8 0h1M22 117.5h1m6 0h2m6 0h2m1 0h1m6 0h1m2 0h1m5 0h1m11 0h2m1 0h1M36 118.5h1m1 0h2m2 0h1m7 0h1m1 0h1m3 0h1m11 0h3m6 0h2M34 119.5h1m4 0h2m4 0h1m3 0h1m4 0h2m3 0h2M28 120.5h1m4 0h2m3 0h3m1 0h1m16 0h2m16 0h1m2 0h2M33 121.5h1m1 0h1m2 0h3m1 0h2m1 0h1m21 0h2M33 122.5h2m4 0h2m2 0h1m5 0h1m3 0h2m12 0h1m2 0h1m3 0h1M38 123.5h4m1 0h1m6 0h1M52 124.5h3m2 0h2M54 125.5h1"/>
<path stroke="#d444ee" d="M47 45.5h1M48 46.5h1M25 47.5h1m37 0h1M25 48.5h1m25 0h2m10 0h1M29 49.5h1m10 0h1m9 0h1m1 0h2m4 0h2m1 0h2M28 50.5h2m8 0h2m2 0h1m3 0h3m2 0h1m2 0h1m2 0h4M27 51.5h1m10 0h1m13 0h1m4 0h1m2 0h4M27 52.5h1m5 0h1m16 0h2m3 0h1m4 0h8M26 53.5h4m4 0h1m12 0h2m6 0h1m5 0h2m1 0h1m1 0h2M21 54.5h2m4 0h1m1 0h1m4 0h1m1 0h1m1 0h1m4 0h1m3 0h2m3 0h1m6 0h1m1 0h2M20 55.5h1m1 0h1m4 0h1m9 0h2m4 0h1m8 0h2m8 0h2m3 0h1M20 56.5h1m6 0h3m2 0h1m5 0h1m18 0h1m4 0h5m17 0h1M16 57.5h2m8 0h5m1 0h1m12 0h1m11 0h1m1 0h1m3 0h1m4 0h1M21 58.5h3m1 0h1m1 0h2m29 0h1m9 0h2M25 59.5h1m37 0h1m4 0h2m7 0h2m1 0h3m1 0h2m2 0h2M25 60.5h1m36 0h1m7 0h1m2 0h1m2 0h4m2 0h1M25 61.5h3m21 0h2m11 0h1m10 0h1m2 0h2m1 0h2M8 62.5h1m10 0h1m3 0h2m24 0h2m9 0h1m1 0h2m14 0h2M17 63.5h2m1 0h1m1 0h1m1 0h1m33 0h1m1 0h1m11 0h2m5 0h1m8 0h2M13 64.5h2m1 0h3m7 0h1m44 0h6m9 0h2m1 0h1m4 0h2M8 65.5h1m6 0h1m1 0h1m1 0h1m6 0h1m47 0h1m3 0h2m13 0h2M12 66.5h1m2 0h1m1 0h1m1 0h1m7 0h1m46 0h2m1 0h1m11 0h3m12 0h1M14 67.5h1m6 0h2m5 0h1m46 0h1m4 0h1m2 0h1m6 0h1m12 0h2M14 68.5h1m5 0h3m52 0h1m7 0h1m5 0h1m2 0h1M14 69.5h1m6 0h1m47 0h1m1 0h1m3 0h1m2 0h2m14 0h1M14 70.5h1m62 0h2m8 0h1m1 0h1M7 71.5h1m69 0h4m1 0h2m5 0h1M14 72.5h1m63 0h6m3 0h3m2 0h3M13 73.5h2m3 0h1m60 0h1m3 0h2m5 0h3m2 0h1M10 74.5h1m1 0h1m2 0h4m58 0h1m1 0h2m4 0h2m3 0h3m2 0h2m9 0h1M6 75.5h1m3 0h1m1 0h1m6 0h1m60 0h1m6 0h2m1 0h1m1 0h1M5 76.5h1m1 0h3m72 0h4m2 0h1m4 0h1m15 0h1M5 77.5h1m1 0h4m1 0h1m67 0h2m3 0h1m7 0h1m7 0h1m7 0h1M2 78.5h2m1 0h1m4 0h1m1 0h1m88 0h1M74 79.5h2m5 0h2m1 0h1m1 0h2m2 0h1m2 0h3m1 0h1M0 80.5h1m11 0h1m68 0h3m1 0h1m1 0h1m2 0h2m4 0h1M1 81.5h1m5 0h2m3 0h1m13 0h1m51 0h1m6 0h1m1 0h1m2 0h1m1 0h2m2 0h2m6 0h1M3 82.5h1m2 0h1m2 0h1m3 0h1m62 0h1m1 0h1m2 0h2m2 0h3m4 0h1m4 0h1m6 0h2M3 83.5h1m69 0h1m3 0h4m4 0h2m11 0h2m5 0h1M14 84.5h1m66 0h2m4 0h1m10 0h1M13 85.5h1m1 0h1m60 0h4m10 0h1m5 0h1m4 0h1M9 86.5h2m1 0h2m76 0h1m7 0h2M8 87.5h3m2 0h1m68 0h2m2 0h1m3 0h2m6 0h1M8 88.5h2m73 0h1m3 0h4m5 0h1M8 89.5h1m4 0h1m65 0h2m6 0h4m3 0h1m2 0h1m2 0h1M8 90.5h1m1 0h1m69 0h2m2 0h3m6 0h1m15 0h1M6 91.5h2m1 0h1m61 0h1m8 0h3m1 0h3m1 0h1m2 0h2M5 92.5h3m1 0h1m60 0h1m1 0h1m8 0h1m4 0h2m3 0h1M6 93.5h1m1 0h1m2 0h1m67 0h2m2 0h2m1 0h1m1 0h1m3 0h2M8 94.5h2m2 0h2m64 0h1m7 0h2m3 0h1m6 0h1M78 95.5h1m5 0h1m1 0h1m4 0h2m7 0h1m10 0h1M9 96.5h1m59 0h1m7 0h1m2 0h1m3 0h1M9 97.5h1m3 0h1m2 0h1m62 0h2m2 0h2m5 0h1M13 98.5h3m3 0h1m2 0h1m50 0h2m8 0h1m5 0h3m3 0h4M17 99.5h1m2 0h1m1 0h1m54 0h1m2 0h1m1 0h3m4 0h2m5 0h4M12 100.5h1m10 0h1m47 0h1m8 0h2m4 0h3m3 0h1m1 0h4M5 101.5h1m6 0h1m6 0h1m2 0h3m45 0h1m3 0h1m2 0h1m1 0h2m5 0h3m6 0h3M18 102.5h2m1 0h1m12 0h1m38 0h1m2 0h4m5 0h1m1 0h1M12 103.5h1m5 0h1m7 0h1m42 0h1m3 0h1m2 0h1m2 0h1m2 0h6m14 0h1M22 104.5h2m2 0h1m1 0h1m9 0h1m24 0h1m8 0h1m4 0h3m1 0h1m5 0h1M12 105.5h1m9 0h1m3 0h1m12 0h1m9 0h1m16 0h1m4 0h2m1 0h1m1 0h1m2 0h2m6 0h4M13 106.5h1m11 0h1m23 0h1m14 0h1m12 0h1m1 0h3m23 0h1M13 107.5h1m8 0h1m2 0h1m14 0h1m16 0h1m6 0h2m4 0h1m1 0h3m2 0h3M13 108.5h1m2 0h1m6 0h1m6 0h1m2 0h1m23 0h2m6 0h1m2 0h1m1 0h2m1 0h1m3 0h1M11 109.5h1m1 0h2m7 0h1m5 0h2m29 0h2m7 0h1m2 0h1m1 0h1m4 0h1m2 0h1M13 110.5h2m7 0h1m3 0h1m2 0h1m6 0h2m18 0h1m4 0h1m6 0h1m4 0h3M11 111.5h2m8 0h2m4 0h2m3 0h3m2 0h1m1 0h1m19 0h1m2 0h1m3 0h2m2 0h1m3 0h2m5 0h3m7 0h2M20 112.5h2m3 0h1m2 0h1m2 0h1m7 0h1m2 0h1m1 0h1m1 0h2m14 0h1m2 0h3m7 0h1M25 113.5h1m5 0h3m7 0h1m2 0h1m3 0h3m9 0h6m1 0h2m6 0h1M24 114.5h1m2 0h3m1 0h3m6 0h1m3 0h1m2 0h1m1 0h1m2 0h2m4 0h1m1 0h2m2 0h1m1 0h3m1 0h1m4 0h3M23 115.5h2m1 0h1m3 0h2m2 0h1m5 0h2m1 0h1m2 0h1m1 0h1m2 0h1m1 0h8m1 0h1m2 0h2m2 0h7M22 116.5h4m4 0h2m2 0h3m4 0h4m6 0h1m2 0h1m3 0h2m3 0h1m6 0h2m2 0h4M23 117.5h1m7 0h1m3 0h1m6 0h1m2 0h2m4 0h2m1 0h2m1 0h1m1 0h1m10 0h1m3 0h3M31 118.5h2m1 0h1m5 0h1m5 0h1m6 0h1m1 0h1m1 0h7m12 0h1M32 119.5h2m7 0h1m4 0h1m29 0h2M41 120.5h1M34 121.5h1m6 0h1M41 122.5h2m25 0h2M53 123.5h2"/>
<path stroke="#c020ec" d="M51 49.5h1M40 50.5h1m2 0h1m5 0h2m10 0h2M39 51.5h7m2 0h4m3 0h2M38 52.5h3m2 0h7m6 0h2M38 53.5h6m2 0h1m2 0h3m4 0h3m4 0h1M28 54.5h1m6 0h1m3 0h4m1 0h1m1 0h1m2 0h1m1 0h1m2 0h1m3 0h1m1 0h1M21 55.5h1m12 0h3m5 0h1m1 0h2m1 0h3m1 0h1m2 0h1m2 0h5M36 56.5h2m1 0h1m3 0h3m2 0h3m1 0h3m5 0h2M33 57.5h1m3 0h3m4 0h1m1 0h1m1 0h2m1 0h2m1 0h3m3 0h3M24 58.5h1m1 0h1m2 0h5m4 0h2m4 0h4m1 0h1m5 0h3m4 0h2M21 59.5h2m1 0h1m1 0h3m3 0h1m11 0h1m9 0h1m2 0h4m1 0h1m9 0h1M21 60.5h1m2 0h1m1 0h3m3 0h4m6 0h1m7 0h5m6 0h1m5 0h3m1 0h1m8 0h2M19 61.5h3m1 0h2m3 0h1m5 0h2m11 0h2m2 0h1m1 0h2m6 0h1m1 0h4m3 0h1M20 62.5h3m4 0h1m12 0h1m4 0h3m3 0h1m6 0h2m6 0h1m5 0h1M16 63.5h1m2 0h1m1 0h1m1 0h1m3 0h1m1 0h1m27 0h1m3 0h1m1 0h2m1 0h1m4 0h1m15 0h1M19 64.5h2m4 0h1m1 0h1m5 0h1m4 0h1m18 0h3m5 0h2M12 65.5h3m5 0h1m2 0h3m1 0h1m7 0h2m1 0h1m27 0h1m4 0h3m1 0h3M13 66.5h2m8 0h4m1 0h1m3 0h2m1 0h1m24 0h2m9 0h1m1 0h1m2 0h1m5 0h1M15 67.5h1m1 0h4m2 0h1m1 0h3m1 0h2m23 0h2m4 0h1m8 0h2m1 0h2m7 0h1m7 0h1M15 68.5h2m1 0h2m3 0h1m4 0h1m30 0h1m7 0h7m6 0h1M13 69.5h1m1 0h2m2 0h2m1 0h1m4 0h3m29 0h1m7 0h1m2 0h1m1 0h3m1 0h1m3 0h1m1 0h1m9 0h2M13 70.5h1m1 0h2m1 0h1m9 0h2m29 0h1m11 0h1m7 0h1m2 0h1m5 0h1m4 0h2M14 71.5h2m1 0h2m5 0h2m32 0h2m21 0h1m5 0h2m4 0h2M15 72.5h4m4 0h3m2 0h1m8 0h1m20 0h1m3 0h3m11 0h1M19 73.5h2m2 0h3m3 0h1m23 0h1m22 0h1m5 0h1m4 0h3M13 74.5h2m4 0h1m51 0h1m10 0h3m2 0h3M13 75.5h2m2 0h2m1 0h1m54 0h3m4 0h5m2 0h1M6 76.5h1m12 0h2m1 0h1m39 0h1m11 0h5M6 77.5h1m13 0h2m1 0h1m38 0h1m14 0h3m2 0h3m17 0h2M11 78.5h1m1 0h1m9 0h2m45 0h1m2 0h1m1 0h2m3 0h8m14 0h1M11 79.5h3m59 0h1m2 0h1m3 0h1m4 0h1m10 0h1M13 80.5h1m1 0h3m8 0h1m46 0h2m1 0h1m3 0h1m3 0h1m7 0h1m2 0h1M13 81.5h1m2 0h1m10 0h1m46 0h4m3 0h2m5 0h1M5 82.5h1m20 0h2m42 0h1m2 0h3m1 0h1m1 0h2m2 0h2m3 0h1M10 83.5h5m1 0h1m9 0h2m44 0h1m1 0h1m1 0h1m6 0h2M10 84.5h1m1 0h2m1 0h2m55 0h3m2 0h4m2 0h4m1 0h2M10 85.5h2m4 0h2m47 0h1m9 0h1m4 0h2m3 0h3M11 86.5h1m2 0h2m4 0h1m54 0h1m2 0h5m3 0h1m1 0h2M14 87.5h4m12 0h2m40 0h2m1 0h3m1 0h3m2 0h2m1 0h3M10 88.5h1m5 0h2m55 0h1m1 0h1m1 0h1m3 0h2m1 0h3M10 89.5h2m2 0h3m58 0h1m1 0h2m2 0h4m10 0h2M11 90.5h1m1 0h2m46 0h1m13 0h1m2 0h1m3 0h2m5 0h2m3 0h3M8 91.5h1m2 0h2m6 0h1m52 0h1m6 0h1m3 0h1m5 0h2m2 0h3M11 92.5h1m5 0h3m12 0h1m27 0h1m18 0h2m1 0h2m4 0h3m2 0h3M7 93.5h1m4 0h3m3 0h1m7 0h1m31 0h1m11 0h1m7 0h1m2 0h2m4 0h1m1 0h3m2 0h1m4 0h2M14 94.5h1m7 0h1m44 0h2m10 0h1m1 0h3m15 0h2M13 95.5h1m1 0h1m1 0h2m5 0h2m41 0h3m7 0h1m1 0h5m1 0h1M13 96.5h1m1 0h2m1 0h2m3 0h3m38 0h5m5 0h1m1 0h1m4 0h3m1 0h1M14 97.5h2m1 0h3m2 0h2m2 0h1m36 0h2m4 0h1m4 0h1m1 0h3m2 0h2M20 98.5h2m1 0h1m2 0h1m29 0h1m6 0h3m5 0h2m2 0h2m2 0h4M13 99.5h3m5 0h1m1 0h2m36 0h3m1 0h1m5 0h2m6 0h1M13 100.5h1m1 0h2m1 0h5m1 0h2m37 0h1m6 0h1m6 0h3m2 0h3M13 101.5h1m2 0h1m1 0h1m1 0h2m4 0h2m3 0h4m3 0h1m36 0h1m2 0h1m2 0h1m2 0h1M13 102.5h1m2 0h2m2 0h1m1 0h2m2 0h2m4 0h2m4 0h1m30 0h1m4 0h1m5 0h5m1 0h1M16 103.5h2m1 0h5m1 0h1m1 0h2m5 0h1m3 0h2m19 0h1m2 0h1m12 0h1m4 0h2M15 104.5h1m1 0h5m3 0h1m1 0h1m1 0h1m7 0h1m1 0h1m9 0h1m9 0h1m4 0h1m4 0h1m3 0h1m1 0h2m3 0h1M13 105.5h1m3 0h4m2 0h3m1 0h3m6 0h3m1 0h1m3 0h1m3 0h1m1 0h1m5 0h1m2 0h4m2 0h1m1 0h1m2 0h1m2 0h1m3 0h2M19 106.5h1m1 0h1m2 0h1m2 0h1m1 0h1m1 0h3m3 0h3m1 0h1m1 0h1m6 0h1m1 0h1m3 0h1m4 0h3m2 0h6m6 0h1M14 107.5h2m2 0h4m2 0h1m1 0h4m1 0h3m5 0h1m1 0h1m5 0h2m3 0h5m1 0h1m4 0h1m2 0h1m1 0h2m10 0h2M14 108.5h2m1 0h3m1 0h2m1 0h6m4 0h1m3 0h4m5 0h3m4 0h3m2 0h6m1 0h2m4 0h1m5 0h3M23 109.5h4m6 0h2m1 0h1m2 0h1m4 0h2m9 0h4m2 0h1m2 0h4m4 0h1m7 0h1M23 110.5h3m7 0h3m2 0h2m5 0h2m8 0h1m1 0h1m1 0h1m2 0h6m3 0h1m9 0h1M23 111.5h4m2 0h3m6 0h1m3 0h1m1 0h4m8 0h3m4 0h1m1 0h1m2 0h2m3 0h1M26 112.5h2m1 0h2m12 0h1m1 0h1m2 0h3m5 0h1m1 0h1m4 0h2m3 0h2m1 0h4M26 113.5h5m14 0h3m3 0h5m2 0h1m7 0h1m2 0h4m1 0h1M25 114.5h1m4 0h1m14 0h2m7 0h2m9 0h1m3 0h1m3 0h2M25 115.5h1m6 0h2m10 0h2m6 0h1m8 0h1m14 0h2M32 116.5h2m11 0h2m5 0h2m6 0h1M32 117.5h3m1 0h1m4 0h1m11 0h1m4 0h1m1 0h4M33 118.5h1m7 0h1m3 0h1m8 0h1"/>
<path stroke="#a416ea" d="M46 51.5h2M41 52.5h2M44 53.5h2M45 54.5h1m4 0h1m4 0h3M39 55.5h3m4 0h1m3 0h1m4 0h2M33 56.5h3m4 0h3m3 0h2m3 0h1m3 0h2M34 57.5h1m1 0h1m3 0h1m6 0h1m2 0h1m2 0h1M35 58.5h3m2 0h1m2 0h1m4 0h1m1 0h5m4 0h3M23 59.5h1m5 0h3m1 0h7m2 0h2m1 0h9m1 0h1m5 0h1M22 60.5h2m7 0h1m4 0h1m6 0h1m1 0h5m5 0h1m1 0h4m11 0h1M22 61.5h1m6 0h1m2 0h2m2 0h1m1 0h1m1 0h1m4 0h2m5 0h1m2 0h1m4 0h1m6 0h3m1 0h2M28 62.5h2m1 0h5m3 0h1m1 0h1m2 0h1m3 0h1m3 0h3m2 0h1m6 0h2m1 0h1m2 0h2M28 63.5h1m1 0h5m3 0h3m5 0h5m1 0h2m1 0h1m6 0h1m2 0h1m1 0h1m1 0h2M21 64.5h4m3 0h2m4 0h1m2 0h1m3 0h1m1 0h1m1 0h1m1 0h1m4 0h2m1 0h1m4 0h5m2 0h4M21 65.5h2m5 0h1m3 0h3m2 0h1m2 0h1m3 0h1m6 0h3m1 0h8m2 0h1m1 0h4M20 66.5h3m6 0h3m2 0h1m1 0h3m4 0h2m7 0h5m1 0h2m2 0h1m3 0h1m2 0h2m1 0h1M16 67.5h1m7 0h1m6 0h4m3 0h1m9 0h1m3 0h1m3 0h1m1 0h2m2 0h1m3 0h3m2 0h1m10 0h1M17 68.5h1m9 0h1m1 0h2m2 0h2m4 0h1m5 0h5m4 0h2m1 0h2m1 0h1m4 0h2m14 0h2M17 69.5h2m4 0h1m6 0h1m2 0h1m5 0h1m5 0h1m3 0h1m4 0h1m2 0h2m1 0h1m3 0h1m1 0h1m1 0h1m12 0h1M17 70.5h1m1 0h4m1 0h1m2 0h1m2 0h1m8 0h1m5 0h4m3 0h1m1 0h1m5 0h1m5 0h5m1 0h5m3 0h2M16 71.5h1m2 0h5m2 0h1m1 0h4m7 0h1m5 0h5m2 0h3m2 0h1m2 0h1m4 0h1m2 0h1m2 0h3m2 0h1M19 72.5h4m3 0h2m1 0h1m1 0h6m7 0h1m3 0h2m2 0h3m4 0h3m3 0h1m1 0h3m2 0h1m2 0h1M21 73.5h2m3 0h3m3 0h1m4 0h1m6 0h1m3 0h3m3 0h2m3 0h2m2 0h1m2 0h7m2 0h1M20 74.5h1m3 0h1m2 0h2m41 0h1m1 0h1m3 0h1M15 75.5h2m4 0h2m1 0h1m2 0h2m33 0h1m2 0h1m1 0h1m1 0h6M13 76.5h2m2 0h2m2 0h1m1 0h1m4 0h1m17 0h1m16 0h1m2 0h2m5 0h1M13 77.5h2m2 0h1m1 0h1m2 0h1m1 0h1m3 0h2m4 0h1m12 0h2m12 0h1m1 0h2m5 0h2m2 0h3M14 78.5h2m3 0h4m6 0h1m4 0h1m12 0h2m13 0h4m3 0h1m1 0h2m1 0h1m2 0h1m1 0h1M14 79.5h6m3 0h1m1 0h1m44 0h1m1 0h1m4 0h1m1 0h1M14 80.5h1m3 0h1m3 0h2m1 0h1m34 0h3m7 0h1m1 0h1m2 0h1m1 0h3M15 81.5h1m1 0h2m1 0h6m2 0h2m29 0h4m7 0h2m1 0h1m5 0h2m2 0h2M14 82.5h4m2 0h1m2 0h3m2 0h2m29 0h2m4 0h2m2 0h1m1 0h1M15 83.5h1m5 0h1m1 0h2m3 0h2m21 0h1m1 0h1m5 0h1m5 0h1m4 0h2m3 0h1M11 84.5h1m5 0h1m4 0h3m2 0h3m21 0h5m1 0h1m7 0h1m3 0h3m3 0h2M18 85.5h3m8 0h1m23 0h1m1 0h1m5 0h1m4 0h1m3 0h3m1 0h1m7 0h3m3 0h2M16 86.5h4m1 0h1m8 0h1m19 0h1m11 0h1m1 0h1m1 0h1m3 0h5m8 0h3m1 0h1M18 87.5h1m1 0h2m6 0h2m2 0h1m17 0h1m12 0h3m1 0h1m2 0h2m2 0h1m3 0h1M18 88.5h3m1 0h2m4 0h1m1 0h1m32 0h2m2 0h1m2 0h3m1 0h1m1 0h1m1 0h3M17 89.5h2m10 0h1m32 0h3m6 0h4m1 0h1M15 90.5h4m11 0h2m26 0h1m3 0h1m11 0h1m1 0h2M13 91.5h1m2 0h3m1 0h1m9 0h4m6 0h1m16 0h4m8 0h2m2 0h6M8 92.5h1m3 0h2m6 0h4m1 0h2m4 0h1m1 0h1m6 0h1m16 0h3m1 0h1m1 0h2m12 0h2M15 93.5h3m1 0h7m1 0h2m3 0h2m23 0h1m1 0h2m3 0h1m2 0h3m1 0h2m3 0h2M15 94.5h7m1 0h9m13 0h1m8 0h5m7 0h1m2 0h2m4 0h3m2 0h1M14 95.5h1m1 0h1m2 0h1m1 0h3m2 0h5m2 0h1m13 0h1m5 0h1m1 0h2m7 0h3m3 0h1m4 0h2M14 96.5h1m2 0h1m2 0h3m3 0h1m1 0h1m2 0h1m3 0h1m11 0h3m3 0h3m7 0h1m6 0h1m1 0h2m1 0h1M20 97.5h2m2 0h2m9 0h1m12 0h1m5 0h3m8 0h4m1 0h4m1 0h1M24 98.5h2m8 0h2m12 0h1m6 0h1m1 0h1m4 0h1m6 0h2m6 0h2M25 99.5h3m6 0h2m2 0h2m3 0h2m1 0h3m7 0h2m1 0h2m3 0h1m5 0h1m7 0h1M14 100.5h1m2 0h1m8 0h3m2 0h2m1 0h1m3 0h2m6 0h2m10 0h5m1 0h2M14 101.5h2m1 0h1m7 0h1m4 0h1m4 0h1m3 0h1m8 0h1m4 0h1m4 0h1m2 0h5m3 0h1m12 0h2M14 102.5h2m8 0h2m2 0h1m2 0h1m3 0h1m1 0h1m1 0h1m15 0h1m1 0h2m2 0h5m9 0h1M13 103.5h3m8 0h1m4 0h2m2 0h1m1 0h1m1 0h1m11 0h1m5 0h4m2 0h1m1 0h3m2 0h1m5 0h1M13 104.5h2m1 0h1m7 0h1m5 0h2m2 0h1m1 0h1m3 0h1m1 0h7m7 0h3m3 0h1m2 0h4m5 0h1M14 105.5h3m4 0h1m8 0h2m1 0h2m6 0h3m1 0h1m5 0h2m4 0h2m9 0h2M14 106.5h5m1 0h1m7 0h1m1 0h1m3 0h3m5 0h1m1 0h5m2 0h1m3 0h1m1 0h4M16 107.5h2m12 0h1m3 0h5m3 0h3m1 0h1m2 0h3m7 0h4m4 0h1M35 108.5h1m1 0h1m4 0h5m5 0h2M35 109.5h1m1 0h2m1 0h4m2 0h4m3 0h2m7 0h2M40 110.5h5m2 0h2m4 0h2m3 0h1m13 0h1M43 111.5h1m4 0h8m8 0h1m6 0h2M51 112.5h2m1 0h2m1 0h1m12 0h1M56 113.5h2m15 0h1M26 114.5h1m29 0h2M61 116.5h2"/>
<path stroke="#700ee6" d="M35 57.5h1m5 0h3M34 58.5h1m6 0h2M40 59.5h2m14 0h1M29 60.5h2m6 0h2m1 0h2m2 0h1m11 0h1M31 61.5h1m5 0h1m1 0h1m1 0h4m13 0h2M30 62.5h1m5 0h3m16 0h2m11 0h2M35 63.5h1m1 0h1m3 0h1m3 0h1m5 0h1m2 0h1m1 0h1m11 0h1M30 64.5h3m2 0h2m2 0h2m1 0h1m1 0h1m1 0h1m1 0h4m2 0h1m1 0h1M29 65.5h3m7 0h1m1 0h3m1 0h3m1 0h2m3 0h1m8 0h2M39 66.5h1m1 0h2m2 0h1m3 0h1m1 0h1m5 0h1m5 0h1m1 0h1m1 0h2M35 67.5h3m1 0h1m1 0h7m1 0h1m1 0h1m1 0h1m3 0h1m3 0h1m1 0h1m1 0h1M24 68.5h1m1 0h1m4 0h2m3 0h2m4 0h1m1 0h1m5 0h1m5 0h1m4 0h2m1 0h1M24 69.5h1m1 0h1m4 0h2m4 0h2m5 0h1m1 0h1m1 0h1m1 0h1m2 0h1m1 0h1m5 0h1m1 0h1m1 0h1M23 70.5h1m1 0h2m4 0h3m2 0h3m5 0h1m4 0h3m1 0h1m3 0h2m2 0h1m2 0h2M27 71.5h1m4 0h1m3 0h3m4 0h2m5 0h2m4 0h1m4 0h2m1 0h1m1 0h2m1 0h2m3 0h2M30 72.5h1m7 0h2m1 0h1m1 0h1m1 0h1m4 0h2m3 0h3m8 0h1m3 0h2m1 0h2M30 73.5h2m1 0h4m1 0h1m4 0h1m2 0h2m4 0h1m3 0h3m3 0h1m1 0h2M21 74.5h3m1 0h2m2 0h1m4 0h1m11 0h1m6 0h2m7 0h1m2 0h5m3 0h1m1 0h1M23 75.5h1m2 0h1m2 0h1m15 0h1m7 0h2m8 0h2m1 0h1m1 0h1M15 76.5h2m7 0h1m2 0h1m1 0h1m11 0h1m3 0h1m1 0h1m1 0h2m13 0h2m5 0h2M15 77.5h2m1 0h1m6 0h1m4 0h1m2 0h1m7 0h2m3 0h1m12 0h2m11 0h2M16 78.5h3m6 0h1m2 0h1m1 0h1m4 0h1m6 0h2m2 0h1m13 0h1m17 0h1M20 79.5h3m1 0h1m1 0h1m7 0h1m3 0h1m1 0h1m11 0h1m6 0h2m1 0h2m1 0h1m3 0h1m1 0h1m6 0h1M19 80.5h3m5 0h1m4 0h1m26 0h1m3 0h1m7 0h1M14 81.5h1m4 0h1m13 0h1m3 0h2m30 0h1m2 0h1M18 82.5h2m1 0h2m10 0h1m9 0h1m6 0h1m3 0h1m3 0h1m2 0h4m7 0h1M17 83.5h4m1 0h1m2 0h1m4 0h1m19 0h1m1 0h1m1 0h1m2 0h1m2 0h1m2 0h2m1 0h1m2 0h1M18 84.5h4m3 0h2m3 0h1m1 0h4m20 0h1m4 0h1m1 0h2m1 0h1M21 85.5h2m1 0h1m3 0h1m1 0h1m1 0h5m14 0h2m1 0h1m1 0h1m2 0h2m1 0h3m4 0h1m3 0h1M22 86.5h1m1 0h1m4 0h1m1 0h3m1 0h1m13 0h1m2 0h2m7 0h1m1 0h1m1 0h1m1 0h1M19 87.5h1m2 0h2m19 0h1m5 0h1m1 0h4m4 0h1m1 0h2M21 88.5h1m5 0h1m1 0h1m1 0h2m19 0h3m10 0h2m2 0h1M19 89.5h7m2 0h1m1 0h1m1 0h1m20 0h2m4 0h1m1 0h1m3 0h6M19 90.5h5m1 0h1m3 0h1m2 0h2m5 0h1m13 0h2m2 0h1m1 0h2m2 0h3m5 0h3M14 91.5h2m5 0h3m4 0h2m6 0h1m2 0h1m21 0h3m1 0h1m1 0h2M14 92.5h3m7 0h1m2 0h2m5 0h1m2 0h3m8 0h1m7 0h1m10 0h1m1 0h1m3 0h4M29 93.5h3m2 0h1m3 0h2m5 0h5m6 0h1m4 0h1m1 0h1m11 0h1M32 94.5h3m9 0h1m1 0h2m1 0h1m3 0h1m9 0h3m5 0h1m2 0h1M20 95.5h1m10 0h2m1 0h2m12 0h2m4 0h1m2 0h1m15 0h2M27 96.5h1m1 0h2m1 0h3m3 0h2m16 0h3m1 0h1m10 0h1M27 97.5h2m3 0h1m1 0h1m2 0h1m5 0h1m5 0h1m7 0h1M27 98.5h1m5 0h1m2 0h2m5 0h2m1 0h2m1 0h3m2 0h1m3 0h1m2 0h1m4 0h3M28 99.5h1m2 0h3m2 0h2m2 0h1m4 0h1m3 0h3m3 0h1m2 0h1m7 0h1M30 100.5h1m2 0h1m1 0h1m7 0h3m2 0h8m1 0h1m9 0h3M28 101.5h1m8 0h1m2 0h1m6 0h1m1 0h4m1 0h2m1 0h1m2 0h1m7 0h1M30 102.5h1m5 0h1m3 0h1m3 0h1m3 0h4m1 0h2m1 0h1m2 0h2m7 0h1M31 103.5h2m3 0h1m3 0h1m1 0h6m2 0h1m3 0h1m5 0h1m5 0h2M35 104.5h1m5 0h1m8 0h3m1 0h2m4 0h2M32 105.5h1m2 0h1m10 0h2m5 0h1m1 0h1M53 106.5h2M45 107.5h1M36 108.5h1m13 0h2M50 109.5h1m1 0h1M49 110.5h1m1 0h2M53 112.5h1"/>
<path stroke="#2810e0" d="M39 60.5h1M30 61.5h1m25 0h2M42 62.5h2M36 63.5h1m5 0h3M48 65.5h1M40 66.5h1m5 0h3m1 0h1m13 0h1M40 67.5h1m9 0h1m13 0h1M25 68.5h1m9 0h1m2 0h1m1 0h2m1 0h1m7 0h3m9 0h1M25 69.5h1m8 0h3m3 0h4m3 0h1m3 0h2m3 0h1m5 0h1M34 70.5h2m4 0h4m11 0h2m5 0h2M33 71.5h3m4 0h3m12 0h1m7 0h1M40 72.5h1m1 0h1m3 0h2M39 73.5h4m2 0h1m5 0h1m9 0h1m11 0h2M30 74.5h4m1 0h11m1 0h6m2 0h7m1 0h2m9 0h1M25 75.5h1m4 0h15m1 0h7m2 0h7M25 76.5h2m3 0h11m1 0h3m3 0h1m2 0h11m6 0h3M26 77.5h2m3 0h2m2 0h6m2 0h3m3 0h10m6 0h5M26 78.5h2m3 0h3m2 0h6m2 0h2m3 0h11m1 0h1m4 0h3M27 79.5h7m1 0h3m1 0h1m1 0h11m1 0h6m2 0h1m2 0h1m1 0h3M24 80.5h1m3 0h4m1 0h26m5 0h6M30 81.5h3m1 0h3m2 0h20m4 0h6M30 82.5h3m1 0h9m1 0h6m1 0h3m1 0h3m9 0h2M31 83.5h19m5 0h2m1 0h1m2 0h2m4 0h2M31 84.5h1m4 0h15m7 0h3m1 0h1m4 0h2M23 85.5h1m1 0h3m3 0h1m5 0h14m6 0h2m8 0h2M23 86.5h1m1 0h4m5 0h1m1 0h13m2 0h1m2 0h7m7 0h2M24 87.5h4m5 0h10m1 0h5m6 0h4m1 0h1m5 0h1m1 0h2M24 88.5h3m6 0h19m3 0h8m5 0h1M26 89.5h2m3 0h1m1 0h20m2 0h4m1 0h1M24 90.5h1m1 0h3m5 0h5m1 0h13m2 0h2m9 0h5M24 91.5h4m6 0h2m1 0h2m2 0h16m7 0h1m1 0h1M29 92.5h2m4 0h2m4 0h7m1 0h7m6 0h1m2 0h2m1 0h1M35 93.5h3m2 0h5m5 0h6m6 0h1m2 0h2m6 0h2M35 94.5h9m4 0h1m1 0h3m6 0h4m9 0h2M36 95.5h11m3 0h3m5 0h6m7 0h2M36 96.5h2m2 0h7m3 0h3m6 0h1m1 0h2M29 97.5h3m1 0h1m2 0h1m1 0h5m1 0h4m2 0h4m4 0h5M28 98.5h5m5 0h5m2 0h1m6 0h2m5 0h2M29 99.5h2m10 0h2m9 0h3m12 0h3M29 100.5h1m6 0h2m2 0h3m13 0h1m9 0h1M29 101.5h1m6 0h1m4 0h6m9 0h1m2 0h1m6 0h2M29 102.5h1m11 0h3m1 0h3m4 0h1m13 0h2M41 103.5h1m6 0h1m2 0h3M32 104.5h2m19 0h1M54 105.5h1M51 109.5h1M50 110.5h1"/>
</g>
</g>
<circle cx="650" cy="549" r="6" fill="#b080e0" opacity="0.55" filter="url(#soft)"/>
<circle cx="194.6" cy="624" r="6" fill="#b070e0" opacity="0.55" filter="url(#soft)"/>
<circle cx="709" cy="812" r="7" fill="#b090e0" opacity="0.55" filter="url(#soft)"/>
<circle cx="553.6" cy="962" r="7" fill="#c090e0" opacity="0.55" filter="url(#soft)"/>
<circle cx="368.7" cy="1085" r="6" fill="#b080e0" opacity="0.55" filter="url(#soft)"/>
<circle cx="682" cy="983" r="6" fill="#b0a0d8" opacity="0.55" filter="url(#soft)"/>
<circle cx="722" cy="871" r="6" fill="#b0a0d8" opacity="0.55" filter="url(#soft)"/>
<circle cx="746.6" cy="587" r="6" fill="#9090e0" opacity="0.55" filter="url(#soft)"/>
<circle cx="789" cy="587" r="8" fill="#3030e0" opacity="0.55" filter="url(#soft)"/>
<circle cx="827" cy="582.5" r="7" fill="#5080e0" opacity="0.55" filter="url(#soft)"/>
<circle cx="182.6" cy="1862" r="7" fill="#1010d0" opacity="0.55" filter="url(#soft)"/>
<circle cx="536.7" cy="1969" r="9" fill="#a080e0" opacity="0.55" filter="url(#soft)"/>
<circle cx="726" cy="1393" r="7" fill="#6080e0" opacity="0.55" filter="url(#soft)"/>
<circle cx="1851" cy="982" r="6" fill="#b0a0e0" opacity="0.55" filter="url(#soft)"/>
<circle cx="1739" cy="1229" r="6" fill="#c0a0e0" opacity="0.55" filter="url(#soft)"/>
<circle cx="1816" cy="1544" r="6" fill="#c0a8e0" opacity="0.55" filter="url(#soft)"/>
<circle cx="1634" cy="638" r="6" fill="#c0a8e0" opacity="0.55" filter="url(#soft)"/>
<circle cx="844" cy="1236" r="6" fill="#d0a8e0" opacity="0.55" filter="url(#soft)"/>
<g transform="translate(850.00,540.00) scale(3.5)" fill="none" stroke-width="1" shape-rendering="crispEdges">
<path stroke="#12c412" d="M62 4.5h10M61 5.5h11M30 6.5h2m25 0h1m4 0h10m2 0h6m2 0h1M30 7.5h2m24 0h1m6 0h8m3 0h6m1 0h2m21 0h3M29 8.5h3m24 0h1m6 0h8m3 0h6m1 0h2m20 0h1m2 0h5M28 9.5h5m2 0h2m15 0h3m1 0h1m5 0h10m2 0h10m23 0h6M28 10.5h5m1 0h6m4 0h4m3 0h7m3 0h11m3 0h9m23 0h6m1 0h2M25 11.5h16m3 0h4m3 0h18m2 0h4m1 0h8m22 0h10M25 12.5h1m1 0h20m4 0h14m2 0h2m2 0h4m3 0h7m4 0h2m14 0h12M25 13.5h1m2 0h6m1 0h11m2 0h12m7 0h8m4 0h7m2 0h3m8 0h2m7 0h5m3 0h1M26 14.5h18m4 0h1m1 0h10m7 0h7m5 0h7m12 0h4m7 0h4m2 0h1M29 15.5h15m2 0h11m1 0h2m3 0h4m1 0h6m5 0h5m14 0h1m4 0h2m5 0h3m2 0h1m3 0h1m3 0h2M26 16.5h3m1 0h20m3 0h3m1 0h9m3 0h4m7 0h3m15 0h3m1 0h4m5 0h3m2 0h1m1 0h2m3 0h6M26 17.5h24m4 0h12m3 0h4m7 0h3m9 0h2m3 0h9m6 0h2m4 0h2m3 0h6M24 18.5h26m5 0h11m3 0h5m2 0h1m3 0h3m3 0h1m4 0h5m1 0h9m13 0h9m5 0h7M24 19.5h26m6 0h9m3 0h5m5 0h4m4 0h1m3 0h6m1 0h9m3 0h2m9 0h4m3 0h1m5 0h8M23 20.5h23m2 0h3m5 0h6m6 0h2m9 0h3m3 0h12m1 0h9m1 0h6m5 0h6m3 0h2m3 0h8M23 21.5h23m3 0h2m2 0h8m20 0h16m2 0h18m2 0h6m4 0h2m3 0h5M22 22.5h1m1 0h23m4 0h10m8 0h2m6 0h2m3 0h14m3 0h18m2 0h6m4 0h3m1 0h5M19 23.5h4m2 0h23m3 0h5m3 0h2m8 0h11m2 0h7m4 0h3m3 0h7m1 0h10m2 0h6m3 0h2m1 0h7M16 24.5h6m2 0h10m1 0h2m1 0h10m3 0h4m4 0h2m7 0h20m6 0h2m3 0h7m1 0h2m2 0h5m4 0h6m2 0h10M16 25.5h6m2 0h3m2 0h8m3 0h7m4 0h4m3 0h3m7 0h14m17 0h7m1 0h2m2 0h5m3 0h18m1 0h1M16 26.5h4m1 0h1m2 0h2m3 0h18m5 0h3m8 0h1m8 0h9m17 0h15m4 0h23m1 0h2m1 0h2M24 27.5h3m2 0h18m5 0h2m19 0h7m12 0h2m4 0h16m2 0h18m1 0h5m1 0h5M24 28.5h24m42 0h4m9 0h11m2 0h24m1 0h4M23 29.5h8m2 0h18m11 0h1m26 0h6m8 0h12m1 0h9m2 0h12m1 0h2m2 0h2M23 30.5h8m2 0h14m1 0h3m4 0h1m5 0h2m23 0h9m7 0h17m5 0h1m2 0h10m1 0h5m1 0h2M22 31.5h16m2 0h7m1 0h4m30 0h12m7 0h7m2 0h9m7 0h9m3 0h7M16 32.5h2m3 0h22m2 0h9m28 0h8m12 0h1m2 0h2m3 0h11m4 0h10m2 0h3m1 0h4M15 33.5h3m1 0h35m23 0h2m4 0h6m16 0h2m3 0h3m2 0h7m2 0h11m2 0h4m1 0h2M15 34.5h3m1 0h7m1 0h23m2 0h6m28 0h3m15 0h3m4 0h1m3 0h19m3 0h7M14 35.5h36m3 0h6m2 0h3m5 0h1m16 0h1m18 0h1m9 0h9m4 0h6m3 0h6M12 36.5h39m8 0h5m5 0h1m35 0h1m11 0h7m6 0h4m4 0h3M11 37.5h31m1 0h8m8 0h5m5 0h1m10 0h2m14 0h1m8 0h4m9 0h6m5 0h5m4 0h4M12 38.5h23m4 0h4m6 0h2m28 0h4m8 0h1m4 0h1m8 0h4m10 0h5m4 0h4m5 0h1m1 0h6M12 39.5h4m1 0h18m5 0h4m6 0h2m20 0h1m6 0h3m9 0h1m4 0h1m8 0h4m3 0h2m5 0h2m1 0h2m4 0h2m3 0h13M12 40.5h3m2 0h18m4 0h6m6 0h1m20 0h1m23 0h2m7 0h2m1 0h1m2 0h3m5 0h4m4 0h3m3 0h16M12 41.5h3m2 0h18m8 0h2m13 0h3m10 0h2m23 0h2m7 0h10m12 0h4m2 0h10m2 0h4M12 42.5h4m1 0h20m21 0h3m10 0h2m23 0h2m7 0h9m12 0h17m2 0h7M13 43.5h20m3 0h1m8 0h1m25 0h2m24 0h2m6 0h1m2 0h2m15 0h7m2 0h9m4 0h5M13 44.5h20m3 0h2m6 0h3m50 0h2m14 0h2m5 0h1m3 0h4m5 0h9m5 0h4M12 45.5h22m2 0h6m3 0h3m2 0h1m10 0h1m36 0h2m13 0h9m2 0h3m7 0h8m7 0h2M11 46.5h2m1 0h27m4 0h7m3 0h1m4 0h2m39 0h1m13 0h7m4 0h1m2 0h2m5 0h6m4 0h2m2 0h2m2 0h2M9 47.5h4m3 0h18m1 0h6m7 0h4m2 0h3m2 0h3m39 0h1m9 0h2m3 0h4m7 0h4m7 0h1m1 0h12m2 0h3M8 48.5h6m2 0h8m1 0h9m1 0h6m8 0h4m1 0h3m2 0h3m45 0h1m1 0h8m11 0h1m8 0h2m2 0h6m1 0h1m1 0h2m3 0h2M8 49.5h26m1 0h5m1 0h3m5 0h8m3 0h1m9 0h1m20 0h2m13 0h11m6 0h2m8 0h4m5 0h9m1 0h2m1 0h2M8 50.5h31m2 0h3m10 0h2m32 0h5m13 0h1m3 0h6m7 0h2m7 0h5m1 0h1m6 0h6m1 0h2m1 0h2M7 51.5h32m2 0h3m2 0h2m6 0h3m18 0h1m12 0h4m19 0h1m20 0h7m6 0h6m1 0h1m2 0h2M7 52.5h3m2 0h31m4 0h1m7 0h5m45 0h2m26 0h7m6 0h8M12 53.5h12m3 0h15m5 0h1m8 0h5m10 0h2m31 0h3m3 0h2m22 0h7m7 0h7M10 54.5h12m4 0h9m2 0h2m8 0h1m10 0h3m4 0h1m4 0h3m27 0h1m3 0h3m2 0h4m14 0h2m5 0h13m3 0h5M9 55.5h13m1 0h12m12 0h2m11 0h2m3 0h2m3 0h2m9 0h1m22 0h2m3 0h5m12 0h22m2 0h4M8 56.5h27m11 0h4m10 0h3m2 0h2m13 0h3m4 0h3m20 0h6m10 0h28M8 57.5h3m2 0h22m4 0h1m2 0h2m2 0h5m9 0h8m13 0h1m6 0h2m24 0h2m10 0h28M9 58.5h1m3 0h11m1 0h20m1 0h7m12 0h3m53 0h3m2 0h14m1 0h13M10 59.5h1m2 0h11m2 0h20m3 0h5m13 0h1m52 0h10m3 0h5m4 0h1m1 0h10M13 60.5h32m5 0h5m2 0h1m60 0h7m2 0h2m5 0h4m1 0h4m1 0h10M13 61.5h31m8 0h3m1 0h2m18 0h1m41 0h6m10 0h15m1 0h2M13 62.5h30m10 0h1m3 0h2m59 0h6m9 0h14m1 0h1M13 63.5h29m5 0h2m8 0h5m33 0h2m21 0h7m7 0h12m2 0h2M13 64.5h30m4 0h2m8 0h5m2 0h1m29 0h3m22 0h7m1 0h1m4 0h13m1 0h5m1 0h2M14 65.5h30m3 0h2m10 0h2m2 0h2m29 0h2m24 0h8m6 0h16m2 0h2M15 66.5h12m2 0h16m19 0h1m55 0h9m5 0h8m2 0h9M13 67.5h3m2 0h29m73 0h9m7 0h6m2 0h9M13 68.5h4m1 0h27m1 0h2m2 0h2m35 0h1m32 0h10m4 0h9m1 0h1m2 0h6M13 69.5h31m3 0h6m33 0h2m18 0h2m12 0h19m2 0h4m2 0h6M16 70.5h28m3 0h6m19 0h3m11 0h2m18 0h2m10 0h20m2 0h8m1 0h3M15 71.5h1m1 0h10m3 0h6m2 0h12m22 0h2m32 0h1m11 0h12m1 0h23M14 72.5h1m2 0h10m3 0h5m3 0h11m68 0h33m2 0h2M14 73.5h1m3 0h9m2 0h6m3 0h5m1 0h5m61 0h4m4 0h15m1 0h17m2 0h3M13 74.5h2m3 0h17m4 0h4m2 0h8m42 0h3m3 0h1m7 0h6m5 0h6m1 0h6m2 0h14m5 0h2M14 75.5h22m2 0h5m4 0h6m1 0h1m40 0h8m7 0h4m7 0h11m3 0h10m1 0h3m1 0h1m3 0h1M16 76.5h36m2 0h2m43 0h5m8 0h2m8 0h9m4 0h8m2 0h7M14 77.5h7m1 0h11m2 0h16m3 0h2m45 0h2m9 0h4m2 0h2m2 0h4m2 0h4m3 0h8m4 0h6M12 78.5h21m4 0h14m7 0h2m52 0h9m1 0h3m3 0h16m3 0h6M12 79.5h20m6 0h13m7 0h2m53 0h7m3 0h2m3 0h16m3 0h7M13 80.5h19m7 0h2m2 0h11m39 0h1m5 0h1m13 0h4m7 0h1m3 0h17m2 0h5M13 81.5h18m13 0h5m2 0h3m27 0h4m13 0h2m14 0h2m8 0h2m1 0h13m1 0h4m1 0h6M13 82.5h17m15 0h3m33 0h4m29 0h3m7 0h17m2 0h2m1 0h1M13 83.5h16m8 0h1m7 0h2m58 0h2m7 0h4m5 0h7m2 0h10m2 0h1m1 0h1M16 84.5h13m4 0h7m64 0h4m6 0h3m6 0h6m3 0h12m2 0h1m1 0h1M16 85.5h14m2 0h10m38 0h2m21 0h4m8 0h2m6 0h6m3 0h3m1 0h11m1 0h2M16 86.5h15m1 0h10m7 0h1m28 0h4m6 0h1m14 0h3m8 0h3m6 0h7m2 0h13m1 0h1m1 0h2M15 87.5h24m9 0h3m18 0h1m8 0h4m21 0h3m8 0h3m6 0h5m4 0h10m2 0h3M15 88.5h23m10 0h4m25 0h5m22 0h1m8 0h3m6 0h20m6 0h1M15 89.5h15m1 0h7m10 0h4m6 0h1m18 0h4m33 0h1m5 0h1m7 0h14m6 0h1M16 90.5h14m2 0h7m6 0h8m23 0h5m50 0h12m6 0h2M18 91.5h13m4 0h6m3 0h8m20 0h8m18 0h4m13 0h2m12 0h1m1 0h12m6 0h2M17 92.5h5m2 0h8m3 0h3m4 0h9m21 0h7m19 0h4m12 0h4m5 0h1m5 0h6m1 0h7m4 0h1m1 0h2M18 93.5h4m3 0h12m5 0h5m2 0h3m3 0h2m16 0h6m15 0h2m17 0h5m12 0h13m4 0h1M18 94.5h5m2 0h12m5 0h16m15 0h1m1 0h5m12 0h5m16 0h5m12 0h13M21 95.5h15m6 0h17m13 0h8m12 0h5m16 0h5m5 0h13m2 0h6M22 96.5h5m3 0h6m6 0h17m12 0h10m11 0h6m5 0h1m9 0h6m4 0h7m1 0h6m1 0h2m1 0h3M22 97.5h5m3 0h7m4 0h9m1 0h7m7 0h2m3 0h6m2 0h4m11 0h5m4 0h3m8 0h6m4 0h7m2 0h10m1 0h1M22 98.5h6m3 0h6m4 0h8m2 0h6m8 0h2m3 0h6m3 0h5m8 0h5m5 0h4m6 0h7m4 0h9m2 0h1m2 0h5m1 0h2M24 99.5h5m3 0h6m6 0h5m3 0h5m15 0h4m3 0h5m7 0h6m6 0h4m4 0h8m3 0h10m1 0h12M24 100.5h5m3 0h5m8 0h4m24 0h3m3 0h4m7 0h6m7 0h4m4 0h7m1 0h12m1 0h13M20 101.5h2m3 0h5m2 0h4m9 0h4m22 0h1m2 0h2m2 0h4m7 0h7m7 0h5m3 0h3m1 0h9m3 0h17M20 102.5h2m3 0h12m1 0h1m2 0h1m14 0h2m3 0h4m4 0h4m2 0h2m1 0h2m8 0h9m6 0h6m2 0h3m2 0h8m3 0h2m1 0h5m2 0h5M26 103.5h6m2 0h9m11 0h12m3 0h4m2 0h3m9 0h9m7 0h6m3 0h3m1 0h9m2 0h2m2 0h8M26 104.5h18m7 0h15m3 0h9m8 0h9m8 0h5m4 0h3m6 0h11m1 0h5m3 0h2M26 105.5h40m4 0h3m3 0h2m8 0h9m8 0h5m3 0h4m7 0h17m2 0h2M26 106.5h29m4 0h7m4 0h2m8 0h1m5 0h4m12 0h5m4 0h3m10 0h5m1 0h9M27 107.5h8m3 0h11m2 0h5m4 0h6m13 0h3m4 0h3m11 0h7m2 0h5m12 0h2m1 0h9M29 108.5h7m2 0h11m4 0h5m2 0h6m11 0h5m3 0h4m11 0h6m1 0h10m2 0h4m3 0h2m2 0h4M29 109.5h12m1 0h10m1 0h12m12 0h4m3 0h6m2 0h4m4 0h6m1 0h10m2 0h4m1 0h4M30 110.5h3m2 0h6m3 0h8m2 0h7m15 0h4m4 0h12m5 0h15m4 0h2M35 111.5h6m4 0h6m3 0h6m17 0h3m7 0h8m6 0h10m2 0h3M31 112.5h2m2 0h3m1 0h2m3 0h7m3 0h7m26 0h6m9 0h9m11 0h1M31 113.5h2m6 0h2m3 0h7m2 0h10m17 0h3m4 0h5m12 0h8m6 0h5M37 114.5h4m4 0h6m2 0h6m1 0h4m16 0h4m4 0h4m3 0h3m7 0h7m4 0h7M35 115.5h2m1 0h4m5 0h11m4 0h2m16 0h4m10 0h6m6 0h5m4 0h6M34 116.5h2m3 0h8m1 0h9m6 0h2m16 0h2m11 0h6m6 0h3m6 0h5M34 117.5h2m4 0h7m2 0h9m4 0h3m17 0h1m14 0h2m7 0h3m5 0h4M27 118.5h4m2 0h3m3 0h9m1 0h17m6 0h3m7 0h2m21 0h1m7 0h4M25 119.5h7m1 0h15m2 0h16m6 0h4m6 0h2m19 0h3m5 0h4M23 120.5h7m2 0h16m3 0h15m8 0h4m4 0h3m18 0h3m5 0h2M22 121.5h1m5 0h1m3 0h6m1 0h5m1 0h3m3 0h8m2 0h5m17 0h2m29 0h2M33 122.5h5m8 0h2m4 0h3m3 0h1m3 0h4m48 0h2M25 123.5h1m21 0h1m4 0h2m4 0h1m3 0h4m19 0h2m3 0h1M24 124.5h3m20 0h1m3 0h1m6 0h1m4 0h3m14 0h2m1 0h9M23 125.5h3m24 0h2m5 0h2m22 0h5m1 0h5M23 126.5h3m55 0h6M81 127.5h6M78 128.5h6m1 0h4M79 129.5h5m1 0h4M78 130.5h4m3 0h2M77 131.5h6m2 0h2M77 132.5h2m7 0h1"/>
<path stroke="#10ac10" d="M60 4.5h2M60 5.5h1M58 6.5h1m2 0h1m21 0h1M57 7.5h2m3 0h1m20 0h1M57 8.5h2m2 0h1m9 0h1m1 0h1m30 0h2M51 9.5h1m5 0h5m10 0h2m29 0h4M58 10.5h3m11 0h3m9 0h1m17 0h5M69 11.5h2m4 0h1m8 0h1m4 0h2m14 0h1M47 12.5h1m17 0h2m2 0h2m4 0h3m7 0h2m17 0h1M46 13.5h2m12 0h7m8 0h4m7 0h2m3 0h1m9 0h7M46 14.5h2m12 0h7m7 0h5m7 0h6m10 0h7m7 0h3M57 15.5h1m2 0h3m4 0h1m6 0h5m5 0h3m3 0h2m8 0h3m2 0h4m7 0h3M29 16.5h1m20 0h3m3 0h1m9 0h3m4 0h7m3 0h4m3 0h4m3 0h1m3 0h1m4 0h3m1 0h1m6 0h1M50 17.5h1m1 0h2m12 0h3m4 0h7m3 0h4m3 0h2m2 0h3m9 0h6m4 0h2M50 18.5h5m11 0h3m5 0h2m1 0h3m3 0h3m1 0h4m5 0h1m9 0h7m1 0h1m2 0h2M50 19.5h6m9 0h3m5 0h5m4 0h4m1 0h3m6 0h1m9 0h3m2 0h5m1 0h3m4 0h3M46 20.5h2m3 0h5m6 0h2m1 0h3m2 0h9m3 0h3m12 0h1m9 0h1m6 0h5m6 0h3M46 21.5h3m2 0h2m8 0h2m3 0h6m1 0h8m16 0h2m19 0h1m6 0h4m10 0h2M47 22.5h4m10 0h1m4 0h3m2 0h6m2 0h3m14 0h3m18 0h2m6 0h1m1 0h2m9 0h1M48 23.5h3m5 0h3m2 0h2m2 0h3m12 0h2m7 0h4m3 0h1m1 0h1m18 0h2m6 0h1m1 0h1m10 0h1M37 24.5h1m10 0h1m1 0h1m4 0h4m2 0h7m20 0h6m2 0h1m1 0h1m10 0h2m5 0h4m6 0h2m11 0h1M27 25.5h2m8 0h3m7 0h2m1 0h1m4 0h3m3 0h7m14 0h7m3 0h4m1 0h2m10 0h2m5 0h3M26 26.5h3m18 0h2m1 0h2m3 0h8m1 0h8m9 0h1m2 0h5m2 0h3m3 0h1m17 0h2M27 27.5h2m18 0h5m2 0h4m3 0h12m7 0h1m4 0h7m2 0h1m2 0h1m16 0h2M48 28.5h9m4 0h20m4 0h5m4 0h9m11 0h2M51 29.5h7m2 0h2m1 0h14m8 0h4m6 0h5m1 0h2m12 0h1m9 0h2M47 30.5h1m3 0h4m1 0h5m2 0h8m1 0h5m5 0h4m9 0h1m3 0h3m17 0h5m1 0h2M47 31.5h1m4 0h5m1 0h13m1 0h10m12 0h4m2 0h1m7 0h2m9 0h7M43 32.5h2m9 0h8m3 0h6m1 0h10m8 0h12m1 0h2m2 0h3m11 0h4M54 33.5h7m4 0h6m1 0h5m2 0h4m6 0h2m2 0h12m2 0h1m1 0h1m3 0h2m7 0h2M26 34.5h1m23 0h2m6 0h9m1 0h3m4 0h11m3 0h1m4 0h10m3 0h1m2 0h1m1 0h3m19 0h3M11 35.5h3m36 0h3m6 0h2m3 0h3m1 0h1m1 0h2m4 0h4m4 0h2m1 0h4m3 0h3m1 0h7m1 0h5m2 0h2m9 0h4m6 0h3M11 36.5h1m39 0h8m5 0h5m1 0h2m7 0h4m1 0h21m1 0h4m3 0h4m7 0h6m4 0h4M42 37.5h1m8 0h8m5 0h5m1 0h2m7 0h1m2 0h14m1 0h8m4 0h1m3 0h5m6 0h5m5 0h3M35 38.5h4m4 0h6m2 0h5m2 0h16m4 0h1m4 0h1m1 0h6m1 0h4m1 0h2m1 0h5m4 0h1m2 0h3m3 0h1m5 0h4m6 0h3M16 39.5h1m18 0h5m4 0h6m2 0h4m3 0h13m1 0h1m4 0h1m3 0h1m2 0h6m1 0h4m1 0h2m2 0h4m4 0h1m1 0h1m2 0h1m3 0h1m5 0h4M15 40.5h2m18 0h4m6 0h2m1 0h3m1 0h4m2 0h10m2 0h2m1 0h1m4 0h3m5 0h10m2 0h1m2 0h4m4 0h2m3 0h5m4 0h1m2 0h1m5 0h1M15 41.5h2m18 0h8m2 0h2m4 0h7m3 0h5m4 0h1m2 0h2m16 0h5m2 0h7m10 0h3m1 0h4m3 0h1m4 0h2M16 42.5h1m20 0h10m6 0h5m3 0h5m4 0h1m2 0h3m16 0h4m2 0h7m9 0h3m4 0h1m2 0h2M33 43.5h3m1 0h8m1 0h1m6 0h14m3 0h1m2 0h4m19 0h1m2 0h6m1 0h2m2 0h8m2 0h2m2 0h1M33 44.5h3m2 0h6m3 0h2m1 0h8m2 0h4m1 0h3m3 0h7m18 0h1m2 0h7m2 0h2m2 0h1m2 0h5m1 0h3M34 45.5h2m6 0h3m3 0h2m1 0h7m2 0h1m1 0h2m1 0h2m4 0h3m1 0h3m13 0h3m2 0h2m2 0h3m9 0h1m9 0h2m7 0h3M13 46.5h1m27 0h2m1 0h1m7 0h3m1 0h4m2 0h3m11 0h3m11 0h4m3 0h4m1 0h1m8 0h4m7 0h4m5 0h5M13 47.5h3m18 0h1m6 0h2m1 0h4m4 0h2m3 0h2m3 0h3m12 0h2m11 0h3m6 0h2m1 0h2m3 0h4m2 0h3m4 0h3m1 0h3m4 0h7m1 0h1M14 48.5h2m18 0h1m6 0h8m4 0h1m3 0h2m3 0h2m5 0h3m14 0h3m1 0h14m1 0h2m1 0h1m8 0h11m1 0h8m2 0h2M34 49.5h1m5 0h1m3 0h5m8 0h3m1 0h4m3 0h2m1 0h1m3 0h1m10 0h5m2 0h13m11 0h6m2 0h8m6 0h3M39 50.5h2m3 0h10m2 0h6m1 0h2m4 0h3m2 0h4m9 0h1m5 0h10m1 0h2m1 0h3m6 0h7m2 0h1m4 0h2m7 0h6M39 51.5h2m3 0h2m2 0h6m3 0h3m4 0h1m5 0h1m2 0h2m1 0h2m9 0h1m4 0h1m5 0h4m2 0h4m1 0h2m1 0h7m1 0h5m6 0h1m7 0h2m2 0h2M43 52.5h4m1 0h3m2 0h2m5 0h1m3 0h2m4 0h8m10 0h4m6 0h4m2 0h1m2 0h1m1 0h4m1 0h5m2 0h3m8 0h1m7 0h6M24 53.5h3m15 0h2m1 0h2m1 0h8m5 0h1m1 0h4m3 0h1m2 0h1m1 0h2m11 0h2m8 0h6m3 0h3m2 0h2m1 0h10m3 0h2m2 0h2m7 0h7M22 54.5h4m9 0h2m2 0h4m3 0h1m1 0h10m3 0h4m1 0h4m3 0h1m2 0h1m4 0h2m4 0h2m9 0h2m1 0h3m3 0h2m4 0h14m2 0h5m13 0h3M22 55.5h1m12 0h7m4 0h1m2 0h11m2 0h3m2 0h3m2 0h1m3 0h2m2 0h1m1 0h2m3 0h3m4 0h2m3 0h5m2 0h3m5 0h12m22 0h2M35 56.5h1m2 0h8m4 0h6m3 0h1m3 0h2m2 0h2m1 0h2m3 0h3m1 0h1m3 0h1m2 0h1m3 0h1m2 0h3m5 0h9m6 0h2m6 0h2M11 57.5h2m22 0h4m1 0h2m2 0h2m5 0h4m4 0h1m8 0h1m5 0h2m2 0h3m1 0h1m3 0h2m2 0h1m2 0h4m5 0h12m2 0h2m4 0h4M10 58.5h3m11 0h1m20 0h1m7 0h2m3 0h7m3 0h1m4 0h2m2 0h2m1 0h2m4 0h12m2 0h17m3 0h1m3 0h2m14 0h1M12 59.5h1m11 0h2m20 0h3m5 0h8m3 0h2m1 0h2m4 0h1m1 0h2m8 0h3m3 0h2m1 0h3m1 0h7m1 0h4m7 0h2m10 0h3m5 0h4M12 60.5h1m32 0h5m5 0h2m1 0h5m4 0h3m5 0h3m9 0h1m11 0h5m6 0h1m1 0h1m4 0h1m7 0h2m2 0h5m4 0h1M44 61.5h8m3 0h1m2 0h5m5 0h2m5 0h1m1 0h1m10 0h1m9 0h1m12 0h3m3 0h1m6 0h10M43 62.5h10m1 0h3m2 0h4m5 0h3m4 0h3m9 0h3m5 0h4m12 0h4m2 0h1m6 0h2m3 0h4M42 63.5h5m2 0h1m2 0h5m5 0h9m4 0h2m10 0h8m2 0h1m14 0h3m2 0h1m11 0h3m12 0h2M43 64.5h4m2 0h1m3 0h2m1 0h1m5 0h2m1 0h6m4 0h1m11 0h7m3 0h1m7 0h1m7 0h2m3 0h1m9 0h4m13 0h1M44 65.5h3m2 0h1m5 0h4m2 0h2m2 0h1m3 0h3m14 0h2m5 0h1m2 0h1m8 0h2m7 0h1m4 0h1m8 0h2m2 0h2M27 66.5h2m16 0h5m5 0h9m1 0h1m4 0h3m13 0h2m5 0h4m8 0h3m6 0h2m3 0h1m9 0h1m3 0h1M47 67.5h5m3 0h3m3 0h5m5 0h2m12 0h3m5 0h4m7 0h4m4 0h4m3 0h1m9 0h1m3 0h1M45 68.5h1m2 0h2m2 0h6m4 0h3m7 0h2m1 0h2m8 0h2m1 0h1m2 0h7m2 0h8m4 0h5m2 0h1m10 0h4M44 69.5h3m6 0h6m3 0h3m6 0h6m7 0h2m2 0h1m1 0h16m2 0h1m3 0h8m19 0h2M44 70.5h3m6 0h6m4 0h1m7 0h1m3 0h1m5 0h1m2 0h2m2 0h1m3 0h7m6 0h1m2 0h1m3 0h6m20 0h2m8 0h1M16 71.5h1m10 0h3m6 0h2m12 0h5m2 0h2m11 0h2m2 0h2m5 0h1m3 0h3m4 0h5m8 0h1m1 0h2m4 0h5m12 0h1M15 72.5h2m10 0h3m5 0h3m11 0h5m4 0h2m11 0h4m10 0h3m5 0h4m8 0h12M15 73.5h3m9 0h2m6 0h3m5 0h1m5 0h5m4 0h2m3 0h2m21 0h2m5 0h5m4 0h1m3 0h4m4 0h4m15 0h1M12 74.5h1m2 0h3m17 0h4m4 0h2m8 0h3m2 0h3m2 0h3m28 0h1m3 0h3m1 0h2m1 0h4m6 0h1m2 0h2m13 0h2M12 75.5h2m22 0h2m5 0h4m6 0h1m1 0h12m19 0h2m6 0h1m8 0h7m4 0h2m3 0h2m11 0h3M52 76.5h2m2 0h8m2 0h2m16 0h4m7 0h4m5 0h8m2 0h2m2 0h4m9 0h4m8 0h2M33 77.5h2m16 0h3m2 0h8m9 0h1m4 0h2m4 0h4m9 0h4m2 0h5m3 0h1m4 0h2m2 0h2m4 0h2m4 0h3m8 0h3M33 78.5h4m14 0h7m2 0h3m9 0h3m2 0h4m3 0h5m2 0h2m5 0h8m15 0h1m3 0h3m16 0h3M32 79.5h6m13 0h7m2 0h2m10 0h4m1 0h10m3 0h4m4 0h6m8 0h1m7 0h3m2 0h1m1 0h1m16 0h3M32 80.5h4m2 0h1m2 0h2m11 0h1m3 0h2m12 0h4m1 0h9m5 0h2m1 0h1m3 0h1m1 0h2m10 0h1m4 0h3m2 0h2m1 0h1m1 0h1m17 0h2M31 81.5h4m4 0h3m1 0h1m5 0h2m3 0h1m12 0h1m3 0h4m3 0h3m4 0h1m6 0h3m2 0h1m2 0h1m11 0h2m2 0h3m4 0h1m2 0h1m13 0h1M30 82.5h5m3 0h1m5 0h1m3 0h7m11 0h3m2 0h3m4 0h3m4 0h1m7 0h1m3 0h4m4 0h3m4 0h2m3 0h2m4 0h1m17 0h2M29 83.5h8m1 0h2m4 0h1m2 0h2m16 0h3m4 0h1m6 0h7m6 0h2m4 0h1m4 0h2m2 0h2m1 0h4m4 0h1m3 0h1m7 0h2m10 0h2M15 84.5h1m13 0h4m7 0h2m2 0h2m2 0h2m15 0h3m11 0h4m3 0h2m15 0h1m4 0h6m3 0h2m10 0h3M31 85.5h1m10 0h1m5 0h3m11 0h1m4 0h2m9 0h2m2 0h1m3 0h4m12 0h1m4 0h8m2 0h1m4 0h1m6 0h3m3 0h1M31 86.5h1m10 0h1m5 0h1m1 0h1m16 0h5m5 0h1m4 0h1m4 0h1m1 0h1m5 0h1m6 0h1m3 0h8m3 0h1m4 0h1m7 0h2M39 87.5h2m3 0h2m1 0h1m3 0h4m12 0h2m1 0h2m4 0h2m4 0h1m4 0h4m2 0h4m5 0h1m3 0h1m4 0h3m3 0h3m1 0h2m7 0h2m10 0h2M38 88.5h2m4 0h4m4 0h3m1 0h4m1 0h3m4 0h4m10 0h1m6 0h9m4 0h2m1 0h1m6 0h1m3 0h6m20 0h4m1 0h1M30 89.5h1m7 0h2m4 0h4m4 0h2m2 0h2m1 0h5m6 0h2m4 0h1m4 0h1m7 0h11m3 0h2m7 0h2m1 0h1m2 0h2m1 0h7m14 0h6M15 90.5h1m14 0h2m7 0h3m1 0h2m8 0h1m2 0h7m7 0h6m5 0h1m6 0h8m1 0h5m10 0h14m17 0h2m1 0h2M16 91.5h2m13 0h4m6 0h3m8 0h2m4 0h4m8 0h2m8 0h2m6 0h8m1 0h1m4 0h1m4 0h2m3 0h3m2 0h4m1 0h4m2 0h1m14 0h1M32 92.5h3m3 0h4m9 0h4m1 0h2m11 0h3m7 0h3m5 0h11m4 0h1m3 0h4m2 0h2m4 0h1m3 0h1m1 0h1m3 0h1m14 0h1m2 0h1M37 93.5h5m5 0h2m3 0h3m2 0h2m9 0h2m1 0h2m6 0h2m7 0h6m2 0h7m3 0h4m2 0h1m5 0h1m3 0h3m3 0h2m13 0h1m2 0h1M37 94.5h5m16 0h2m9 0h1m1 0h2m1 0h1m5 0h1m10 0h1m5 0h4m4 0h5m2 0h1m5 0h2m2 0h8m14 0h3M36 95.5h6m17 0h2m3 0h2m4 0h2m8 0h1m10 0h1m5 0h2m3 0h7m9 0h3m1 0h1m13 0h2M27 96.5h3m6 0h2m2 0h2m17 0h8m3 0h1m10 0h1m9 0h1m6 0h1m2 0h2m1 0h6m9 0h4m7 0h1m6 0h1m2 0h1M27 97.5h3m7 0h4m9 0h1m7 0h7m2 0h3m6 0h2m4 0h3m7 0h1m5 0h1m2 0h1m3 0h5m9 0h4m7 0h2M28 98.5h3m6 0h4m8 0h2m6 0h2m2 0h4m2 0h3m6 0h3m5 0h1m12 0h1m3 0h1m4 0h4m9 0h4M29 99.5h3m6 0h1m1 0h4m5 0h3m5 0h2m5 0h3m3 0h2m4 0h3m5 0h1m4 0h2m6 0h2m2 0h2m4 0h4m8 0h3M29 100.5h3m5 0h2m3 0h3m4 0h10m12 0h2m3 0h3m4 0h1m4 0h2m6 0h4m2 0h1m4 0h4m7 0h1M30 101.5h2m4 0h7m1 0h1m4 0h4m2 0h4m1 0h6m2 0h3m1 0h2m2 0h2m4 0h1m5 0h1m7 0h7m5 0h3m3 0h1m9 0h3M37 102.5h1m1 0h2m1 0h7m5 0h2m2 0h3m4 0h4m4 0h2m2 0h1m2 0h2m4 0h2m9 0h6m6 0h2m3 0h2m8 0h1m1 0h1M32 103.5h2m9 0h5m3 0h3m12 0h3m4 0h2m3 0h2m5 0h2m9 0h7m6 0h3m3 0h1m9 0h2M44 104.5h7m15 0h3m9 0h2m4 0h2m9 0h2m1 0h5m5 0h2m1 0h1m3 0h6m11 0h1M66 105.5h4m3 0h3m2 0h4m2 0h2m9 0h1m2 0h5m5 0h3m4 0h4m2 0h1M55 106.5h4m7 0h4m2 0h2m1 0h5m1 0h2m1 0h2m4 0h6m2 0h4m5 0h4m3 0h4m4 0h2M37 107.5h1m11 0h2m5 0h4m6 0h6m4 0h2m4 0h4m3 0h2m1 0h4m3 0h1m7 0h2m5 0h12M37 108.5h1m11 0h4m5 0h2m6 0h3m7 0h1m5 0h3m4 0h7m3 0h1m6 0h1m10 0h2m4 0h3M41 109.5h1m10 0h1m12 0h3m8 0h1m4 0h3m6 0h2m4 0h2m1 0h1m6 0h1m10 0h2M29 110.5h1m11 0h3m8 0h2m7 0h7m12 0h4m12 0h2m2 0h1m15 0h4M41 111.5h4m6 0h3m6 0h9m7 0h1m3 0h7m8 0h3m13 0h2m3 0h2m1 0h4M41 112.5h3m7 0h3m7 0h8m7 0h11m6 0h5m3 0h1m9 0h11M41 113.5h3m7 0h2m10 0h7m8 0h2m3 0h2m1 0h1m5 0h6m3 0h3m8 0h6M41 114.5h4m6 0h2m6 0h1m4 0h2m2 0h2m9 0h1m4 0h1m2 0h1m4 0h3m3 0h7m7 0h1m1 0h2M37 115.5h1m4 0h5m11 0h4m2 0h2m3 0h2m8 0h1m4 0h1m3 0h6m6 0h2m2 0h2m5 0h2m1 0h1M36 116.5h3m8 0h1m9 0h6m2 0h1m3 0h3m8 0h1m2 0h1m9 0h1m6 0h1m3 0h2m3 0h6M36 117.5h4m7 0h2m9 0h4m3 0h1m5 0h5m5 0h1m1 0h1m3 0h1m5 0h4m2 0h1m4 0h2m3 0h2m1 0h2M36 118.5h3m9 0h1m22 0h1m3 0h3m3 0h1m2 0h6m2 0h3m1 0h4m3 0h2M48 119.5h2m21 0h1m4 0h6m2 0h11m1 0h3m1 0h3M48 120.5h3m27 0h4m3 0h13M23 121.5h2m1 0h2m20 0h1m1 0h1m8 0h2m14 0h5m1 0h2m2 0h6M22 122.5h5m18 0h1m2 0h1m2 0h1m3 0h3m1 0h3m13 0h4m3 0h8M22 123.5h3m1 0h1m19 0h1m1 0h1m2 0h1m2 0h4m19 0h8m2 0h3M23 124.5h1m22 0h1m3 0h1m5 0h2m20 0h2m2 0h1M26 125.5h1M84 128.5h1M79 132.5h1m1 0h5"/>
<path stroke="#168c14" d="M59 8.5h2M102 11.5h2M102 12.5h2M87 15.5h3m5 0h2M87 16.5h1m1 0h1m5 0h2M51 17.5h1m35 0h3M64 20.5h1M63 21.5h3m6 0h1M62 22.5h4m60 0h1m12 0h1M63 23.5h2m32 0h1m28 0h1m12 0h1M49 24.5h1m47 0h1M49 25.5h1m39 0h3m4 0h1M49 26.5h1m32 0h2m5 0h2m3 0h3M58 27.5h3m20 0h4m10 0h2M57 28.5h4m20 0h1m2 0h1M58 29.5h2m17 0h8m15 0h1M71 30.5h1m5 0h5m14 0h3M57 31.5h1m13 0h1M62 32.5h3m6 0h1M61 33.5h4m6 0h1m19 0h2m15 0h1M67 34.5h1m3 0h4m15 0h4m14 0h2M67 35.5h1m4 0h4m4 0h4m7 0h3m3 0h1m13 0h2M72 36.5h7m4 0h1m26 0h3M72 37.5h7m31 0h3M56 38.5h2m16 0h3m7 0h1m14 0h1m10 0h2m3 0h3M56 39.5h3m15 0h4m5 0h2m14 0h2m9 0h1m4 0h3M47 40.5h1m8 0h2m10 0h2m4 0h4m3 0h5m13 0h2m23 0h2M47 41.5h4m15 0h4m5 0h3m6 0h7m27 0h1m4 0h3M47 42.5h2m2 0h2m13 0h4m6 0h2m5 0h3m1 0h5m25 0h2m3 0h2M47 43.5h2m1 0h3m14 0h3m7 0h1m4 0h8m1 0h5m22 0h2m2 0h2M49 44.5h1m8 0h2m4 0h1m3 0h1m1 0h1m7 0h1m3 0h4m1 0h9m10 0h2m2 0h2M58 45.5h2m4 0h1m2 0h1m2 0h1m3 0h1m3 0h1m2 0h4m2 0h4m3 0h2m7 0h2m3 0h4M43 46.5h1m21 0h2m3 0h4m1 0h1m3 0h6m1 0h4m4 0h3m6 0h1m4 0h3M43 47.5h1m21 0h2m2 0h3m3 0h2m2 0h1m2 0h8m3 0h6m5 0h3m16 0h1M64 48.5h5m3 0h1m2 0h5m1 0h5m3 0h1m14 0h1M65 49.5h3m4 0h3m1 0h10M62 50.5h1m2 0h4m3 0h2m4 0h2m1 0h3m2 0h1m16 0h1m22 0h4M60 51.5h4m1 0h5m1 0h2m5 0h1m3 0h2m9 0h5m4 0h2m4 0h1m10 0h1m5 0h1m3 0h2m10 0h1M51 52.5h2m8 0h3m2 0h4m8 0h1m2 0h3m3 0h1m4 0h2m3 0h1m4 0h2m4 0h1m4 0h1m5 0h2m3 0h1m3 0h4M44 53.5h1m17 0h1m4 0h3m4 0h1m2 0h1m2 0h4m3 0h1m2 0h2m1 0h2m2 0h1m16 0h1m10 0h3m2 0h2M43 54.5h3m28 0h2m1 0h4m2 0h1m2 0h1m2 0h2m2 0h3m1 0h1M42 55.5h4m27 0h3m2 0h2m4 0h3m3 0h1m2 0h1m2 0h3M36 56.5h2m18 0h3m10 0h1m2 0h3m3 0h1m5 0h2m5 0h2m3 0h5m17 0h6M55 57.5h4m10 0h5m2 0h2m5 0h3m5 0h2m4 0h5m16 0h4M55 58.5h3m11 0h4m2 0h2m2 0h1m2 0h4m12 0h2m17 0h3M62 59.5h3m5 0h4m1 0h1m2 0h4m3 0h1m3 0h3m2 0h1m3 0h1m7 0h1m4 0h7M63 60.5h1m2 0h1m3 0h5m3 0h1m6 0h2m1 0h11m5 0h2m2 0h2m1 0h1m1 0h2m1 0h1M63 61.5h1m3 0h1m2 0h5m3 0h1m6 0h3m1 0h9m1 0h6m4 0h2m3 0h3M63 62.5h2m1 0h2m3 0h4m3 0h1m6 0h2m3 0h5m4 0h7m4 0h1m4 0h2M50 63.5h2m19 0h4m2 0h1m5 0h4m11 0h8m4 0h2m3 0h2M50 64.5h3m18 0h4m1 0h2m5 0h4m11 0h1m1 0h5m1 0h2m3 0h2m2 0h3M50 65.5h5m11 0h3m3 0h5m7 0h2m2 0h1m1 0h3m4 0h1m6 0h1m2 0h3m2 0h2m1 0h4m11 0h2M50 66.5h5m11 0h1m2 0h1m3 0h4m4 0h1m2 0h2m2 0h1m2 0h2m4 0h1m5 0h2m3 0h1m2 0h3m2 0h3m11 0h1m1 0h1M52 67.5h3m3 0h3m9 0h1m2 0h10m1 0h1m3 0h1m2 0h2m4 0h7m4 0h1m2 0h1m4 0h3m11 0h3M58 68.5h4m3 0h1m5 0h1m2 0h1m2 0h8m4 0h2m7 0h2m8 0h2m1 0h1m5 0h2M59 69.5h1m1 0h1m3 0h1m4 0h1m6 0h7m5 0h1m19 0h3M59 70.5h1m2 0h1m1 0h2m3 0h2m5 0h5m1 0h2m5 0h3m7 0h6m4 0h3M55 71.5h2m2 0h1m2 0h4m3 0h1m6 0h1m2 0h2m1 0h3m3 0h2m1 0h1m5 0h2m5 0h1m4 0h4M54 72.5h4m2 0h6m3 0h2m4 0h1m3 0h6m3 0h2m2 0h1m4 0h1m4 0h3M54 73.5h4m2 0h3m2 0h2m3 0h5m3 0h4m1 0h3m2 0h2m2 0h1m5 0h4m1 0h3M56 74.5h2m3 0h2m3 0h2m3 0h3m4 0h4m2 0h5m3 0h2m10 0h1m11 0h2M67 75.5h2m4 0h2m3 0h4m1 0h3m2 0h1m4 0h1m22 0h3M64 76.5h2m2 0h2m2 0h3m3 0h6m4 0h1m4 0h2m21 0h2M64 77.5h9m1 0h1m2 0h1m2 0h4m4 0h5m2 0h2m11 0h3M63 78.5h1m4 0h4m3 0h2m4 0h3m5 0h2m2 0h1m2 0h2m8 0h3m2 0h1M62 79.5h1m5 0h4m4 0h1m10 0h3m4 0h4m6 0h5m1 0h2m14 0h1M36 80.5h2m17 0h3m2 0h2m5 0h5m4 0h1m9 0h5m4 0h3m4 0h4m2 0h4m8 0h2m4 0h1M35 81.5h4m3 0h1m12 0h1m10 0h1m1 0h3m4 0h3m8 0h6m3 0h2m4 0h1m2 0h8m7 0h4M35 82.5h3m1 0h5m11 0h1m9 0h1m3 0h2m3 0h1m2 0h1m8 0h7m1 0h3m4 0h1m1 0h2m3 0h4m7 0h1m2 0h1M40 83.5h4m5 0h6m6 0h2m1 0h1m3 0h4m1 0h2m2 0h2m7 0h6m2 0h4m1 0h4m6 0h1m9 0h1m1 0h1M42 84.5h2m2 0h2m2 0h1m9 0h5m3 0h6m2 0h3m4 0h3m2 0h11m3 0h1m16 0h1M43 85.5h3m1 0h1m3 0h1m1 0h1m7 0h1m1 0h4m2 0h4m3 0h2m12 0h8m20 0h4M43 86.5h5m3 0h5m1 0h2m2 0h6m5 0h1m3 0h1m9 0h1m3 0h5m1 0h2m20 0h4M41 87.5h3m2 0h1m8 0h12m5 0h1m13 0h1m4 0h2m4 0h3m1 0h1m5 0h4m9 0h1M40 88.5h4m11 0h1m4 0h1m3 0h4m4 0h1m3 0h1m6 0h1m2 0h3m9 0h4m4 0h6M40 89.5h4m10 0h2m8 0h2m1 0h3m2 0h1m2 0h1m6 0h7m11 0h3m2 0h7m4 0h2M42 90.5h1m11 0h2m7 0h2m4 0h1m12 0h6m8 0h1m5 0h10m14 0h2m17 0h1M54 91.5h4m4 0h2m5 0h1m12 0h6m8 0h1m6 0h4m2 0h3m9 0h1m4 0h2m16 0h2M55 92.5h1m2 0h4m6 0h1m13 0h3m1 0h1m16 0h3m4 0h2m7 0h3m3 0h1m1 0h1m16 0h2M59 93.5h3m2 0h2m1 0h1m2 0h1m10 0h3m3 0h1m15 0h3m4 0h2m7 0h3m3 0h3M60 94.5h2m1 0h6m1 0h1m10 0h1m6 0h3m10 0h4m5 0h2m8 0h2M61 95.5h3m2 0h4m11 0h1m8 0h1m8 0h3m7 0h2m10 0h1M38 96.5h1m28 0h3m12 0h3m14 0h2M85 97.5h1m13 0h2M59 98.5h2m24 0h1m2 0h3m7 0h3M39 99.5h1m19 0h5m3 0h3m17 0h2m10 0h2M39 100.5h3m17 0h12m13 0h1m2 0h1m12 0h2M43 101.5h1m9 0h2m4 0h1m6 0h2m15 0h5M49 102.5h5m28 0h4m39 0h1M48 103.5h3m29 0h5M80 104.5h4m13 0h1m12 0h1M82 105.5h2m12 0h2m21 0h2M74 106.5h1m8 0h1m12 0h2m20 0h4M72 107.5h4m15 0h1m4 0h3M69 108.5h4m2 0h1m20 0h3M68 109.5h2m5 0h1m22 0h1M68 110.5h1m4 0h3m22 0h2M69 111.5h1m2 0h4m22 0h3M69 112.5h1m2 0h4m24 0h1M70 113.5h8m7 0h1m12 0h3M66 114.5h2m2 0h9m6 0h2m26 0h1M66 115.5h3m2 0h8m6 0h3m14 0h2m9 0h1M66 116.5h3m3 0h8m4 0h9m8 0h3M76 117.5h5m3 0h3m1 0h2m1 0h2m8 0h3M78 118.5h3m9 0h2m3 0h1m5 0h2M95 119.5h1M49 121.5h1m30 0h1M49 122.5h2m28 0h3M49 123.5h2"/>
<path stroke="#3a7016" d="M88 16.5h1M82 28.5h2M78 41.5h6M49 42.5h2m27 0h5m3 0h1M49 43.5h1m28 0h4m8 0h1M69 44.5h1m9 0h3m4 0h1M68 45.5h2m9 0h2m4 0h2m18 0h3M67 46.5h3m4 0h1m10 0h1m18 0h4M67 47.5h2m3 0h3m5 0h2M73 48.5h2m5 0h1M80 50.5h1m3 0h2M79 51.5h3m2 0h3m39 0h3M79 52.5h2m3 0h3m7 0h3m28 0h3M78 53.5h2m4 0h3m5 0h1m2 0h2M84 54.5h2m5 0h2m3 0h1M91 55.5h2M82 59.5h3M64 60.5h2m13 0h6m21 0h2m7 0h1M64 61.5h3m12 0h6m20 0h4M65 62.5h1m13 0h6m21 0h4M78 63.5h5m23 0h4M78 64.5h5m16 0h1m8 0h3M77 65.5h7m5 0h1m8 0h6m6 0h2M67 66.5h2m8 0h4m1 0h2m5 0h2m7 0h5m6 0h2m20 0h1M66 67.5h4m13 0h1m5 0h2m18 0h2M66 68.5h5m39 0h1M60 69.5h1m5 0h4M60 70.5h2m4 0h3M60 71.5h2m4 0h3m8 0h2m11 0h1m8 0h5M66 72.5h3m7 0h3m11 0h2m6 0h4M67 73.5h3m5 0h3m4 0h1m7 0h2M68 74.5h3m3 0h4m4 0h2m5 0h3M69 75.5h4m2 0h3m4 0h1m6 0h4M70 76.5h2m3 0h3m11 0h4M75 77.5h2m16 0h2M64 78.5h4m26 0h2m13 0h2M63 79.5h5m41 0h1M62 80.5h5m39 0h2M56 81.5h10m36 0h2M56 82.5h9m10 0h2m25 0h1m17 0h2M55 83.5h6m2 0h1m11 0h2m43 0h1M51 84.5h9m14 0h2m23 0h3M46 85.5h1m5 0h1m1 0h7m12 0h3m7 0h3m12 0h4M56 86.5h1m2 0h2m12 0h3m7 0h3m12 0h4M73 87.5h3m7 0h3m14 0h1M73 88.5h3m8 0h2M66 89.5h1m6 0h2M65 90.5h4M64 91.5h5M62 92.5h6m17 0h1m40 0h1M62 93.5h2m2 0h1m17 0h3M62 94.5h1m19 0h6M82 95.5h8M85 96.5h6M86 97.5h4M86 98.5h2M85 99.5h2M85 100.5h2M73 108.5h2M70 109.5h5M69 110.5h4M70 111.5h2M70 112.5h2m26 0h2M90 117.5h1"/>
</g>
<circle cx="957" cy="778" r="159" fill="url(#head)"/>
<defs><clipPath id="headclip"><circle cx="957" cy="778" r="158"/></clipPath><filter id="mottle" x="0" y="0" width="100%" height="100%" color-interpolation-filters="sRGB"><feTurbulence type="fractalNoise" baseFrequency="0.09" numOctaves="2" seed="4"/><feColorMatrix type="matrix" values="0 0 0 0 0.15  0 0 0 0 0.75  0 0 0 0 0.98  0 0 0 -3.5 1.75"/></filter><filter id="mottle2" x="0" y="0" width="100%" height="100%" color-interpolation-filters="sRGB"><feTurbulence type="fractalNoise" baseFrequency="0.09" numOctaves="2" seed="9"/><feColorMatrix type="matrix" values="0 0 0 0 0.3  0 0 0 0 0.1  0 0 0 0 0.9  0 0 0 -3.5 1.75"/></filter></defs>
<g clip-path="url(#headclip)"><rect x="798" y="619" width="320" height="320" filter="url(#mottle)" opacity="0.55"/><rect x="798" y="619" width="320" height="320" filter="url(#mottle2)" opacity="0.4"/></g>
<path d="M957,619 A159,159 0 0,0 957,937" fill="none" stroke="#303040" stroke-width="3.5"/>
<path d="M957,619 A159,159 0 0,1 957,937" fill="none" stroke="#b07040" stroke-width="3.5"/>
<line x1="920.0" y1="778.0" x2="994.0" y2="778.0" stroke="#a8a0a0" stroke-width="4" />
<line x1="957.0" y1="741.0" x2="957.0" y2="815.0" stroke="#a8a0a0" stroke-width="4" />
<rect x="783.0" y="546.0" width="802.0" height="4.0" fill="#101010" />
<rect x="783.0" y="1155.0" width="802.0" height="4.0" fill="#101010" />
<rect x="781.0" y="546.0" width="4.0" height="613.0" fill="#101010" />
<rect x="1581.0" y="546.0" width="4.0" height="613.0" fill="#101010" />
<rect x="783.0" y="1005.0" width="802.0" height="4.0" fill="#101010" />
<rect x="796.5" y="1005.0" width="4.0" height="154.0" fill="#101010" />
<rect x="1566.0" y="1005.0" width="4.0" height="154.0" fill="#101010" />
<rect x="1424.0" y="617.0" width="4.0" height="321.0" fill="#101010" />
<rect x="784.0" y="547.5" width="24.0" height="24.0" fill="#101010" />
<rect x="1169.0" y="547.5" width="24.0" height="24.0" fill="#101010" />
<rect x="1557.0" y="547.5" width="24.0" height="24.0" fill="#101010" />
<rect x="784.0" y="838.0" width="24.0" height="24.0" fill="#101010" />
<rect x="1557.0" y="838.0" width="24.0" height="24.0" fill="#101010" />
<rect x="1169.0" y="995.0" width="24.0" height="24.0" fill="#101010" />
<rect x="784.0" y="1132.0" width="24.0" height="24.0" fill="#101010" />
<rect x="1169.0" y="1132.0" width="24.0" height="24.0" fill="#101010" />
<rect x="1557.0" y="1132.0" width="24.0" height="24.0" fill="#101010" />
<rect x="796.5" y="1134.0" width="4.0" height="16.0" fill="#f4f0f4" />
<rect x="1566.0" y="1134.0" width="4.0" height="16.0" fill="#f4f0f4" />
</svg>
<rect x="1882.0" y="422.0" width="53.0" height="1673.0" fill="#f4f4f4" />
<defs><pattern id="dots" width="7" height="7" patternUnits="userSpaceOnUse"><rect width="7" height="7" fill="#f0f0f0"/><rect width="3.5" height="3.5" fill="#ffffff"/><rect x="3.5" y="3.5" width="3.5" height="3.5" fill="#ffffff"/></pattern></defs>
<rect x="1882.0" y="422.0" width="53.0" height="1673.0" fill="url(#dots)" />
<rect x="1882.0" y="422.0" width="53.0" height="53.0" fill="#646464" />
<rect x="1882.0" y="422.0" width="49.0" height="49.0" fill="#a0a0a0" />
<rect x="1882.0" y="422.0" width="46.0" height="46.0" fill="#ffffff" />
<rect x="1886.0" y="426.0" width="42.0" height="42.0" fill="#f0f0f0" />
<polygon points="1896,454 1921,454 1908.5,440" fill="#606060"/>
<rect x="1885.0" y="504.0" width="50.0" height="1540.0" fill="#646464" />
<rect x="1885.0" y="504.0" width="47.0" height="1536.0" fill="#a0a0a0" />
<rect x="1885.0" y="504.0" width="43.5" height="1533.0" fill="#ffffff" />
<rect x="1889.5" y="508.0" width="39.0" height="1529.0" fill="#f0f0f0" />
<rect x="1971.0" y="330.0" width="1316.0" height="1765.0" fill="#646464" />
<rect x="1971.0" y="330.0" width="1314.0" height="1765.0" fill="#f0f0f0" />
<rect x="1973.0" y="330.0" width="5.0" height="1765.0" fill="#ffffff" />
<rect x="1971.0" y="330.0" width="1314.0" height="3.0" fill="#ffffff" />
<rect x="1988.7" y="333.0" width="1283.3" height="71.0" fill="#3a98f2" />
<rect x="1995.5" y="340.0" width="56.5" height="56.6" fill="#fbfdfd" />
<text x="2070.0" y="382.0" font-size="41.93" fill="#ffffff" textLength="134.5" lengthAdjust="spacingAndGlyphs" >Profiles</text>
<rect x="3074.0" y="344.0" width="55.0" height="48.0" fill="#5a9ad8" />
<rect x="3074.0" y="344.0" width="51.0" height="44.0" fill="#f4f8fc" />
<rect x="3078.0" y="348.0" width="47.0" height="40.0" fill="#eef3f8" />
<rect x="3141.0" y="344.0" width="55.0" height="48.0" fill="#5a9ad8" />
<rect x="3141.0" y="344.0" width="51.0" height="44.0" fill="#f4f8fc" />
<rect x="3145.0" y="348.0" width="47.0" height="40.0" fill="#eef3f8" />
<rect x="3208.0" y="344.0" width="57.0" height="48.0" fill="#5a9ad8" />
<rect x="3208.0" y="344.0" width="53.0" height="44.0" fill="#f4f8fc" />
<rect x="3212.0" y="348.0" width="49.0" height="40.0" fill="#eef3f8" />
<rect x="3087.0" y="371.0" width="29.0" height="7.0" fill="#000000" />
<rect x="3154.0" y="355.0" width="30.0" height="26.0" fill="#000000" />
<rect x="3158.0" y="361.0" width="22.0" height="16.0" fill="#eef3f8" />
<line x1="3224.0" y1="356.0" x2="3250.0" y2="380.0" stroke="#000000" stroke-width="7.5" />
<line x1="3250.0" y1="356.0" x2="3224.0" y2="380.0" stroke="#000000" stroke-width="7.5" />
<rect x="1988.7" y="404.0" width="1063.6" height="1431.0" fill="#a8a29c" />
<rect x="1992.0" y="407.5" width="1060.3" height="1427.5" fill="#6c6660" />
<rect x="1995.0" y="411.0" width="1057.3" height="1424.0" fill="#000000" />
<rect x="3052.3" y="404.0" width="3.7" height="1438.0" fill="#ffffff" />
<rect x="1989.0" y="1857.0" width="1065.0" height="238.0" fill="#a0a0a0" />
<rect x="1992.0" y="1860.5" width="1062.0" height="234.5" fill="#646464" />
<rect x="1995.0" y="1863.5" width="1059.0" height="231.5" fill="#ffffff" />
<rect x="1989.0" y="1835.0" width="1065.0" height="7.0" fill="#ffffff" />
<rect x="2176.0" y="747.0" width="4.0" height="756.0" fill="#8c8c8c" />
<rect x="2975.0" y="747.0" width="4.0" height="756.0" fill="#8c8c8c" />
<rect x="2157.0" y="745.0" width="835.0" height="4.0" fill="#8c8c8c" />
<rect x="2157.0" y="1500.0" width="835.0" height="4.0" fill="#8c8c8c" />
<rect x="2176.0" y="726.0" width="4.0" height="21.0" fill="#8c8c8c" />
<rect x="2176.0" y="1502.0" width="4.0" height="16.0" fill="#8c8c8c" />
<rect x="2247.1" y="726.0" width="4.0" height="21.0" fill="#8c8c8c" />
<rect x="2247.1" y="1502.0" width="4.0" height="16.0" fill="#8c8c8c" />
<rect x="2318.1" y="726.0" width="4.0" height="21.0" fill="#8c8c8c" />
<rect x="2318.1" y="1502.0" width="4.0" height="16.0" fill="#8c8c8c" />
<rect x="2389.2" y="726.0" width="4.0" height="21.0" fill="#8c8c8c" />
<rect x="2389.2" y="1502.0" width="4.0" height="16.0" fill="#8c8c8c" />
<rect x="2460.2" y="726.0" width="4.0" height="21.0" fill="#8c8c8c" />
<rect x="2460.2" y="1502.0" width="4.0" height="16.0" fill="#8c8c8c" />
<rect x="2531.2" y="726.0" width="4.0" height="21.0" fill="#8c8c8c" />
<rect x="2531.2" y="1502.0" width="4.0" height="16.0" fill="#8c8c8c" />
<rect x="2602.3" y="726.0" width="4.0" height="21.0" fill="#8c8c8c" />
<rect x="2602.3" y="1502.0" width="4.0" height="16.0" fill="#8c8c8c" />
<rect x="2673.3" y="726.0" width="4.0" height="21.0" fill="#8c8c8c" />
<rect x="2673.3" y="1502.0" width="4.0" height="16.0" fill="#8c8c8c" />
<rect x="2744.4" y="726.0" width="4.0" height="21.0" fill="#8c8c8c" />
<rect x="2744.4" y="1502.0" width="4.0" height="16.0" fill="#8c8c8c" />
<rect x="2815.4" y="726.0" width="4.0" height="21.0" fill="#8c8c8c" />
<rect x="2815.4" y="1502.0" width="4.0" height="16.0" fill="#8c8c8c" />
<rect x="2886.5" y="726.0" width="4.0" height="21.0" fill="#8c8c8c" />
<rect x="2886.5" y="1502.0" width="4.0" height="16.0" fill="#8c8c8c" />
<rect x="2957.6" y="726.0" width="4.0" height="21.0" fill="#8c8c8c" />
<rect x="2957.6" y="1502.0" width="4.0" height="16.0" fill="#8c8c8c" />
<rect x="2157.0" y="1500.0" width="21.0" height="4.0" fill="#8c8c8c" />
<rect x="2977.0" y="1500.0" width="15.0" height="4.0" fill="#8c8c8c" />
<rect x="2157.0" y="1311.2" width="21.0" height="4.0" fill="#8c8c8c" />
<rect x="2977.0" y="1311.2" width="15.0" height="4.0" fill="#8c8c8c" />
<rect x="2157.0" y="1122.5" width="21.0" height="4.0" fill="#8c8c8c" />
<rect x="2977.0" y="1122.5" width="15.0" height="4.0" fill="#8c8c8c" />
<rect x="2157.0" y="933.8" width="21.0" height="4.0" fill="#8c8c8c" />
<rect x="2977.0" y="933.8" width="15.0" height="4.0" fill="#8c8c8c" />
<rect x="2157.0" y="745.0" width="21.0" height="4.0" fill="#8c8c8c" />
<rect x="2977.0" y="745.0" width="15.0" height="4.0" fill="#8c8c8c" />
<text x="2073.0" y="763.0" font-size="43.60" fill="#8a8a8a" textLength="14.0" lengthAdjust="spacingAndGlyphs" >1</text>
<text x="2069.0" y="951.0" font-size="42.98" fill="#8a8a8a" textLength="76.0" lengthAdjust="spacingAndGlyphs" >0.75</text>
<text x="2069.0" y="1139.5" font-size="42.98" fill="#8a8a8a" textLength="55.0" lengthAdjust="spacingAndGlyphs" >0.5</text>
<text x="2069.0" y="1328.0" font-size="42.98" fill="#8a8a8a" textLength="76.0" lengthAdjust="spacingAndGlyphs" >0.25</text>
<text x="2069.0" y="1517.0" font-size="42.98" fill="#8a8a8a" textLength="21.0" lengthAdjust="spacingAndGlyphs" >0</text>
<text x="2141.0" y="1560.0" font-size="42.98" fill="#8a8a8a" textLength="20.5" lengthAdjust="spacingAndGlyphs" >0</text>
<text x="2283.1" y="1560.0" font-size="42.98" fill="#8a8a8a" textLength="43.5" lengthAdjust="spacingAndGlyphs" >40</text>
<text x="2425.2" y="1560.0" font-size="42.98" fill="#8a8a8a" textLength="43.5" lengthAdjust="spacingAndGlyphs" >80</text>
<text x="2567.3" y="1560.0" font-size="42.98" fill="#8a8a8a" textLength="63.0" lengthAdjust="spacingAndGlyphs" >120</text>
<text x="2709.4" y="1560.0" font-size="42.98" fill="#8a8a8a" textLength="63.0" lengthAdjust="spacingAndGlyphs" >160</text>
<text x="2851.5" y="1560.0" font-size="42.98" fill="#8a8a8a" textLength="63.0" lengthAdjust="spacingAndGlyphs" >200</text>
<polyline points="2178.0,1363.0 2188.0,1376.0 2196.0,1366.0 2208.7,1383.7 2221.4,1371.0 2234.0,1373.5 2245.7,1380.0 2254.6,1371.0 2267.0,1363.0 2277.6,1373.5 2293.0,1368.0 2305.6,1363.0 2318.0,1373.5 2333.7,1363.0 2346.4,1377.3 2364.0,1358.0 2392.0,1363.0 2415.0,1353.0 2425.5,1373.5 2438.0,1363.0 2447.0,1376.0 2458.7,1355.6 2471.4,1368.0 2489.0,1359.4 2497.0,1353.0 2512.0,1366.0 2522.4,1356.0 2539.0,1362.0 2556.0,1352.0 2570.0,1366.0 2587.0,1349.0 2601.0,1352.0 2618.0,1366.0 2629.0,1358.0 2637.5,1373.0 2646.0,1360.6 2657.0,1372.0 2665.5,1360.6 2679.6,1369.0 2693.6,1366.0 2702.0,1379.0 2735.7,1374.6 2752.5,1360.6 2769.0,1391.0 2786.0,1369.0 2797.0,1377.4 2808.6,1367.6 2822.7,1388.6 2834.0,1373.0 2846.5,1373.0 2852.0,1353.6 2862.0,1383.0 2876.0,1380.0 2891.0,1369.0 2904.0,1366.0 2921.0,1380.0 2936.0,1369.0 2947.5,1384.4 2970.0,1362.0" fill="none" stroke="#7a7a7a" stroke-width="3" stroke-linejoin="miter" />
<polyline points="2323.5,1499.0 2341.0,1494.0 2354.0,1471.7 2377.0,1459.0 2387.0,1474.0 2405.0,1455.0 2423.0,1443.6 2443.0,1417.0 2452.0,1396.0 2479.0,1383.7 2492.0,1343.0 2499.5,1302.0 2504.6,1238.0 2507.7,1110.0 2512.6,1130.5 2519.6,1144.5 2526.7,1172.6 2532.0,1230.0 2545.0,1231.5 2559.0,1189.4 2567.0,1223.0 2576.0,1251.0 2584.0,1259.6 2599.6,1310.0 2612.0,1314.0 2629.0,1324.0 2640.0,1318.5 2653.0,1355.0 2664.0,1338.0 2675.0,1374.6 2685.0,1372.0 2696.0,1419.5 2710.0,1416.7 2719.0,1426.5 2730.0,1422.0 2741.0,1461.6 2763.7,1459.0 2778.0,1482.6 2792.0,1485.5 2801.6,1498.0 2820.0,1498.0" fill="none" stroke="#30e030" stroke-width="3.5" stroke-linejoin="miter" />
<polyline points="2191.0,1500.0 2211.0,1424.5 2224.0,1422.0 2231.6,1404.0 2236.7,1366.0 2242.0,1322.0 2257.0,1297.0 2262.0,1251.0 2267.5,1198.0 2274.5,1149.0 2288.5,1124.0 2295.5,1079.0 2302.5,1037.0 2316.6,1005.0 2323.6,966.6 2330.6,928.0 2337.6,896.0 2346.0,891.0 2357.0,938.5 2371.0,933.0 2383.0,977.0 2400.7,963.0 2418.0,961.0 2429.0,1015.7 2439.0,1061.0 2450.0,1086.0 2465.6,1110.0 2474.0,1159.5 2485.0,1208.6 2492.0,1276.0 2506.0,1442.0 2511.0,1442.0 2511.0,1500.0" fill="none" stroke="#d02020" stroke-width="4" stroke-linejoin="miter" />
<polyline points="2189.5,1500.0 2192.0,1447.4 2208.7,1411.7 2213.8,1394.0 2219.0,1386.0 2231.6,1387.5 2235.5,1358.0 2242.0,1322.0 2257.0,1297.0 2262.0,1251.0 2267.5,1198.0 2274.5,1149.0 2288.5,1124.0 2295.5,1079.0 2302.5,1037.0 2316.6,1005.0 2323.6,966.6 2330.6,928.0 2337.6,896.0 2346.0,884.0 2353.4,891.0 2362.0,910.0 2372.7,887.6 2386.7,945.5 2397.0,924.5 2416.5,905.0 2427.0,938.5 2446.0,991.0 2455.0,980.6 2465.6,994.6 2474.0,1033.0 2481.0,1064.8 2495.5,1121.0 2504.0,1093.0 2509.5,1107.0 2511.0,1297.0 2511.0,1442.0" fill="none" stroke="#f4f4ff" stroke-width="3.5" stroke-linejoin="miter" />
<rect x="3063.0" y="418.0" width="209.0" height="32.0" fill="#a0a0a0" />
<rect x="3063.0" y="418.0" width="206.0" height="29.0" fill="#ffffff" />
<rect x="3066.0" y="421.0" width="203.0" height="26.0" fill="#f0f0f0" />
<polygon points="3074,425 3074,440 3084,432.5" fill="#606060"/>
<rect x="3100.0" y="430.0" width="3.0" height="3.0" fill="#9a9a9a" />
<rect x="3100.0" y="438.0" width="3.0" height="3.0" fill="#9a9a9a" />
<rect x="3115.5" y="430.0" width="3.0" height="3.0" fill="#9a9a9a" />
<rect x="3115.5" y="438.0" width="3.0" height="3.0" fill="#9a9a9a" />
<rect x="3131.0" y="430.0" width="3.0" height="3.0" fill="#9a9a9a" />
<rect x="3131.0" y="438.0" width="3.0" height="3.0" fill="#9a9a9a" />
<rect x="3146.5" y="430.0" width="3.0" height="3.0" fill="#9a9a9a" />
<rect x="3146.5" y="438.0" width="3.0" height="3.0" fill="#9a9a9a" />
<rect x="3162.0" y="430.0" width="3.0" height="3.0" fill="#9a9a9a" />
<rect x="3162.0" y="438.0" width="3.0" height="3.0" fill="#9a9a9a" />
<rect x="3177.5" y="430.0" width="3.0" height="3.0" fill="#9a9a9a" />
<rect x="3177.5" y="438.0" width="3.0" height="3.0" fill="#9a9a9a" />
<rect x="3193.0" y="430.0" width="3.0" height="3.0" fill="#9a9a9a" />
<rect x="3193.0" y="438.0" width="3.0" height="3.0" fill="#9a9a9a" />
<rect x="3208.5" y="430.0" width="3.0" height="3.0" fill="#9a9a9a" />
<rect x="3208.5" y="438.0" width="3.0" height="3.0" fill="#9a9a9a" />
<rect x="3224.0" y="430.0" width="3.0" height="3.0" fill="#9a9a9a" />
<rect x="3224.0" y="438.0" width="3.0" height="3.0" fill="#9a9a9a" />
<rect x="3239.5" y="430.0" width="3.0" height="3.0" fill="#9a9a9a" />
<rect x="3239.5" y="438.0" width="3.0" height="3.0" fill="#9a9a9a" />
<rect x="3255.0" y="430.0" width="3.0" height="3.0" fill="#9a9a9a" />
<rect x="3255.0" y="438.0" width="3.0" height="3.0" fill="#9a9a9a" />
<rect x="3067.0" y="476.6" width="43.0" height="40.0" fill="#ffffff" />
<rect x="3067.0" y="476.6" width="43.0" height="4.0" fill="#7a7a7a" />
<rect x="3067.0" y="476.6" width="4.0" height="40.0" fill="#7a7a7a" />
<polyline points="3078,496.6 3085,505.6 3099,487.6" fill="none" stroke="#000" stroke-width="7" stroke-linejoin="miter"/>
<text x="3129.0" y="514.5" font-size="42.76" fill="#000000" textLength="67.0" lengthAdjust="spacingAndGlyphs" >Cell</text>
<rect x="3067.0" y="543.5" width="43.0" height="40.0" fill="#ffffff" />
<rect x="3067.0" y="543.5" width="43.0" height="4.0" fill="#7a7a7a" />
<rect x="3067.0" y="543.5" width="4.0" height="40.0" fill="#7a7a7a" />
<polyline points="3078,563.5 3085,572.5 3099,554.5" fill="none" stroke="#000" stroke-width="7" stroke-linejoin="miter"/>
<text x="3129.0" y="581.5" font-size="44.41" fill="#000000" textLength="126.0" lengthAdjust="spacingAndGlyphs" >Comet</text>
<rect x="3067.0" y="610.5" width="43.0" height="40.0" fill="#ffffff" />
<rect x="3067.0" y="610.5" width="43.0" height="4.0" fill="#7a7a7a" />
<rect x="3067.0" y="610.5" width="4.0" height="40.0" fill="#7a7a7a" />
<polyline points="3078,630.5 3085,639.5 3099,621.5" fill="none" stroke="#000" stroke-width="7" stroke-linejoin="miter"/>
<text x="3129.0" y="648.5" font-size="42.76" fill="#000000" textLength="97.0" lengthAdjust="spacingAndGlyphs" >Head</text>
<rect x="3067.0" y="677.5" width="43.0" height="40.0" fill="#ffffff" />
<rect x="3067.0" y="677.5" width="43.0" height="4.0" fill="#7a7a7a" />
<rect x="3067.0" y="677.5" width="4.0" height="40.0" fill="#7a7a7a" />
<polyline points="3078,697.5 3085,706.5 3099,688.5" fill="none" stroke="#000" stroke-width="7" stroke-linejoin="miter"/>
<text x="3129.0" y="715.5" font-size="42.76" fill="#000000" textLength="65.0" lengthAdjust="spacingAndGlyphs" >Tail</text>
<rect x="3067.0" y="744.5" width="43.0" height="40.0" fill="#ffffff" />
<rect x="3067.0" y="744.5" width="43.0" height="4.0" fill="#7a7a7a" />
<rect x="3067.0" y="744.5" width="4.0" height="40.0" fill="#7a7a7a" />
<polyline points="3078,764.5 3085,773.5 3099,755.5" fill="none" stroke="#000" stroke-width="7" stroke-linejoin="miter"/>
<text x="3129.0" y="782.5" font-size="42.76" fill="#000000" textLength="67.0" lengthAdjust="spacingAndGlyphs" >Bkg</text>
<rect x="3074.0" y="831.5" width="181.0" height="3.0" fill="#a0a0a0" />
<rect x="3067.0" y="877.0" width="43.0" height="40.0" fill="#ffffff" />
<rect x="3067.0" y="877.0" width="43.0" height="4.0" fill="#7a7a7a" />
<rect x="3067.0" y="877.0" width="4.0" height="40.0" fill="#7a7a7a" />
<polyline points="3078,897 3085,906 3099,888" fill="none" stroke="#000" stroke-width="7" stroke-linejoin="miter"/>
<text x="3129.0" y="915.6" font-size="39.45" fill="#000000" textLength="97.0" lengthAdjust="spacingAndGlyphs" >Head</text>
<rect x="3124" y="871" width="105" height="59" fill="none" stroke="#000" stroke-width="2.5" stroke-dasharray="3,3"/>
<rect x="3067.0" y="972.0" width="43.0" height="40.0" fill="#ffffff" />
<rect x="3067.0" y="972.0" width="43.0" height="4.0" fill="#7a7a7a" />
<rect x="3067.0" y="972.0" width="4.0" height="40.0" fill="#7a7a7a" />
<polyline points="3078,992 3085,1001 3099,983" fill="none" stroke="#000" stroke-width="7" stroke-linejoin="miter"/>
<text x="3129.0" y="983.0" font-size="42.76" fill="#000000" textLength="97.0" lengthAdjust="spacingAndGlyphs" >Head</text>
<text x="3129.0" y="1036.5" font-size="43.00" fill="#000000" textLength="92.0" lengthAdjust="spacingAndGlyphs" >cont.</text>
<rect x="3067.0" y="1093.7" width="43.0" height="40.0" fill="#ffffff" />
<rect x="3067.0" y="1093.7" width="43.0" height="4.0" fill="#7a7a7a" />
<rect x="3067.0" y="1093.7" width="4.0" height="40.0" fill="#7a7a7a" />
<polyline points="3078,1113.7 3085,1122.7 3099,1104.7" fill="none" stroke="#000" stroke-width="7" stroke-linejoin="miter"/>
<text x="3129.0" y="1105.0" font-size="42.76" fill="#000000" textLength="97.0" lengthAdjust="spacingAndGlyphs" >Head</text>
<text x="3129.0" y="1157.0" font-size="43.00" fill="#000000" textLength="119.0" lengthAdjust="spacingAndGlyphs" >center</text>
<rect x="3067.0" y="1188.0" width="43.0" height="40.0" fill="#ffffff" />
<rect x="3067.0" y="1188.0" width="43.0" height="4.0" fill="#7a7a7a" />
<rect x="3067.0" y="1188.0" width="4.0" height="40.0" fill="#7a7a7a" />
<polyline points="3078,1208 3085,1217 3099,1199" fill="none" stroke="#000" stroke-width="7" stroke-linejoin="miter"/>
<text x="3129.0" y="1225.6" font-size="44.97" fill="#000000" textLength="65.0" lengthAdjust="spacingAndGlyphs" >Tail</text>
<rect x="3067.0" y="1280.0" width="43.0" height="40.0" fill="#ffffff" />
<rect x="3067.0" y="1280.0" width="43.0" height="4.0" fill="#7a7a7a" />
<rect x="3067.0" y="1280.0" width="4.0" height="40.0" fill="#7a7a7a" />
<polyline points="3078,1300 3085,1309 3099,1291" fill="none" stroke="#000" stroke-width="7" stroke-linejoin="miter"/>
<text x="3129.0" y="1294.0" font-size="42.76" fill="#000000" textLength="65.0" lengthAdjust="spacingAndGlyphs" >Tail</text>
<text x="3129.0" y="1345.0" font-size="43.00" fill="#000000" textLength="117.0" lengthAdjust="spacingAndGlyphs" >length</text>
<rect x="3075.0" y="1393.0" width="179.0" height="3.0" fill="#a0a0a0" />
<rect x="3067.0" y="1442.0" width="43.0" height="40.0" fill="#ffffff" />
<rect x="3067.0" y="1442.0" width="43.0" height="4.0" fill="#7a7a7a" />
<rect x="3067.0" y="1442.0" width="4.0" height="40.0" fill="#7a7a7a" />
<polyline points="3078,1462 3085,1471 3099,1453" fill="none" stroke="#000" stroke-width="7" stroke-linejoin="miter"/>
<text x="3129.0" y="1479.0" font-size="45.06" fill="#000000" textLength="123.0" lengthAdjust="spacingAndGlyphs" >Negat.</text>
<rect x="3067.0" y="1536.5" width="43.0" height="40.0" fill="#ffffff" />
<rect x="3067.0" y="1536.5" width="43.0" height="4.0" fill="#7a7a7a" />
<rect x="3067.0" y="1536.5" width="4.0" height="40.0" fill="#7a7a7a" />
<text x="3129.0" y="1574.0" font-size="42.76" fill="#000000" textLength="95.9" lengthAdjust="spacingAndGlyphs" >Mark</text>
<text x="2009.2" y="1912.5" font-size="45.35" fill="#101010" textLength="116.3" lengthAdjust="spacingAndGlyphs" >LHead</text>
<text x="2140.6" y="1912.5" font-size="45.35" fill="#101010" textLength="20.8" lengthAdjust="spacingAndGlyphs" >=</text>
<text x="2176.5" y="1912.5" font-size="45.35" fill="#e0202a" textLength="35.9" lengthAdjust="spacingAndGlyphs" >91</text>
<text x="2254.0" y="1912.5" font-size="45.35" fill="#101010" textLength="82.3" lengthAdjust="spacingAndGlyphs" >LTail</text>
<text x="2353.3" y="1912.5" font-size="45.35" fill="#101010" textLength="20.7" lengthAdjust="spacingAndGlyphs" >=</text>
<text x="2389.2" y="1912.5" font-size="45.35" fill="#e0202a" textLength="41.6" lengthAdjust="spacingAndGlyphs" >87</text>
<text x="2467.2" y="1912.5" font-size="45.35" fill="#101010" textLength="145.4" lengthAdjust="spacingAndGlyphs" >LComet</text>
<text x="2626.0" y="1912.5" font-size="45.35" fill="#101010" textLength="22.0" lengthAdjust="spacingAndGlyphs" >=</text>
<text x="2667.2" y="1912.5" font-size="45.35" fill="#e0202a" textLength="57.2" lengthAdjust="spacingAndGlyphs" >178</text>
<text x="2010.0" y="1966.4" font-size="45.35" fill="#101010" textLength="183.5" lengthAdjust="spacingAndGlyphs" >HeadDNA</text>
<text x="2207.7" y="1966.4" font-size="45.35" fill="#101010" textLength="20.8" lengthAdjust="spacingAndGlyphs" >=</text>
<text x="2245.5" y="1966.4" font-size="45.35" fill="#e0202a" textLength="135.2" lengthAdjust="spacingAndGlyphs" >66.5519</text>
<text x="2416.0" y="1966.4" font-size="45.35" fill="#101010" textLength="153.0" lengthAdjust="spacingAndGlyphs" >TailDNA</text>
<text x="2582.4" y="1966.4" font-size="45.35" fill="#101010" textLength="22.6" lengthAdjust="spacingAndGlyphs" >=</text>
<text x="2621.0" y="1966.4" font-size="45.35" fill="#e0202a" textLength="130.3" lengthAdjust="spacingAndGlyphs" >33.4481</text>
<text x="2007.3" y="2019.4" font-size="45.35" fill="#101010" textLength="59.5" lengthAdjust="spacingAndGlyphs" >TM</text>
<text x="2082.0" y="2019.4" font-size="45.35" fill="#101010" textLength="22.7" lengthAdjust="spacingAndGlyphs" >=</text>
<text x="2119.8" y="2019.4" font-size="45.35" fill="#e0202a" textLength="136.1" lengthAdjust="spacingAndGlyphs" >29.0999</text>
<text x="2314.5" y="2019.4" font-size="45.35" fill="#101010" textLength="91.7" lengthAdjust="spacingAndGlyphs" >OTM</text>
<text x="2418.5" y="2019.4" font-size="45.35" fill="#101010" textLength="23.5" lengthAdjust="spacingAndGlyphs" >=</text>
<text x="2460.5" y="2019.4" font-size="45.35" fill="#e0202a" textLength="134.5" lengthAdjust="spacingAndGlyphs" >18.7436</text>
<rect x="34.0" y="2095.0" width="3253.0" height="74.0" fill="#f0f0f0" />
<rect x="44.5" y="2102.0" width="3242.5" height="3.0" fill="#a0a0a0" />
<rect x="44.5" y="2102.0" width="3.5" height="67.0" fill="#a0a0a0" />
<text x="61.0" y="2155.0" font-size="44.14" fill="#000000" textLength="119.0" lengthAdjust="spacingAndGlyphs" >Ready.</text>
<line x1="3239.0" y1="2168.0" x2="3278.0" y2="2128.5" stroke="#909090" stroke-width="3.5" />
<line x1="3260.0" y1="2168.0" x2="3278.0" y2="2150.0" stroke="#909090" stroke-width="3.5" />
<rect x="3276.0" y="2105.0" width="11.0" height="64.0" fill="#f8f6f8" />
<rect x="40.8" y="37.0" width="56.5" height="4.0" fill="#f4f0b8" />
<rect x="40.8" y="40.5" width="56.5" height="4.0" fill="#fffdf6" />
<rect x="40.8" y="44.0" width="56.5" height="4.0" fill="#fffdf6" />
<rect x="40.8" y="47.5" width="56.5" height="4.0" fill="#fffdf6" />
<rect x="40.8" y="51.0" width="56.5" height="4.0" fill="#fffdf6" />
<rect x="40.8" y="54.5" width="56.5" height="4.0" fill="#fffdf6" />
<rect x="40.8" y="58.0" width="7.5" height="4.0" fill="#fffdf6" />
<rect x="47.8" y="58.0" width="4.0" height="4.0" fill="#e0c078" />
<rect x="51.3" y="58.0" width="4.0" height="4.0" fill="#f4dc68" />
<rect x="54.8" y="58.0" width="11.0" height="4.0" fill="#e0c078" />
<rect x="65.3" y="58.0" width="11.0" height="4.0" fill="#b89c68" />
<rect x="75.8" y="58.0" width="11.0" height="4.0" fill="#8c7660" />
<rect x="86.3" y="58.0" width="4.0" height="4.0" fill="#e8e0d0" />
<rect x="89.8" y="58.0" width="7.5" height="4.0" fill="#fffdf6" />
<rect x="40.8" y="61.5" width="7.5" height="4.0" fill="#fffdf6" />
<rect x="47.8" y="61.5" width="4.0" height="4.0" fill="#f4dc68" />
<rect x="51.3" y="61.5" width="4.0" height="4.0" fill="#fcf078" />
<rect x="54.8" y="61.5" width="4.0" height="4.0" fill="#f4dc68" />
<rect x="58.3" y="61.5" width="4.0" height="4.0" fill="#e0c078" />
<rect x="61.8" y="61.5" width="11.0" height="4.0" fill="#a88050" />
<rect x="72.3" y="61.5" width="18.0" height="4.0" fill="#8c7660" />
<rect x="89.8" y="61.5" width="7.5" height="4.0" fill="#fffdf6" />
<rect x="40.8" y="65.0" width="7.5" height="4.0" fill="#fffdf6" />
<rect x="47.8" y="65.0" width="4.0" height="4.0" fill="#f8f0b0" />
<rect x="51.3" y="65.0" width="4.0" height="4.0" fill="#f4dc68" />
<rect x="54.8" y="65.0" width="4.0" height="4.0" fill="#e0a040" />
<rect x="58.3" y="65.0" width="7.5" height="4.0" fill="#a88050" />
<rect x="65.3" y="65.0" width="25.0" height="4.0" fill="#8c7660" />
<rect x="89.8" y="65.0" width="7.5" height="4.0" fill="#fffdf6" />
<rect x="40.8" y="68.5" width="7.5" height="4.0" fill="#fffdf6" />
<rect x="47.8" y="68.5" width="4.0" height="4.0" fill="#e0c078" />
<rect x="51.3" y="68.5" width="7.5" height="4.0" fill="#e0a040" />
<rect x="58.3" y="68.5" width="4.0" height="4.0" fill="#e0b8a8" />
<rect x="61.8" y="68.5" width="11.0" height="4.0" fill="#a88050" />
<rect x="72.3" y="68.5" width="18.0" height="4.0" fill="#8c7660" />
<rect x="89.8" y="68.5" width="7.5" height="4.0" fill="#fffdf6" />
<rect x="40.8" y="72.0" width="11.0" height="4.0" fill="#fffdf6" />
<rect x="51.3" y="72.0" width="7.5" height="4.0" fill="#e0a040" />
<rect x="58.3" y="72.0" width="18.0" height="4.0" fill="#e0b8a8" />
<rect x="75.8" y="72.0" width="14.5" height="4.0" fill="#e8e0d0" />
<rect x="89.8" y="72.0" width="7.5" height="4.0" fill="#fffdf6" />
<rect x="40.8" y="75.5" width="56.5" height="4.0" fill="#fffdf6" />
<rect x="40.8" y="79.0" width="56.5" height="4.0" fill="#fffdf6" />
<rect x="40.8" y="82.5" width="56.5" height="4.0" fill="#fffdf6" />
<rect x="40.8" y="86.0" width="56.5" height="4.0" fill="#fffdf6" />
<rect x="40.8" y="89.5" width="56.5" height="4.0" fill="#f4f0b8" />
<rect x="58.0" y="367.5" width="58.1" height="4.1" fill="#fafafa" />
<rect x="58.0" y="371.1" width="7.7" height="4.1" fill="#fafafa" />
<rect x="65.2" y="371.1" width="4.1" height="4.1" fill="#e0c078" />
<rect x="68.8" y="371.1" width="4.1" height="4.1" fill="#f4dc68" />
<rect x="72.4" y="371.1" width="11.3" height="4.1" fill="#e0c078" />
<rect x="83.2" y="371.1" width="11.3" height="4.1" fill="#b89c68" />
<rect x="94.0" y="371.1" width="11.3" height="4.1" fill="#8c7660" />
<rect x="104.8" y="371.1" width="4.1" height="4.1" fill="#e8e0d0" />
<rect x="108.4" y="371.1" width="7.7" height="4.1" fill="#fafafa" />
<rect x="58.0" y="374.7" width="7.7" height="4.1" fill="#fafafa" />
<rect x="65.2" y="374.7" width="4.1" height="4.1" fill="#f4dc68" />
<rect x="68.8" y="374.7" width="4.1" height="4.1" fill="#fcf078" />
<rect x="72.4" y="374.7" width="4.1" height="4.1" fill="#f4dc68" />
<rect x="76.0" y="374.7" width="4.1" height="4.1" fill="#e0c078" />
<rect x="79.6" y="374.7" width="11.3" height="4.1" fill="#a88050" />
<rect x="90.4" y="374.7" width="18.5" height="4.1" fill="#8c7660" />
<rect x="108.4" y="374.7" width="7.7" height="4.1" fill="#fafafa" />
<rect x="58.0" y="378.3" width="7.7" height="4.1" fill="#fafafa" />
<rect x="65.2" y="378.3" width="4.1" height="4.1" fill="#f8f0b0" />
<rect x="68.8" y="378.3" width="4.1" height="4.1" fill="#f4dc68" />
<rect x="72.4" y="378.3" width="4.1" height="4.1" fill="#e0a040" />
<rect x="76.0" y="378.3" width="7.7" height="4.1" fill="#a88050" />
<rect x="83.2" y="378.3" width="25.7" height="4.1" fill="#8c7660" />
<rect x="108.4" y="378.3" width="7.7" height="4.1" fill="#fafafa" />
<rect x="58.0" y="381.9" width="7.7" height="4.1" fill="#fafafa" />
<rect x="65.2" y="381.9" width="4.1" height="4.1" fill="#e0c078" />
<rect x="68.8" y="381.9" width="7.7" height="4.1" fill="#e0a040" />
<rect x="76.0" y="381.9" width="4.1" height="4.1" fill="#e0b8a8" />
<rect x="79.6" y="381.9" width="11.3" height="4.1" fill="#a88050" />
<rect x="90.4" y="381.9" width="18.5" height="4.1" fill="#8c7660" />
<rect x="108.4" y="381.9" width="7.7" height="4.1" fill="#fafafa" />
<rect x="58.0" y="385.5" width="11.3" height="4.1" fill="#fafafa" />
<rect x="68.8" y="385.5" width="7.7" height="4.1" fill="#e0a040" />
<rect x="76.0" y="385.5" width="18.5" height="4.1" fill="#e0b8a8" />
<rect x="94.0" y="385.5" width="14.9" height="4.1" fill="#e8e0d0" />
<rect x="108.4" y="385.5" width="7.7" height="4.1" fill="#fafafa" />
<rect x="58.0" y="389.1" width="58.1" height="4.1" fill="#fafafa" />
<rect x="1995.5" y="356.5" width="56.5" height="4.0" fill="#fbfdfd" />
<rect x="1995.5" y="360.0" width="7.5" height="4.0" fill="#fbfdfd" />
<rect x="2002.5" y="360.0" width="4.0" height="4.0" fill="#e0c078" />
<rect x="2006.0" y="360.0" width="4.0" height="4.0" fill="#f4dc68" />
<rect x="2009.5" y="360.0" width="11.0" height="4.0" fill="#e0c078" />
<rect x="2020.0" y="360.0" width="11.0" height="4.0" fill="#b89c68" />
<rect x="2030.5" y="360.0" width="11.0" height="4.0" fill="#8c7660" />
<rect x="2041.0" y="360.0" width="4.0" height="4.0" fill="#e8e0d0" />
<rect x="2044.5" y="360.0" width="7.5" height="4.0" fill="#fbfdfd" />
<rect x="1995.5" y="363.5" width="7.5" height="4.0" fill="#fbfdfd" />
<rect x="2002.5" y="363.5" width="4.0" height="4.0" fill="#f4dc68" />
<rect x="2006.0" y="363.5" width="4.0" height="4.0" fill="#fcf078" />
<rect x="2009.5" y="363.5" width="4.0" height="4.0" fill="#f4dc68" />
<rect x="2013.0" y="363.5" width="4.0" height="4.0" fill="#e0c078" />
<rect x="2016.5" y="363.5" width="11.0" height="4.0" fill="#a88050" />
<rect x="2027.0" y="363.5" width="18.0" height="4.0" fill="#8c7660" />
<rect x="2044.5" y="363.5" width="7.5" height="4.0" fill="#fbfdfd" />
<rect x="1995.5" y="367.0" width="7.5" height="4.0" fill="#fbfdfd" />
<rect x="2002.5" y="367.0" width="4.0" height="4.0" fill="#f8f0b0" />
<rect x="2006.0" y="367.0" width="4.0" height="4.0" fill="#f4dc68" />
<rect x="2009.5" y="367.0" width="4.0" height="4.0" fill="#e0a040" />
<rect x="2013.0" y="367.0" width="7.5" height="4.0" fill="#a88050" />
<rect x="2020.0" y="367.0" width="25.0" height="4.0" fill="#8c7660" />
<rect x="2044.5" y="367.0" width="7.5" height="4.0" fill="#fbfdfd" />
<rect x="1995.5" y="370.5" width="7.5" height="4.0" fill="#fbfdfd" />
<rect x="2002.5" y="370.5" width="4.0" height="4.0" fill="#e0c078" />
<rect x="2006.0" y="370.5" width="7.5" height="4.0" fill="#e0a040" />
<rect x="2013.0" y="370.5" width="4.0" height="4.0" fill="#e0b8a8" />
<rect x="2016.5" y="370.5" width="11.0" height="4.0" fill="#a88050" />
<rect x="2027.0" y="370.5" width="18.0" height="4.0" fill="#8c7660" />
<rect x="2044.5" y="370.5" width="7.5" height="4.0" fill="#fbfdfd" />
<rect x="1995.5" y="374.0" width="11.0" height="4.0" fill="#fbfdfd" />
<rect x="2006.0" y="374.0" width="7.5" height="4.0" fill="#e0a040" />
<rect x="2013.0" y="374.0" width="18.0" height="4.0" fill="#e0b8a8" />
<rect x="2030.5" y="374.0" width="14.5" height="4.0" fill="#e8e0d0" />
<rect x="2044.5" y="374.0" width="7.5" height="4.0" fill="#fbfdfd" />
<rect x="1995.5" y="377.5" width="56.5" height="4.0" fill="#fbfdfd" />
</svg>
</body></html>
